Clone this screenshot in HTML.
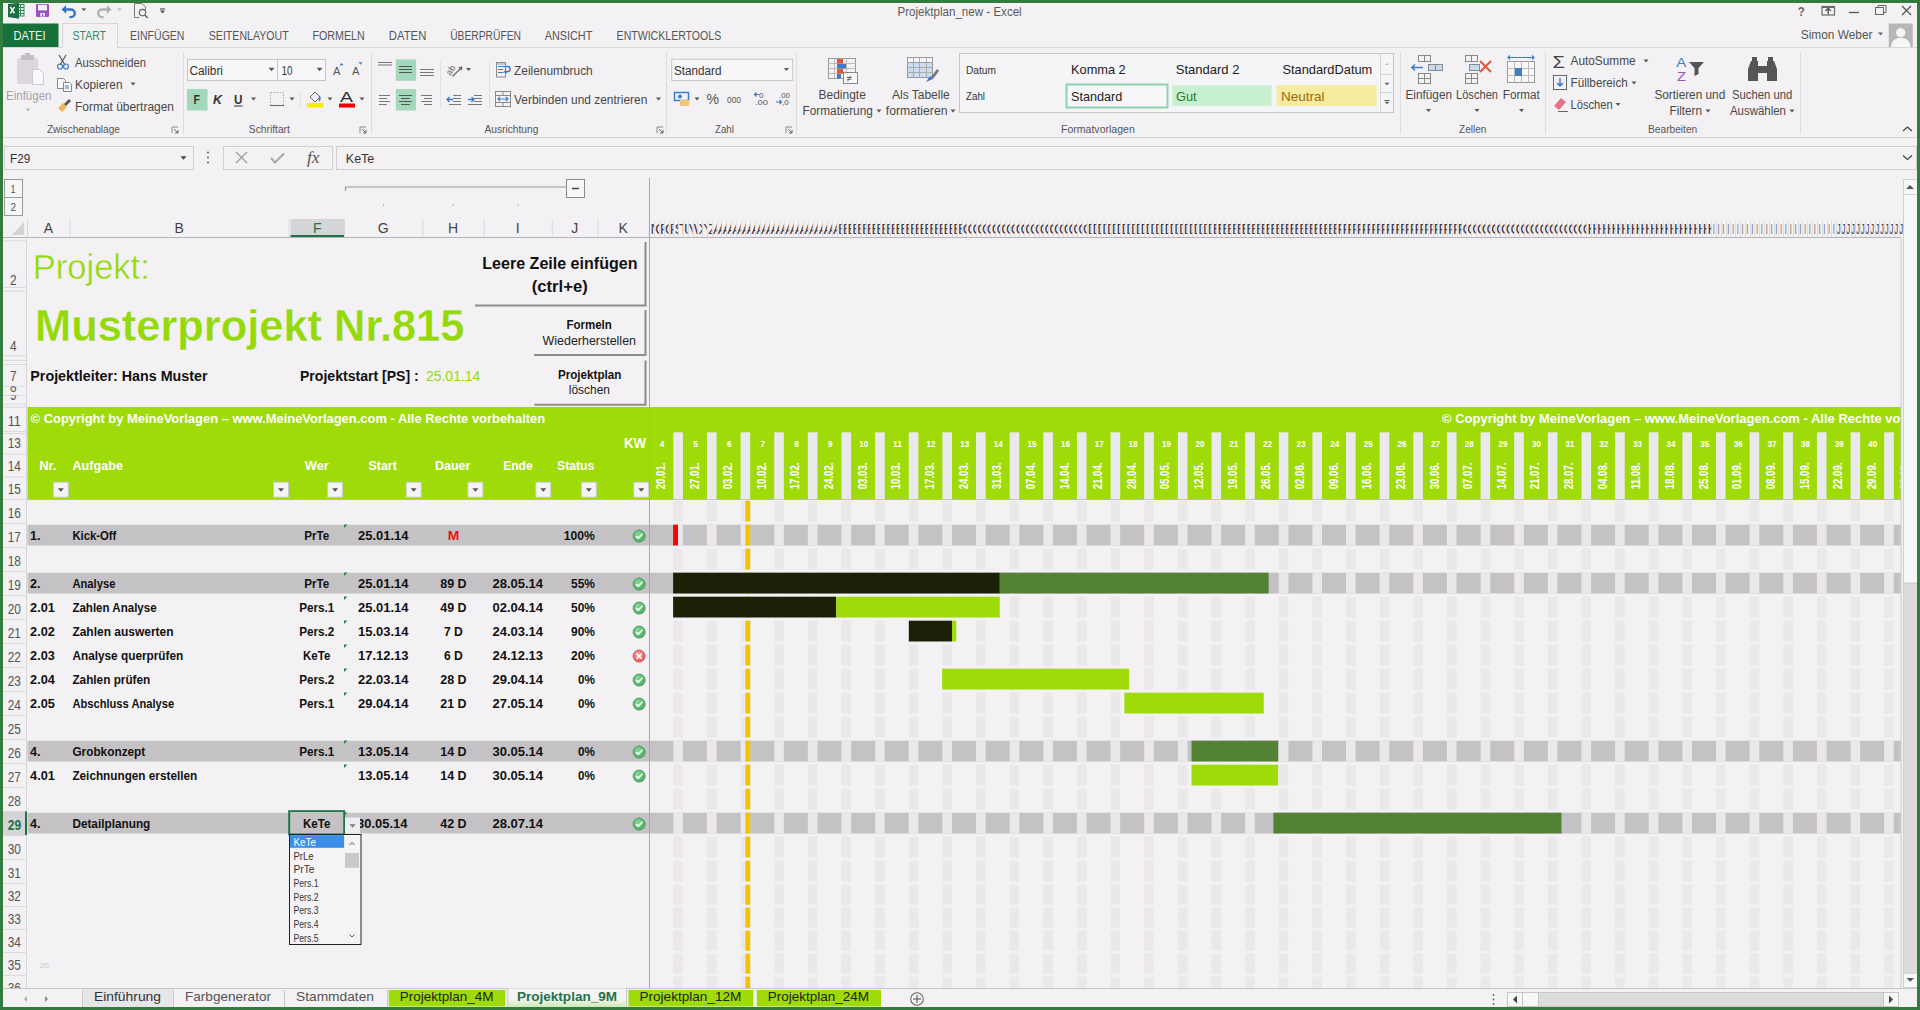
<!DOCTYPE html>
<html lang="de"><head><meta charset="utf-8"><title>Projektplan_new - Excel</title>
<style>
html,body{margin:0;padding:0;width:1920px;height:1010px;overflow:hidden;background:#f3f1f4;font-family:"Liberation Sans", sans-serif;}
svg text{white-space:pre;}
</style></head><body>
<div id="ribbon" style="position:absolute;left:0px;top:0px;width:1920px;height:178px;overflow:hidden;"><svg width="1920" height="178" viewBox="0 0 1920 178" style="display:block;font-family:'Liberation Sans', sans-serif"><text x="897.5" y="15.8" font-size="12" fill="#5b5b5b" textLength="124.2" lengthAdjust="spacingAndGlyphs">Projektplan_new - Excel</text><rect x="17.50" y="4.50" width="6.50" height="11.50" fill="#f4f6f4" stroke="#2a8a52" stroke-width="1"/><line x1="18" y1="7.5" x2="24" y2="7.5" stroke="#2a8a52" stroke-width="1"/><line x1="18" y1="10.5" x2="24" y2="10.5" stroke="#2a8a52" stroke-width="1"/><line x1="18" y1="13.5" x2="24" y2="13.5" stroke="#2a8a52" stroke-width="1"/><line x1="20.5" y1="4.5" x2="20.5" y2="16" stroke="#2a8a52" stroke-width="1"/><path d="M8 4 L19 2.8 L19 18.8 L8 17 Z" fill="#1d6e42"/><path d="M10.3 6.8 l4.2 6.6 M14.5 6.8 l-4.2 6.6" fill="none" stroke="#ffffff" stroke-width="1.5"/><rect x="36.00" y="4.00" width="13.00" height="13.00" fill="#9a52c0" rx="1.2"/><rect x="38.00" y="4.80" width="9.00" height="5.60" fill="#f4eef7"/><rect x="40.30" y="13.00" width="4.60" height="3.60" fill="#f4eef7"/><rect x="42.00" y="13.80" width="1.30" height="2.80" fill="#9a52c0"/><path d="M64.5 9.5 h6.5 a3.8 3.8 0 0 1 0 7.6 h-1.5" fill="none" stroke="#2f74c6" stroke-width="2.4"/><path d="M61.5 9.5 l4.6 -4.2 v8.4 z" fill="#2f74c6"/><path d="M81.3 8.3h5l-2.5 3z" fill="#666"/><path d="M108.5 9.5 h-6.5 a3.8 3.8 0 0 0 0 7.6 h1.5" fill="none" stroke="#b0aeb1" stroke-width="2.4"/><path d="M111.5 9.5 l-4.6 -4.2 v8.4 z" fill="#b0aeb1"/><path d="M117.0 8.3h5l-2.5 3z" fill="#c4c2c5"/><path d="M134.5 17.5 V3.5 H142 l3.5 3.5 v3" fill="none" stroke="#777" stroke-width="1"/><path d="M134.5 17.5 h5" fill="none" stroke="#777" stroke-width="1"/><circle cx="142.5" cy="12.6" r="3.2" fill="none" stroke="#666" stroke-width="1.2"/><line x1="144.8" y1="15" x2="147.8" y2="18" stroke="#666" stroke-width="1.6"/><line x1="160" y1="9" x2="165" y2="9" stroke="#555" stroke-width="1.2"/><path d="M160.0 10.5h5l-2.5 3z" fill="#555"/><text x="1797.8" y="15.5" font-size="13" fill="#666" font-weight="bold" textLength="7.0" lengthAdjust="spacingAndGlyphs">?</text><rect x="1822.00" y="6.50" width="12.50" height="8.50" fill="none" stroke="#6a6a6a" stroke-width="1.2"/><rect x="1822.00" y="6.00" width="12.50" height="2.00" fill="#6a6a6a"/><path d="M1828.2 14.5 v-6 M1825.5 11 l2.7 -2.7 l2.7 2.7" fill="none" stroke="#555" stroke-width="1.4"/><line x1="1849" y1="12.5" x2="1859" y2="12.5" stroke="#555" stroke-width="1.3"/><rect x="1875.50" y="7.50" width="8.00" height="7.00" fill="none" stroke="#666" stroke-width="1"/><path d="M1878 7.5 v-2 h8 v7 h-2" fill="none" stroke="#666" stroke-width="1"/><path d="M1902 6 l9 9 M1911 6 l-9 9" fill="none" stroke="#555" stroke-width="1.3"/><text x="1800.7" y="39.0" font-size="12" fill="#555" textLength="71.9" lengthAdjust="spacingAndGlyphs">Simon Weber</text><path d="M1878.0 32.5h5l-2.5 3z" fill="#666"/><rect x="1888.75" y="23.50" width="24.00" height="24.00" fill="#b8b6b9"/><path d="M1900.7 28 a4.6 4.6 0 1 1 -0.1 0 z" fill="#f6f6f6"/><path d="M1891 47.5 c0 -7 4 -9.5 9.7 -9.5 c5.7 0 9.7 2.5 9.7 9.5 z" fill="#f6f6f6"/><rect x="3.00" y="23.50" width="55.50" height="24.00" fill="#16703a"/><text x="13.5" y="40.0" font-size="12" fill="#f2f5f2" textLength="32.0" lengthAdjust="spacingAndGlyphs">DATEI</text><line x1="3" y1="47.5" x2="1917" y2="47.5" stroke="#d6d5d8" stroke-width="1"/><path d="M62.5 47.5 V23.5 H117.5 V47.5" fill="#f3f1f4" stroke="#d6d5d8" stroke-width="1"/><rect x="63.00" y="46.00" width="54.00" height="3.00" fill="#f3f1f4"/><text x="72.5" y="40.0" font-size="12" fill="#3a8a5e" textLength="33.5" lengthAdjust="spacingAndGlyphs">START</text><text x="130.0" y="40.0" font-size="12" fill="#555" textLength="54.5" lengthAdjust="spacingAndGlyphs">EINFÜGEN</text><text x="208.8" y="40.0" font-size="12" fill="#555" textLength="79.8" lengthAdjust="spacingAndGlyphs">SEITENLAYOUT</text><text x="312.5" y="40.0" font-size="12" fill="#555" textLength="52.2" lengthAdjust="spacingAndGlyphs">FORMELN</text><text x="388.8" y="40.0" font-size="12" fill="#555" textLength="37.5" lengthAdjust="spacingAndGlyphs">DATEN</text><text x="450.2" y="40.0" font-size="12" fill="#555" textLength="70.8" lengthAdjust="spacingAndGlyphs">ÜBERPRÜFEN</text><text x="544.7" y="40.0" font-size="12" fill="#555" textLength="47.6" lengthAdjust="spacingAndGlyphs">ANSICHT</text><text x="616.6" y="40.0" font-size="12" fill="#555" textLength="104.6" lengthAdjust="spacingAndGlyphs">ENTWICKLERTOOLS</text><line x1="3" y1="137.5" x2="1917" y2="137.5" stroke="#d4d3d6" stroke-width="1"/><line x1="183.5" y1="52" x2="183.5" y2="134" stroke="#dddcdf" stroke-width="1"/><line x1="371.5" y1="52" x2="371.5" y2="134" stroke="#dddcdf" stroke-width="1"/><line x1="666.5" y1="52" x2="666.5" y2="134" stroke="#dddcdf" stroke-width="1"/><line x1="796.5" y1="52" x2="796.5" y2="134" stroke="#dddcdf" stroke-width="1"/><line x1="1400.5" y1="52" x2="1400.5" y2="134" stroke="#dddcdf" stroke-width="1"/><line x1="1545.5" y1="52" x2="1545.5" y2="134" stroke="#dddcdf" stroke-width="1"/><line x1="1800.5" y1="52" x2="1800.5" y2="134" stroke="#dddcdf" stroke-width="1"/><text x="46.9" y="132.6" font-size="11" fill="#555" textLength="73.1" lengthAdjust="spacingAndGlyphs">Zwischenablage</text><text x="248.8" y="132.6" font-size="11" fill="#555" textLength="41.1" lengthAdjust="spacingAndGlyphs">Schriftart</text><text x="484.5" y="132.6" font-size="11" fill="#555" textLength="53.9" lengthAdjust="spacingAndGlyphs">Ausrichtung</text><text x="715.0" y="132.6" font-size="11" fill="#555" textLength="18.9" lengthAdjust="spacingAndGlyphs">Zahl</text><text x="1061.0" y="132.6" font-size="11" fill="#555" textLength="73.8" lengthAdjust="spacingAndGlyphs">Formatvorlagen</text><text x="1459.0" y="132.6" font-size="11" fill="#555" textLength="27.4" lengthAdjust="spacingAndGlyphs">Zellen</text><text x="1648.0" y="132.6" font-size="11" fill="#555" textLength="49.3" lengthAdjust="spacingAndGlyphs">Bearbeiten</text><path d="M172 133 v-6 h6" fill="none" stroke="#888" stroke-width="1"/><path d="M174 129 l4 4 M178 130 v3 h-3" fill="none" stroke="#666" stroke-width="1"/><path d="M360 133 v-6 h6" fill="none" stroke="#888" stroke-width="1"/><path d="M362 129 l4 4 M366 130 v3 h-3" fill="none" stroke="#666" stroke-width="1"/><path d="M657 133 v-6 h6" fill="none" stroke="#888" stroke-width="1"/><path d="M659 129 l4 4 M663 130 v3 h-3" fill="none" stroke="#666" stroke-width="1"/><path d="M786 133 v-6 h6" fill="none" stroke="#888" stroke-width="1"/><path d="M788 129 l4 4 M792 130 v3 h-3" fill="none" stroke="#666" stroke-width="1"/><rect x="17.00" y="58.00" width="21.00" height="26.00" fill="#dcd7df" rx="1.5"/><rect x="21.00" y="55.00" width="13.00" height="5.00" fill="#c2bcc5" rx="1"/><rect x="25.00" y="53.00" width="5.00" height="3.00" fill="#c2bcc5"/><path d="M32.5 69.5 h7 l4 4 v11 h-11 z" fill="#f9f8fa" stroke="#cdc9d0" stroke-width="1"/><text x="6.0" y="100.0" font-size="12" fill="#a5a3a7" textLength="45.5" lengthAdjust="spacingAndGlyphs">Einfügen</text><path d="M25.5 108.5h5l-2.5 3z" fill="#bbb"/><text x="75.0" y="66.9" font-size="12" fill="#484848" textLength="71.0" lengthAdjust="spacingAndGlyphs">Ausschneiden</text><path d="M59 55 l6 10 M66 55 l-6 10" fill="none" stroke="#555" stroke-width="1.2"/><circle cx="60" cy="66.5" r="2.5" fill="none" stroke="#3d7cc9" stroke-width="1.2"/><circle cx="66" cy="66.5" r="2.5" fill="none" stroke="#3d7cc9" stroke-width="1.2"/><text x="75.0" y="88.8" font-size="12" fill="#484848" textLength="47.5" lengthAdjust="spacingAndGlyphs">Kopieren</text><path d="M130.5 82.5h5l-2.5 3z" fill="#555"/><path d="M57.5 78.5 h6 l2 2 v8 h-8 z" fill="#f8f8f8" stroke="#888" stroke-width="1"/><path d="M63.5 82.5 h6 l2 2 v7 h-8 z" fill="#f8f8f8" stroke="#888" stroke-width="1"/><line x1="65" y1="86" x2="69" y2="86" stroke="#3d7cc9" stroke-width="1"/><line x1="65" y1="88" x2="69" y2="88" stroke="#3d7cc9" stroke-width="1"/><text x="75.0" y="111.2" font-size="12" fill="#484848" textLength="99.0" lengthAdjust="spacingAndGlyphs">Format übertragen</text><path d="M58 108 l5 -5 l4 4 l-5 5 z" fill="#f0b65a"/><path d="M64 104 l5 -5 l2 2 l-5 5 z" fill="#555"/><rect x="187.50" y="59.50" width="90.00" height="21.00" fill="#f7f6f9" stroke="#c6c6c6" stroke-width="1"/><rect x="277.50" y="59.50" width="48.00" height="21.00" fill="#f7f6f9" stroke="#c6c6c6" stroke-width="1"/><text x="189.4" y="74.6" font-size="12" fill="#333" textLength="33.6" lengthAdjust="spacingAndGlyphs">Calibri</text><path d="M268.5 67.8h6l-3.0 3.5z" fill="#555"/><text x="281.6" y="74.6" font-size="12" fill="#333" textLength="11.0" lengthAdjust="spacingAndGlyphs">10</text><path d="M316.6 67.8h6l-3.0 3.5z" fill="#555"/><text x="333.0" y="75.0" font-size="11" fill="#555" textLength="7.5" lengthAdjust="spacingAndGlyphs">A</text><path d="M339.3 65.3 l2.2 -2.3 l2.2 2.3 z" fill="#3d7cc9"/><text x="352.0" y="75.0" font-size="11" fill="#555" textLength="7.5" lengthAdjust="spacingAndGlyphs">A</text><path d="M358.5 62.2h4l-2.0 2.5z" fill="#3d7cc9"/><rect x="187.00" y="89.00" width="20.50" height="21.50" fill="#a3d8ba"/><text x="193.5" y="103.7" font-size="13" fill="#333" font-weight="bold" textLength="6.5" lengthAdjust="spacingAndGlyphs">F</text><text x="213.0" y="103.7" font-size="13" fill="#333" font-weight="bold" font-style="italic" textLength="9.0" lengthAdjust="spacingAndGlyphs">K</text><text x="234.0" y="103.7" font-size="13" fill="#333" font-weight="bold" textLength="8.5" lengthAdjust="spacingAndGlyphs">U</text><line x1="234" y1="106" x2="242.5" y2="106" stroke="#333" stroke-width="1"/><path d="M251.0 97.5h5l-2.5 3z" fill="#555"/><rect x="270.50" y="92.50" width="13.00" height="13.00" fill="none" stroke="#aaa" stroke-width="1" stroke-dasharray="1.5 1.5"/><line x1="270" y1="105.5" x2="284" y2="105.5" stroke="#666" stroke-width="1"/><path d="M289.5 97.5h5l-2.5 3z" fill="#555"/><line x1="300.5" y1="92" x2="300.5" y2="108" stroke="#e0dfe2" stroke-width="1"/><path d="M310 97 l5 -5 l5 5 l-5 5 z" fill="none" stroke="#666" stroke-width="1"/><path d="M319 96 q2 2 0 5" fill="none" stroke="#3d7cc9" stroke-width="1.5"/><rect x="307.00" y="103.00" width="16.50" height="4.50" fill="#f5ef00"/><path d="M327.5 97.5h5l-2.5 3z" fill="#555"/><text x="340.0" y="101.5" font-size="14" fill="#333" textLength="13.0" lengthAdjust="spacingAndGlyphs">A</text><rect x="339.00" y="103.50" width="16.00" height="4.00" fill="#f00000"/><path d="M359.5 97.5h5l-2.5 3z" fill="#555"/><line x1="378" y1="62.5" x2="392" y2="62.5" stroke="#777" stroke-width="1"/><line x1="378" y1="65.0" x2="392" y2="65.0" stroke="#777" stroke-width="1"/><line x1="378" y1="67.5" x2="378" y2="67.5" stroke="#777" stroke-width="1"/><rect x="395.80" y="59.40" width="20.30" height="21.40" fill="#a3d8ba"/><line x1="399" y1="66.5" x2="412" y2="66.5" stroke="#555" stroke-width="1"/><line x1="399" y1="69.5" x2="412" y2="69.5" stroke="#555" stroke-width="1"/><line x1="399" y1="72.5" x2="412" y2="72.5" stroke="#555" stroke-width="1"/><line x1="420" y1="69.5" x2="434" y2="69.5" stroke="#777" stroke-width="1"/><line x1="420" y1="72.5" x2="434" y2="72.5" stroke="#777" stroke-width="1"/><line x1="420" y1="75.5" x2="434" y2="75.5" stroke="#777" stroke-width="1"/><line x1="379" y1="95.5" x2="390" y2="95.5" stroke="#777" stroke-width="1"/><line x1="379" y1="98.5" x2="387" y2="98.5" stroke="#777" stroke-width="1"/><line x1="379" y1="101.5" x2="390" y2="101.5" stroke="#777" stroke-width="1"/><line x1="379" y1="104.5" x2="387" y2="104.5" stroke="#777" stroke-width="1"/><rect x="395.80" y="89.10" width="20.30" height="21.40" fill="#a3d8ba"/><line x1="399" y1="95.5" x2="412" y2="95.5" stroke="#555" stroke-width="1"/><line x1="401" y1="98.5" x2="410" y2="98.5" stroke="#555" stroke-width="1"/><line x1="399" y1="101.5" x2="412" y2="101.5" stroke="#555" stroke-width="1"/><line x1="401" y1="104.5" x2="410" y2="104.5" stroke="#555" stroke-width="1"/><line x1="421" y1="95.5" x2="432" y2="95.5" stroke="#777" stroke-width="1"/><line x1="424" y1="98.5" x2="432" y2="98.5" stroke="#777" stroke-width="1"/><line x1="421" y1="101.5" x2="432" y2="101.5" stroke="#777" stroke-width="1"/><line x1="424" y1="104.5" x2="432" y2="104.5" stroke="#777" stroke-width="1"/><path d="M452.5 76.5 l9 -9" fill="none" stroke="#666" stroke-width="1.1"/><path d="M462.5 66.5 l-4.2 0.8 l3.4 3.4 z" fill="#666"/><text transform="translate(450.5,76) rotate(-58)" font-size="9" fill="#666">ab</text><path d="M466.0 68.0h5l-2.5 3z" fill="#555"/><line x1="440.5" y1="62" x2="440.5" y2="108" stroke="#e0dfe2" stroke-width="1"/><line x1="489.5" y1="62" x2="489.5" y2="108" stroke="#e0dfe2" stroke-width="1"/><line x1="453" y1="95.5" x2="461" y2="95.5" stroke="#777" stroke-width="1"/><line x1="453" y1="98.5" x2="461" y2="98.5" stroke="#777" stroke-width="1"/><line x1="453" y1="101.5" x2="461" y2="101.5" stroke="#777" stroke-width="1"/><line x1="449" y1="104.5" x2="461" y2="104.5" stroke="#777" stroke-width="1"/><path d="M447 99.5 h6 M449.5 97 l-2.5 2.5 l2.5 2.5" fill="none" stroke="#3d7cc9" stroke-width="1.3"/><line x1="474" y1="95.5" x2="482" y2="95.5" stroke="#777" stroke-width="1"/><line x1="474" y1="98.5" x2="482" y2="98.5" stroke="#777" stroke-width="1"/><line x1="474" y1="101.5" x2="482" y2="101.5" stroke="#777" stroke-width="1"/><line x1="468" y1="104.5" x2="482" y2="104.5" stroke="#777" stroke-width="1"/><path d="M468 99.5 h6 M471.5 97 l2.5 2.5 l-2.5 2.5" fill="none" stroke="#3d7cc9" stroke-width="1.3"/><rect x="496.50" y="62.50" width="9.00" height="14.50" fill="none" stroke="#8a8a8a" stroke-width="1"/><rect x="497.00" y="63.00" width="8.00" height="2.00" fill="#c9c7ca"/><line x1="498" y1="66.5" x2="507" y2="66.5" stroke="#3d7cc9" stroke-width="1"/><line x1="498" y1="69.5" x2="503" y2="69.5" stroke="#3d7cc9" stroke-width="1"/><line x1="498" y1="72.5" x2="503.5" y2="72.5" stroke="#3d7cc9" stroke-width="1"/><path d="M506 66.5 h1.5 a2.6 2.6 0 0 1 0 5.2 h-1.5" fill="none" stroke="#3d7cc9" stroke-width="1.5"/><path d="M503.6 71.7 l2.8 -2.5 v5 z" fill="#3d7cc9"/><text x="514.0" y="74.6" font-size="12" fill="#484848" textLength="78.7" lengthAdjust="spacingAndGlyphs">Zeilenumbruch</text><rect x="495.50" y="91.50" width="15.00" height="15.00" fill="none" stroke="#888" stroke-width="1"/><line x1="495.5" y1="95.5" x2="510.5" y2="95.5" stroke="#888" stroke-width="1"/><line x1="495.5" y1="102.5" x2="510.5" y2="102.5" stroke="#888" stroke-width="1"/><line x1="503" y1="91.5" x2="503" y2="95.5" stroke="#888" stroke-width="1"/><line x1="503" y1="102.5" x2="503" y2="106.5" stroke="#888" stroke-width="1"/><path d="M498 99 h10 M500 97 l-2 2 l2 2 M506 97 l2 2 l-2 2" fill="none" stroke="#3d7cc9" stroke-width="1.1"/><text x="514.0" y="103.8" font-size="12" fill="#484848" textLength="133.3" lengthAdjust="spacingAndGlyphs">Verbinden und zentrieren</text><path d="M656.0 97.5h5l-2.5 3z" fill="#555"/><rect x="671.70" y="59.25" width="121.00" height="21.25" fill="#f7f6f9" stroke="#c6c6c6" stroke-width="1"/><text x="674.0" y="74.6" font-size="12" fill="#333" textLength="47.4" lengthAdjust="spacingAndGlyphs">Standard</text><path d="M784.0 68.0h5l-2.5 3z" fill="#555"/><rect x="674.50" y="92.50" width="14.00" height="8.00" fill="none" stroke="#3d7cc9" stroke-width="1.5"/><circle cx="680" cy="96.5" r="2" fill="#3d7cc9"/><rect x="680.00" y="100.00" width="9.00" height="6.00" fill="#f3c37a"/><path d="M694.5 97.5h5l-2.5 3z" fill="#555"/><text x="706.5" y="104.0" font-size="14" fill="#555" textLength="12.5" lengthAdjust="spacingAndGlyphs">%</text><text x="727.0" y="103.0" font-size="9" fill="#555" textLength="14.0" lengthAdjust="spacingAndGlyphs">000</text><text x="759.0" y="97.5" font-size="8" fill="#555">0</text><text x="755.0" y="105.0" font-size="8" fill="#555" textLength="13.0" lengthAdjust="spacingAndGlyphs">.00</text><path d="M755 94.5 h4 M756.5 92.5 l-2 2 l2 2" fill="none" stroke="#3d7cc9" stroke-width="1.2"/><text x="779.0" y="97.5" font-size="8" fill="#555" textLength="11.0" lengthAdjust="spacingAndGlyphs">.00</text><text x="782.0" y="105.0" font-size="8" fill="#555">,0</text><path d="M776 102 h5 M779.5 100 l2 2 l-2 2" fill="none" stroke="#3d7cc9" stroke-width="1.2"/><rect x="828.50" y="58.50" width="27.00" height="20.00" fill="none" stroke="#999" stroke-width="1"/><line x1="834.5" y1="58.5" x2="834.5" y2="78.5" stroke="#bbb" stroke-width="1"/><line x1="840.5" y1="58.5" x2="840.5" y2="78.5" stroke="#bbb" stroke-width="1"/><line x1="846.5" y1="58.5" x2="846.5" y2="78.5" stroke="#bbb" stroke-width="1"/><line x1="828.5" y1="63.5" x2="855.5" y2="63.5" stroke="#bbb" stroke-width="1"/><line x1="828.5" y1="68.5" x2="855.5" y2="68.5" stroke="#bbb" stroke-width="1"/><line x1="828.5" y1="73.5" x2="855.5" y2="73.5" stroke="#bbb" stroke-width="1"/><rect x="837.00" y="59.00" width="6.00" height="4.50" fill="#e0553a"/><rect x="837.00" y="64.00" width="9.00" height="4.50" fill="#3d7cc9"/><rect x="837.00" y="69.00" width="6.00" height="4.50" fill="#e0553a"/><rect x="837.00" y="74.00" width="4.00" height="4.50" fill="#3d7cc9"/><rect x="843.50" y="72.50" width="14.00" height="11.00" fill="#f7f6f9" stroke="#888" stroke-width="1"/><text x="846.5" y="82.0" font-size="10" fill="#444">≠</text><text x="818.6" y="98.8" font-size="12" fill="#484848" textLength="47.2" lengthAdjust="spacingAndGlyphs">Bedingte</text><text x="802.5" y="114.9" font-size="12" fill="#484848" textLength="70.3" lengthAdjust="spacingAndGlyphs">Formatierung</text><path d="M876.5 109.5h5l-2.5 3z" fill="#555"/><rect x="907.50" y="57.50" width="25.00" height="20.00" fill="#cddcf0" stroke="#999" stroke-width="1"/><rect x="907.50" y="57.50" width="25.00" height="5.00" fill="#f7f6f9" stroke="#999" stroke-width="1"/><line x1="913.5" y1="57.5" x2="913.5" y2="77.5" stroke="#aaa" stroke-width="1"/><line x1="919.5" y1="57.5" x2="919.5" y2="77.5" stroke="#aaa" stroke-width="1"/><line x1="926.5" y1="57.5" x2="926.5" y2="77.5" stroke="#aaa" stroke-width="1"/><line x1="907.5" y1="67.5" x2="932.5" y2="67.5" stroke="#aaa" stroke-width="1"/><line x1="907.5" y1="72.5" x2="932.5" y2="72.5" stroke="#aaa" stroke-width="1"/><path d="M926 82 l4 -6 l3 3 z" fill="#3d7cc9"/><path d="M931 77 l6 -8 l2 2 l-6 8 z" fill="#777"/><text x="892.0" y="98.8" font-size="12" fill="#484848" textLength="57.8" lengthAdjust="spacingAndGlyphs">Als Tabelle</text><text x="885.8" y="114.9" font-size="12" fill="#484848" textLength="61.7" lengthAdjust="spacingAndGlyphs">formatieren</text><path d="M950.5 109.5h5l-2.5 3z" fill="#555"/><rect x="959.50" y="53.50" width="434.00" height="59.00" fill="#f5f4f7" stroke="#c6c6c6" stroke-width="1"/><line x1="1380.5" y1="53.5" x2="1380.5" y2="112.5" stroke="#d6d6d6" stroke-width="1"/><line x1="1380.5" y1="74.5" x2="1393.5" y2="74.5" stroke="#d6d6d6" stroke-width="1"/><line x1="1380.5" y1="92.5" x2="1393.5" y2="92.5" stroke="#d6d6d6" stroke-width="1"/><path d="M1385 65 l2 -2 l2 2z" fill="#bbb"/><path d="M1384.5 82.8h5l-2.5 2.5z" fill="#666"/><line x1="1384.5" y1="100.5" x2="1389.5" y2="100.5" stroke="#666" stroke-width="1"/><path d="M1384.5 101.8h5l-2.5 2.5z" fill="#666"/><text x="966.0" y="74.2" font-size="10" fill="#333" textLength="30.0" lengthAdjust="spacingAndGlyphs">Datum</text><text x="966.0" y="100.3" font-size="10" fill="#333" textLength="19.0" lengthAdjust="spacingAndGlyphs">Zahl</text><text x="1071.0" y="74.2" font-size="13" fill="#222" textLength="54.7" lengthAdjust="spacingAndGlyphs">Komma 2</text><text x="1175.7" y="74.2" font-size="13" fill="#222" textLength="63.8" lengthAdjust="spacingAndGlyphs">Standard 2</text><text x="1282.4" y="74.2" font-size="13" fill="#222" textLength="89.9" lengthAdjust="spacingAndGlyphs">StandardDatum</text><rect x="1066.50" y="84.50" width="101.00" height="23.00" fill="#f7f6f9" stroke="#8fd1ad" stroke-width="2"/><text x="1071.0" y="101.0" font-size="13" fill="#222" textLength="51.3" lengthAdjust="spacingAndGlyphs">Standard</text><rect x="1172.30" y="85.20" width="99.20" height="20.80" fill="#c8efcf"/><text x="1176.0" y="101.0" font-size="13" fill="#1e7a30" textLength="20.5" lengthAdjust="spacingAndGlyphs">Gut</text><rect x="1276.70" y="85.20" width="100.00" height="20.80" fill="#f6eb9e"/><text x="1281.0" y="101.0" font-size="13" fill="#a06a10" textLength="43.6" lengthAdjust="spacingAndGlyphs">Neutral</text><rect x="1418.50" y="55.50" width="12.00" height="6.00" fill="none" stroke="#888" stroke-width="1"/><line x1="1424.5" y1="55.5" x2="1424.5" y2="61.5" stroke="#888" stroke-width="1"/><rect x="1428.50" y="64.50" width="14.00" height="6.00" fill="#c8d8ee" stroke="#888" stroke-width="1"/><line x1="1435.5" y1="64.5" x2="1435.5" y2="70.5" stroke="#888" stroke-width="1"/><path d="M1411 67.5 h12 M1415 64.5 l-3 3 l3 3" fill="none" stroke="#3d7cc9" stroke-width="1.5"/><rect x="1418.50" y="73.50" width="12.00" height="10.00" fill="none" stroke="#888" stroke-width="1"/><line x1="1424.5" y1="73.5" x2="1424.5" y2="83.5" stroke="#888" stroke-width="1"/><line x1="1418.5" y1="78.5" x2="1430.5" y2="78.5" stroke="#888" stroke-width="1"/><text x="1405.5" y="99.0" font-size="12" fill="#484848" textLength="46.5" lengthAdjust="spacingAndGlyphs">Einfügen</text><path d="M1426.0 109.0h5l-2.5 3z" fill="#555"/><rect x="1465.50" y="55.50" width="12.00" height="6.00" fill="none" stroke="#888" stroke-width="1"/><line x1="1471.5" y1="55.5" x2="1471.5" y2="61.5" stroke="#888" stroke-width="1"/><rect x="1469.50" y="64.50" width="10.00" height="6.00" fill="#c8d8ee" stroke="#888" stroke-width="1"/><rect x="1465.50" y="73.50" width="12.00" height="10.00" fill="none" stroke="#888" stroke-width="1"/><line x1="1471.5" y1="73.5" x2="1471.5" y2="83.5" stroke="#888" stroke-width="1"/><line x1="1465.5" y1="78.5" x2="1477.5" y2="78.5" stroke="#888" stroke-width="1"/><path d="M1480 61 l11 11 M1491 61 l-11 11" fill="none" stroke="#e0553a" stroke-width="1.8"/><text x="1456.0" y="99.0" font-size="12" fill="#484848" textLength="42.0" lengthAdjust="spacingAndGlyphs">Löschen</text><path d="M1474.5 109.0h5l-2.5 3z" fill="#555"/><path d="M1508 57.5 h26 M1510 55.5 l-2 2 l2 2 M1532 55.5 l2 2 l-2 2" fill="none" stroke="#3d7cc9" stroke-width="1.2"/><rect x="1507.50" y="61.50" width="27.00" height="21.00" fill="#f7f6f9" stroke="#999" stroke-width="1"/><line x1="1514.5" y1="61.5" x2="1514.5" y2="82.5" stroke="#bbb" stroke-width="1"/><line x1="1521.5" y1="61.5" x2="1521.5" y2="82.5" stroke="#bbb" stroke-width="1"/><line x1="1528.5" y1="61.5" x2="1528.5" y2="82.5" stroke="#bbb" stroke-width="1"/><line x1="1507.5" y1="68.5" x2="1534.5" y2="68.5" stroke="#bbb" stroke-width="1"/><line x1="1507.5" y1="75.5" x2="1534.5" y2="75.5" stroke="#bbb" stroke-width="1"/><rect x="1515.00" y="68.00" width="7.00" height="8.00" fill="#3d7cc9"/><text x="1502.8" y="99.0" font-size="12" fill="#484848" textLength="37.0" lengthAdjust="spacingAndGlyphs">Format</text><path d="M1519.0 109.0h5l-2.5 3z" fill="#555"/><text x="1552.5" y="67.8" font-size="17" fill="#444" textLength="12.5" lengthAdjust="spacingAndGlyphs">Σ</text><text x="1570.5" y="65.0" font-size="12" fill="#484848" textLength="65.1" lengthAdjust="spacingAndGlyphs">AutoSumme</text><path d="M1643.5 59.5h5l-2.5 3z" fill="#555"/><rect x="1553.50" y="75.50" width="13.00" height="14.00" fill="none" stroke="#666" stroke-width="1"/><path d="M1560 78 v8 M1557 83 l3 3 l3 -3" fill="none" stroke="#3d7cc9" stroke-width="1.5"/><text x="1570.5" y="87.2" font-size="12" fill="#484848" textLength="57.3" lengthAdjust="spacingAndGlyphs">Füllbereich</text><path d="M1631.5 81.5h5l-2.5 3z" fill="#555"/><path d="M1554 106 l7 -8 l5 4 l-7 8 z" fill="#e8708a"/><line x1="1558" y1="111.5" x2="1568" y2="111.5" stroke="#666" stroke-width="1"/><text x="1570.5" y="108.9" font-size="12" fill="#484848" textLength="42.2" lengthAdjust="spacingAndGlyphs">Löschen</text><path d="M1615.5 103.0h5l-2.5 3z" fill="#555"/><text x="1676.3" y="67.0" font-size="13" fill="#3d7cc9" textLength="10.0" lengthAdjust="spacingAndGlyphs">A</text><text x="1677.0" y="80.5" font-size="13" fill="#9b55c3" textLength="9.0" lengthAdjust="spacingAndGlyphs">Z</text><path d="M1689 62 h15 l-5.5 6 v6 l-4 2 v-8 z" fill="#555"/><text x="1654.4" y="98.8" font-size="12" fill="#484848" textLength="70.8" lengthAdjust="spacingAndGlyphs">Sortieren und</text><text x="1669.5" y="114.9" font-size="12" fill="#484848" textLength="32.5" lengthAdjust="spacingAndGlyphs">Filtern</text><path d="M1705.5 109.5h5l-2.5 3z" fill="#555"/><path d="M1751 61 h7 v20 h-10 v-12 z M1767 61 h7 l3 8 v12 h-10 z M1758 66 h9 v7 h-9 z" fill="#555"/><rect x="1752.00" y="57.00" width="5.00" height="5.00" fill="#555"/><rect x="1768.00" y="57.00" width="5.00" height="5.00" fill="#555"/><text x="1732.0" y="98.8" font-size="12" fill="#484848" textLength="60.4" lengthAdjust="spacingAndGlyphs">Suchen und</text><text x="1730.0" y="114.9" font-size="12" fill="#484848" textLength="55.9" lengthAdjust="spacingAndGlyphs">Auswählen</text><path d="M1789.5 109.5h5l-2.5 3z" fill="#555"/><path d="M1903 131 l4.5 -4 l4.5 4" fill="none" stroke="#444" stroke-width="1.3"/><rect x="4.50" y="146.50" width="189.00" height="23.00" fill="none" stroke="#d0cfd2" stroke-width="1"/><text x="10.0" y="163.0" font-size="13" fill="#333" textLength="20.2" lengthAdjust="spacingAndGlyphs">F29</text><path d="M180.5 156.2h6l-3.0 3.5z" fill="#444"/><circle cx="208" cy="152.5" r="0.9" fill="#555"/><circle cx="208" cy="157.5" r="0.9" fill="#555"/><circle cx="208" cy="162.5" r="0.9" fill="#555"/><rect x="223.50" y="146.50" width="109.00" height="23.00" fill="none" stroke="#d0cfd2" stroke-width="1"/><path d="M236 152 l11 11 M247 152 l-11 11" fill="none" stroke="#9a9a9a" stroke-width="1.2"/><path d="M271 158 l4 4.5 l9 -9" fill="none" stroke="#a8a8a8" stroke-width="2"/><text x="307.0" y="163.0" font-size="16" fill="#555" font-style="italic" textLength="12.5" lengthAdjust="spacingAndGlyphs" font-family="Liberation Serif">fx</text><rect x="336.50" y="146.50" width="1580.00" height="23.00" fill="none" stroke="#d0cfd2" stroke-width="1"/><text x="345.8" y="163.0" font-size="13" fill="#333" textLength="28.5" lengthAdjust="spacingAndGlyphs">KeTe</text><path d="M1903 155.5 l4.5 4 l4.5 -4" fill="none" stroke="#444" stroke-width="1.3"/></svg></div><div id="grid" style="position:absolute;left:0px;top:170px;width:1920px;height:840px;overflow:hidden;"><svg width="1920" height="840" viewBox="0 170 1920 840" style="display:block;font-family:'Liberation Sans', sans-serif"><rect x="4.50" y="179.50" width="18.00" height="18.00" fill="#f7f6f9" stroke="#9a9a9a" stroke-width="1"/><text x="10.5" y="192.5" font-size="10" fill="#555" textLength="5.0" lengthAdjust="spacingAndGlyphs">1</text><rect x="4.50" y="197.50" width="18.00" height="18.00" fill="#f7f6f9" stroke="#9a9a9a" stroke-width="1"/><text x="10.5" y="210.5" font-size="10" fill="#555" textLength="5.5" lengthAdjust="spacingAndGlyphs">2</text><path d="M345.5 191 v-4 H566" fill="none" stroke="#999" stroke-width="1.2"/><rect x="566.50" y="179.50" width="18.00" height="18.00" fill="#f7f6f9" stroke="#8a8a8a" stroke-width="1"/><line x1="572" y1="188.5" x2="579" y2="188.5" stroke="#444" stroke-width="1.5"/><rect x="383.00" y="204.50" width="1.00" height="1.00" fill="#777"/><rect x="452.50" y="204.50" width="1.00" height="1.00" fill="#777"/><rect x="517.50" y="204.50" width="1.00" height="1.00" fill="#777"/><line x1="3" y1="237.5" x2="1901" y2="237.5" stroke="#b5b4b7" stroke-width="1"/><path d="M12 235 L24 222 L24 235 Z" fill="#d3d2d5"/><line x1="27.5" y1="219" x2="27.5" y2="237" stroke="#d6d5d8" stroke-width="1"/><text x="48.3" y="233.0" font-size="14" fill="#444" text-anchor="middle">A</text><line x1="70.1" y1="219" x2="70.1" y2="237" stroke="#dad9dc" stroke-width="1"/><text x="179.1" y="233.0" font-size="14" fill="#444" text-anchor="middle">B</text><line x1="289.0" y1="219" x2="289.0" y2="237" stroke="#dad9dc" stroke-width="1"/><rect x="290.50" y="219.00" width="53.50" height="18.00" fill="#d5d4d7"/><rect x="290.50" y="235.00" width="53.50" height="2.00" fill="#217346"/><text x="317.2" y="233.0" font-size="14" fill="#217346" text-anchor="middle">F</text><line x1="344.5" y1="219" x2="344.5" y2="237" stroke="#dad9dc" stroke-width="1"/><text x="383.2" y="233.0" font-size="14" fill="#444" text-anchor="middle">G</text><line x1="422.9" y1="219" x2="422.9" y2="237" stroke="#dad9dc" stroke-width="1"/><text x="453.1" y="233.0" font-size="14" fill="#444" text-anchor="middle">H</text><line x1="484.3" y1="219" x2="484.3" y2="237" stroke="#dad9dc" stroke-width="1"/><text x="517.8" y="233.0" font-size="14" fill="#444" text-anchor="middle">I</text><line x1="552.3" y1="219" x2="552.3" y2="237" stroke="#dad9dc" stroke-width="1"/><text x="574.7" y="233.0" font-size="14" fill="#444" text-anchor="middle">J</text><line x1="598.1" y1="219" x2="598.1" y2="237" stroke="#dad9dc" stroke-width="1"/><text x="623.2" y="233.0" font-size="14" fill="#444" text-anchor="middle">K</text><line x1="649.3" y1="219" x2="649.3" y2="237" stroke="#dad9dc" stroke-width="1"/><line x1="649.5" y1="221" x2="649.5" y2="237" stroke="#dddcdf" stroke-width="1"/><line x1="654.5" y1="221" x2="654.5" y2="237" stroke="#dddcdf" stroke-width="1"/><line x1="659.5" y1="221" x2="659.5" y2="237" stroke="#dddcdf" stroke-width="1"/><line x1="664.5" y1="221" x2="664.5" y2="237" stroke="#dddcdf" stroke-width="1"/><line x1="669.5" y1="221" x2="669.5" y2="237" stroke="#dddcdf" stroke-width="1"/><line x1="673.5" y1="221" x2="673.5" y2="237" stroke="#dddcdf" stroke-width="1"/><line x1="678.5" y1="221" x2="678.5" y2="237" stroke="#dddcdf" stroke-width="1"/><line x1="683.5" y1="221" x2="683.5" y2="237" stroke="#dddcdf" stroke-width="1"/><line x1="688.5" y1="221" x2="688.5" y2="237" stroke="#dddcdf" stroke-width="1"/><line x1="693.5" y1="221" x2="693.5" y2="237" stroke="#dddcdf" stroke-width="1"/><line x1="697.5" y1="221" x2="697.5" y2="237" stroke="#dddcdf" stroke-width="1"/><line x1="702.5" y1="221" x2="702.5" y2="237" stroke="#dddcdf" stroke-width="1"/><line x1="707.5" y1="221" x2="707.5" y2="237" stroke="#dddcdf" stroke-width="1"/><line x1="712.5" y1="221" x2="712.5" y2="237" stroke="#dddcdf" stroke-width="1"/><line x1="717.5" y1="221" x2="717.5" y2="237" stroke="#dddcdf" stroke-width="1"/><line x1="721.5" y1="221" x2="721.5" y2="237" stroke="#dddcdf" stroke-width="1"/><line x1="726.5" y1="221" x2="726.5" y2="237" stroke="#dddcdf" stroke-width="1"/><line x1="731.5" y1="221" x2="731.5" y2="237" stroke="#dddcdf" stroke-width="1"/><line x1="736.5" y1="221" x2="736.5" y2="237" stroke="#dddcdf" stroke-width="1"/><line x1="741.5" y1="221" x2="741.5" y2="237" stroke="#dddcdf" stroke-width="1"/><line x1="745.5" y1="221" x2="745.5" y2="237" stroke="#dddcdf" stroke-width="1"/><line x1="750.5" y1="221" x2="750.5" y2="237" stroke="#dddcdf" stroke-width="1"/><line x1="755.5" y1="221" x2="755.5" y2="237" stroke="#dddcdf" stroke-width="1"/><line x1="760.5" y1="221" x2="760.5" y2="237" stroke="#dddcdf" stroke-width="1"/><line x1="765.5" y1="221" x2="765.5" y2="237" stroke="#dddcdf" stroke-width="1"/><line x1="769.5" y1="221" x2="769.5" y2="237" stroke="#dddcdf" stroke-width="1"/><line x1="774.5" y1="221" x2="774.5" y2="237" stroke="#dddcdf" stroke-width="1"/><line x1="779.5" y1="221" x2="779.5" y2="237" stroke="#dddcdf" stroke-width="1"/><line x1="784.5" y1="221" x2="784.5" y2="237" stroke="#dddcdf" stroke-width="1"/><line x1="789.5" y1="221" x2="789.5" y2="237" stroke="#dddcdf" stroke-width="1"/><line x1="793.5" y1="221" x2="793.5" y2="237" stroke="#dddcdf" stroke-width="1"/><line x1="798.5" y1="221" x2="798.5" y2="237" stroke="#dddcdf" stroke-width="1"/><line x1="803.5" y1="221" x2="803.5" y2="237" stroke="#dddcdf" stroke-width="1"/><line x1="808.5" y1="221" x2="808.5" y2="237" stroke="#dddcdf" stroke-width="1"/><line x1="813.5" y1="221" x2="813.5" y2="237" stroke="#dddcdf" stroke-width="1"/><line x1="817.5" y1="221" x2="817.5" y2="237" stroke="#dddcdf" stroke-width="1"/><line x1="822.5" y1="221" x2="822.5" y2="237" stroke="#dddcdf" stroke-width="1"/><line x1="827.5" y1="221" x2="827.5" y2="237" stroke="#dddcdf" stroke-width="1"/><line x1="832.5" y1="221" x2="832.5" y2="237" stroke="#dddcdf" stroke-width="1"/><line x1="837.5" y1="221" x2="837.5" y2="237" stroke="#dddcdf" stroke-width="1"/><line x1="842.5" y1="221" x2="842.5" y2="237" stroke="#dddcdf" stroke-width="1"/><line x1="846.5" y1="221" x2="846.5" y2="237" stroke="#dddcdf" stroke-width="1"/><line x1="851.5" y1="221" x2="851.5" y2="237" stroke="#dddcdf" stroke-width="1"/><line x1="856.5" y1="221" x2="856.5" y2="237" stroke="#dddcdf" stroke-width="1"/><line x1="861.5" y1="221" x2="861.5" y2="237" stroke="#dddcdf" stroke-width="1"/><line x1="866.5" y1="221" x2="866.5" y2="237" stroke="#dddcdf" stroke-width="1"/><line x1="870.5" y1="221" x2="870.5" y2="237" stroke="#dddcdf" stroke-width="1"/><line x1="875.5" y1="221" x2="875.5" y2="237" stroke="#dddcdf" stroke-width="1"/><line x1="880.5" y1="221" x2="880.5" y2="237" stroke="#dddcdf" stroke-width="1"/><line x1="885.5" y1="221" x2="885.5" y2="237" stroke="#dddcdf" stroke-width="1"/><line x1="890.5" y1="221" x2="890.5" y2="237" stroke="#dddcdf" stroke-width="1"/><line x1="894.5" y1="221" x2="894.5" y2="237" stroke="#dddcdf" stroke-width="1"/><line x1="899.5" y1="221" x2="899.5" y2="237" stroke="#dddcdf" stroke-width="1"/><line x1="904.5" y1="221" x2="904.5" y2="237" stroke="#dddcdf" stroke-width="1"/><line x1="909.5" y1="221" x2="909.5" y2="237" stroke="#dddcdf" stroke-width="1"/><line x1="914.5" y1="221" x2="914.5" y2="237" stroke="#dddcdf" stroke-width="1"/><line x1="918.5" y1="221" x2="918.5" y2="237" stroke="#dddcdf" stroke-width="1"/><line x1="923.5" y1="221" x2="923.5" y2="237" stroke="#dddcdf" stroke-width="1"/><line x1="928.5" y1="221" x2="928.5" y2="237" stroke="#dddcdf" stroke-width="1"/><line x1="933.5" y1="221" x2="933.5" y2="237" stroke="#dddcdf" stroke-width="1"/><line x1="938.5" y1="221" x2="938.5" y2="237" stroke="#dddcdf" stroke-width="1"/><line x1="942.5" y1="221" x2="942.5" y2="237" stroke="#dddcdf" stroke-width="1"/><line x1="947.5" y1="221" x2="947.5" y2="237" stroke="#dddcdf" stroke-width="1"/><line x1="952.5" y1="221" x2="952.5" y2="237" stroke="#dddcdf" stroke-width="1"/><line x1="957.5" y1="221" x2="957.5" y2="237" stroke="#dddcdf" stroke-width="1"/><line x1="962.5" y1="221" x2="962.5" y2="237" stroke="#dddcdf" stroke-width="1"/><line x1="966.5" y1="221" x2="966.5" y2="237" stroke="#dddcdf" stroke-width="1"/><line x1="971.5" y1="221" x2="971.5" y2="237" stroke="#dddcdf" stroke-width="1"/><line x1="976.5" y1="221" x2="976.5" y2="237" stroke="#dddcdf" stroke-width="1"/><line x1="981.5" y1="221" x2="981.5" y2="237" stroke="#dddcdf" stroke-width="1"/><line x1="986.5" y1="221" x2="986.5" y2="237" stroke="#dddcdf" stroke-width="1"/><line x1="990.5" y1="221" x2="990.5" y2="237" stroke="#dddcdf" stroke-width="1"/><line x1="995.5" y1="221" x2="995.5" y2="237" stroke="#dddcdf" stroke-width="1"/><line x1="1000.5" y1="221" x2="1000.5" y2="237" stroke="#dddcdf" stroke-width="1"/><line x1="1005.5" y1="221" x2="1005.5" y2="237" stroke="#dddcdf" stroke-width="1"/><line x1="1010.5" y1="221" x2="1010.5" y2="237" stroke="#dddcdf" stroke-width="1"/><line x1="1014.5" y1="221" x2="1014.5" y2="237" stroke="#dddcdf" stroke-width="1"/><line x1="1019.5" y1="221" x2="1019.5" y2="237" stroke="#dddcdf" stroke-width="1"/><line x1="1024.5" y1="221" x2="1024.5" y2="237" stroke="#dddcdf" stroke-width="1"/><line x1="1029.5" y1="221" x2="1029.5" y2="237" stroke="#dddcdf" stroke-width="1"/><line x1="1034.5" y1="221" x2="1034.5" y2="237" stroke="#dddcdf" stroke-width="1"/><line x1="1039.5" y1="221" x2="1039.5" y2="237" stroke="#dddcdf" stroke-width="1"/><line x1="1043.5" y1="221" x2="1043.5" y2="237" stroke="#dddcdf" stroke-width="1"/><line x1="1048.5" y1="221" x2="1048.5" y2="237" stroke="#dddcdf" stroke-width="1"/><line x1="1053.5" y1="221" x2="1053.5" y2="237" stroke="#dddcdf" stroke-width="1"/><line x1="1058.5" y1="221" x2="1058.5" y2="237" stroke="#dddcdf" stroke-width="1"/><line x1="1063.5" y1="221" x2="1063.5" y2="237" stroke="#dddcdf" stroke-width="1"/><line x1="1067.5" y1="221" x2="1067.5" y2="237" stroke="#dddcdf" stroke-width="1"/><line x1="1072.5" y1="221" x2="1072.5" y2="237" stroke="#dddcdf" stroke-width="1"/><line x1="1077.5" y1="221" x2="1077.5" y2="237" stroke="#dddcdf" stroke-width="1"/><line x1="1082.5" y1="221" x2="1082.5" y2="237" stroke="#dddcdf" stroke-width="1"/><line x1="1087.5" y1="221" x2="1087.5" y2="237" stroke="#dddcdf" stroke-width="1"/><line x1="1091.5" y1="221" x2="1091.5" y2="237" stroke="#dddcdf" stroke-width="1"/><line x1="1096.5" y1="221" x2="1096.5" y2="237" stroke="#dddcdf" stroke-width="1"/><line x1="1101.5" y1="221" x2="1101.5" y2="237" stroke="#dddcdf" stroke-width="1"/><line x1="1106.5" y1="221" x2="1106.5" y2="237" stroke="#dddcdf" stroke-width="1"/><line x1="1111.5" y1="221" x2="1111.5" y2="237" stroke="#dddcdf" stroke-width="1"/><line x1="1115.5" y1="221" x2="1115.5" y2="237" stroke="#dddcdf" stroke-width="1"/><line x1="1120.5" y1="221" x2="1120.5" y2="237" stroke="#dddcdf" stroke-width="1"/><line x1="1125.5" y1="221" x2="1125.5" y2="237" stroke="#dddcdf" stroke-width="1"/><line x1="1130.5" y1="221" x2="1130.5" y2="237" stroke="#dddcdf" stroke-width="1"/><line x1="1135.5" y1="221" x2="1135.5" y2="237" stroke="#dddcdf" stroke-width="1"/><line x1="1139.5" y1="221" x2="1139.5" y2="237" stroke="#dddcdf" stroke-width="1"/><line x1="1144.5" y1="221" x2="1144.5" y2="237" stroke="#dddcdf" stroke-width="1"/><line x1="1149.5" y1="221" x2="1149.5" y2="237" stroke="#dddcdf" stroke-width="1"/><line x1="1154.5" y1="221" x2="1154.5" y2="237" stroke="#dddcdf" stroke-width="1"/><line x1="1159.5" y1="221" x2="1159.5" y2="237" stroke="#dddcdf" stroke-width="1"/><line x1="1163.5" y1="221" x2="1163.5" y2="237" stroke="#dddcdf" stroke-width="1"/><line x1="1168.5" y1="221" x2="1168.5" y2="237" stroke="#dddcdf" stroke-width="1"/><line x1="1173.5" y1="221" x2="1173.5" y2="237" stroke="#dddcdf" stroke-width="1"/><line x1="1178.5" y1="221" x2="1178.5" y2="237" stroke="#dddcdf" stroke-width="1"/><line x1="1183.5" y1="221" x2="1183.5" y2="237" stroke="#dddcdf" stroke-width="1"/><line x1="1187.5" y1="221" x2="1187.5" y2="237" stroke="#dddcdf" stroke-width="1"/><line x1="1192.5" y1="221" x2="1192.5" y2="237" stroke="#dddcdf" stroke-width="1"/><line x1="1197.5" y1="221" x2="1197.5" y2="237" stroke="#dddcdf" stroke-width="1"/><line x1="1202.5" y1="221" x2="1202.5" y2="237" stroke="#dddcdf" stroke-width="1"/><line x1="1207.5" y1="221" x2="1207.5" y2="237" stroke="#dddcdf" stroke-width="1"/><line x1="1211.5" y1="221" x2="1211.5" y2="237" stroke="#dddcdf" stroke-width="1"/><line x1="1216.5" y1="221" x2="1216.5" y2="237" stroke="#dddcdf" stroke-width="1"/><line x1="1221.5" y1="221" x2="1221.5" y2="237" stroke="#dddcdf" stroke-width="1"/><line x1="1226.5" y1="221" x2="1226.5" y2="237" stroke="#dddcdf" stroke-width="1"/><line x1="1231.5" y1="221" x2="1231.5" y2="237" stroke="#dddcdf" stroke-width="1"/><line x1="1236.5" y1="221" x2="1236.5" y2="237" stroke="#dddcdf" stroke-width="1"/><line x1="1240.5" y1="221" x2="1240.5" y2="237" stroke="#dddcdf" stroke-width="1"/><line x1="1245.5" y1="221" x2="1245.5" y2="237" stroke="#dddcdf" stroke-width="1"/><line x1="1250.5" y1="221" x2="1250.5" y2="237" stroke="#dddcdf" stroke-width="1"/><line x1="1255.5" y1="221" x2="1255.5" y2="237" stroke="#dddcdf" stroke-width="1"/><line x1="1260.5" y1="221" x2="1260.5" y2="237" stroke="#dddcdf" stroke-width="1"/><line x1="1264.5" y1="221" x2="1264.5" y2="237" stroke="#dddcdf" stroke-width="1"/><line x1="1269.5" y1="221" x2="1269.5" y2="237" stroke="#dddcdf" stroke-width="1"/><line x1="1274.5" y1="221" x2="1274.5" y2="237" stroke="#dddcdf" stroke-width="1"/><line x1="1279.5" y1="221" x2="1279.5" y2="237" stroke="#dddcdf" stroke-width="1"/><line x1="1284.5" y1="221" x2="1284.5" y2="237" stroke="#dddcdf" stroke-width="1"/><line x1="1288.5" y1="221" x2="1288.5" y2="237" stroke="#dddcdf" stroke-width="1"/><line x1="1293.5" y1="221" x2="1293.5" y2="237" stroke="#dddcdf" stroke-width="1"/><line x1="1298.5" y1="221" x2="1298.5" y2="237" stroke="#dddcdf" stroke-width="1"/><line x1="1303.5" y1="221" x2="1303.5" y2="237" stroke="#dddcdf" stroke-width="1"/><line x1="1308.5" y1="221" x2="1308.5" y2="237" stroke="#dddcdf" stroke-width="1"/><line x1="1312.5" y1="221" x2="1312.5" y2="237" stroke="#dddcdf" stroke-width="1"/><line x1="1317.5" y1="221" x2="1317.5" y2="237" stroke="#dddcdf" stroke-width="1"/><line x1="1322.5" y1="221" x2="1322.5" y2="237" stroke="#dddcdf" stroke-width="1"/><line x1="1327.5" y1="221" x2="1327.5" y2="237" stroke="#dddcdf" stroke-width="1"/><line x1="1332.5" y1="221" x2="1332.5" y2="237" stroke="#dddcdf" stroke-width="1"/><line x1="1336.5" y1="221" x2="1336.5" y2="237" stroke="#dddcdf" stroke-width="1"/><line x1="1341.5" y1="221" x2="1341.5" y2="237" stroke="#dddcdf" stroke-width="1"/><line x1="1346.5" y1="221" x2="1346.5" y2="237" stroke="#dddcdf" stroke-width="1"/><line x1="1351.5" y1="221" x2="1351.5" y2="237" stroke="#dddcdf" stroke-width="1"/><line x1="1356.5" y1="221" x2="1356.5" y2="237" stroke="#dddcdf" stroke-width="1"/><line x1="1360.5" y1="221" x2="1360.5" y2="237" stroke="#dddcdf" stroke-width="1"/><line x1="1365.5" y1="221" x2="1365.5" y2="237" stroke="#dddcdf" stroke-width="1"/><line x1="1370.5" y1="221" x2="1370.5" y2="237" stroke="#dddcdf" stroke-width="1"/><line x1="1375.5" y1="221" x2="1375.5" y2="237" stroke="#dddcdf" stroke-width="1"/><line x1="1380.5" y1="221" x2="1380.5" y2="237" stroke="#dddcdf" stroke-width="1"/><line x1="1384.5" y1="221" x2="1384.5" y2="237" stroke="#dddcdf" stroke-width="1"/><line x1="1389.5" y1="221" x2="1389.5" y2="237" stroke="#dddcdf" stroke-width="1"/><line x1="1394.5" y1="221" x2="1394.5" y2="237" stroke="#dddcdf" stroke-width="1"/><line x1="1399.5" y1="221" x2="1399.5" y2="237" stroke="#dddcdf" stroke-width="1"/><line x1="1404.5" y1="221" x2="1404.5" y2="237" stroke="#dddcdf" stroke-width="1"/><line x1="1408.5" y1="221" x2="1408.5" y2="237" stroke="#dddcdf" stroke-width="1"/><line x1="1413.5" y1="221" x2="1413.5" y2="237" stroke="#dddcdf" stroke-width="1"/><line x1="1418.5" y1="221" x2="1418.5" y2="237" stroke="#dddcdf" stroke-width="1"/><line x1="1423.5" y1="221" x2="1423.5" y2="237" stroke="#dddcdf" stroke-width="1"/><line x1="1428.5" y1="221" x2="1428.5" y2="237" stroke="#dddcdf" stroke-width="1"/><line x1="1433.5" y1="221" x2="1433.5" y2="237" stroke="#dddcdf" stroke-width="1"/><line x1="1437.5" y1="221" x2="1437.5" y2="237" stroke="#dddcdf" stroke-width="1"/><line x1="1442.5" y1="221" x2="1442.5" y2="237" stroke="#dddcdf" stroke-width="1"/><line x1="1447.5" y1="221" x2="1447.5" y2="237" stroke="#dddcdf" stroke-width="1"/><line x1="1452.5" y1="221" x2="1452.5" y2="237" stroke="#dddcdf" stroke-width="1"/><line x1="1457.5" y1="221" x2="1457.5" y2="237" stroke="#dddcdf" stroke-width="1"/><line x1="1461.5" y1="221" x2="1461.5" y2="237" stroke="#dddcdf" stroke-width="1"/><line x1="1466.5" y1="221" x2="1466.5" y2="237" stroke="#dddcdf" stroke-width="1"/><line x1="1471.5" y1="221" x2="1471.5" y2="237" stroke="#dddcdf" stroke-width="1"/><line x1="1476.5" y1="221" x2="1476.5" y2="237" stroke="#dddcdf" stroke-width="1"/><line x1="1481.5" y1="221" x2="1481.5" y2="237" stroke="#dddcdf" stroke-width="1"/><line x1="1485.5" y1="221" x2="1485.5" y2="237" stroke="#dddcdf" stroke-width="1"/><line x1="1490.5" y1="221" x2="1490.5" y2="237" stroke="#dddcdf" stroke-width="1"/><line x1="1495.5" y1="221" x2="1495.5" y2="237" stroke="#dddcdf" stroke-width="1"/><line x1="1500.5" y1="221" x2="1500.5" y2="237" stroke="#dddcdf" stroke-width="1"/><line x1="1505.5" y1="221" x2="1505.5" y2="237" stroke="#dddcdf" stroke-width="1"/><line x1="1509.5" y1="221" x2="1509.5" y2="237" stroke="#dddcdf" stroke-width="1"/><line x1="1514.5" y1="221" x2="1514.5" y2="237" stroke="#dddcdf" stroke-width="1"/><line x1="1519.5" y1="221" x2="1519.5" y2="237" stroke="#dddcdf" stroke-width="1"/><line x1="1524.5" y1="221" x2="1524.5" y2="237" stroke="#dddcdf" stroke-width="1"/><line x1="1529.5" y1="221" x2="1529.5" y2="237" stroke="#dddcdf" stroke-width="1"/><line x1="1533.5" y1="221" x2="1533.5" y2="237" stroke="#dddcdf" stroke-width="1"/><line x1="1538.5" y1="221" x2="1538.5" y2="237" stroke="#dddcdf" stroke-width="1"/><line x1="1543.5" y1="221" x2="1543.5" y2="237" stroke="#dddcdf" stroke-width="1"/><line x1="1548.5" y1="221" x2="1548.5" y2="237" stroke="#dddcdf" stroke-width="1"/><line x1="1553.5" y1="221" x2="1553.5" y2="237" stroke="#dddcdf" stroke-width="1"/><line x1="1557.5" y1="221" x2="1557.5" y2="237" stroke="#dddcdf" stroke-width="1"/><line x1="1562.5" y1="221" x2="1562.5" y2="237" stroke="#dddcdf" stroke-width="1"/><line x1="1567.5" y1="221" x2="1567.5" y2="237" stroke="#dddcdf" stroke-width="1"/><line x1="1572.5" y1="221" x2="1572.5" y2="237" stroke="#dddcdf" stroke-width="1"/><line x1="1577.5" y1="221" x2="1577.5" y2="237" stroke="#dddcdf" stroke-width="1"/><line x1="1581.5" y1="221" x2="1581.5" y2="237" stroke="#dddcdf" stroke-width="1"/><line x1="1586.5" y1="221" x2="1586.5" y2="237" stroke="#dddcdf" stroke-width="1"/><line x1="1591.5" y1="221" x2="1591.5" y2="237" stroke="#dddcdf" stroke-width="1"/><line x1="1596.5" y1="221" x2="1596.5" y2="237" stroke="#dddcdf" stroke-width="1"/><line x1="1601.5" y1="221" x2="1601.5" y2="237" stroke="#dddcdf" stroke-width="1"/><line x1="1605.5" y1="221" x2="1605.5" y2="237" stroke="#dddcdf" stroke-width="1"/><line x1="1610.5" y1="221" x2="1610.5" y2="237" stroke="#dddcdf" stroke-width="1"/><line x1="1615.5" y1="221" x2="1615.5" y2="237" stroke="#dddcdf" stroke-width="1"/><line x1="1620.5" y1="221" x2="1620.5" y2="237" stroke="#dddcdf" stroke-width="1"/><line x1="1625.5" y1="221" x2="1625.5" y2="237" stroke="#dddcdf" stroke-width="1"/><line x1="1630.5" y1="221" x2="1630.5" y2="237" stroke="#dddcdf" stroke-width="1"/><line x1="1634.5" y1="221" x2="1634.5" y2="237" stroke="#dddcdf" stroke-width="1"/><line x1="1639.5" y1="221" x2="1639.5" y2="237" stroke="#dddcdf" stroke-width="1"/><line x1="1644.5" y1="221" x2="1644.5" y2="237" stroke="#dddcdf" stroke-width="1"/><line x1="1649.5" y1="221" x2="1649.5" y2="237" stroke="#dddcdf" stroke-width="1"/><line x1="1654.5" y1="221" x2="1654.5" y2="237" stroke="#dddcdf" stroke-width="1"/><line x1="1658.5" y1="221" x2="1658.5" y2="237" stroke="#dddcdf" stroke-width="1"/><line x1="1663.5" y1="221" x2="1663.5" y2="237" stroke="#dddcdf" stroke-width="1"/><line x1="1668.5" y1="221" x2="1668.5" y2="237" stroke="#dddcdf" stroke-width="1"/><line x1="1673.5" y1="221" x2="1673.5" y2="237" stroke="#dddcdf" stroke-width="1"/><line x1="1678.5" y1="221" x2="1678.5" y2="237" stroke="#dddcdf" stroke-width="1"/><line x1="1682.5" y1="221" x2="1682.5" y2="237" stroke="#dddcdf" stroke-width="1"/><line x1="1687.5" y1="221" x2="1687.5" y2="237" stroke="#dddcdf" stroke-width="1"/><line x1="1692.5" y1="221" x2="1692.5" y2="237" stroke="#dddcdf" stroke-width="1"/><line x1="1697.5" y1="221" x2="1697.5" y2="237" stroke="#dddcdf" stroke-width="1"/><line x1="1702.5" y1="221" x2="1702.5" y2="237" stroke="#dddcdf" stroke-width="1"/><line x1="1706.5" y1="221" x2="1706.5" y2="237" stroke="#dddcdf" stroke-width="1"/><line x1="1711.5" y1="221" x2="1711.5" y2="237" stroke="#dddcdf" stroke-width="1"/><line x1="1716.5" y1="221" x2="1716.5" y2="237" stroke="#dddcdf" stroke-width="1"/><line x1="1721.5" y1="221" x2="1721.5" y2="237" stroke="#dddcdf" stroke-width="1"/><line x1="1726.5" y1="221" x2="1726.5" y2="237" stroke="#dddcdf" stroke-width="1"/><line x1="1730.5" y1="221" x2="1730.5" y2="237" stroke="#dddcdf" stroke-width="1"/><line x1="1735.5" y1="221" x2="1735.5" y2="237" stroke="#dddcdf" stroke-width="1"/><line x1="1740.5" y1="221" x2="1740.5" y2="237" stroke="#dddcdf" stroke-width="1"/><line x1="1745.5" y1="221" x2="1745.5" y2="237" stroke="#dddcdf" stroke-width="1"/><line x1="1750.5" y1="221" x2="1750.5" y2="237" stroke="#dddcdf" stroke-width="1"/><line x1="1754.5" y1="221" x2="1754.5" y2="237" stroke="#dddcdf" stroke-width="1"/><line x1="1759.5" y1="221" x2="1759.5" y2="237" stroke="#dddcdf" stroke-width="1"/><line x1="1764.5" y1="221" x2="1764.5" y2="237" stroke="#dddcdf" stroke-width="1"/><line x1="1769.5" y1="221" x2="1769.5" y2="237" stroke="#dddcdf" stroke-width="1"/><line x1="1774.5" y1="221" x2="1774.5" y2="237" stroke="#dddcdf" stroke-width="1"/><line x1="1778.5" y1="221" x2="1778.5" y2="237" stroke="#dddcdf" stroke-width="1"/><line x1="1783.5" y1="221" x2="1783.5" y2="237" stroke="#dddcdf" stroke-width="1"/><line x1="1788.5" y1="221" x2="1788.5" y2="237" stroke="#dddcdf" stroke-width="1"/><line x1="1793.5" y1="221" x2="1793.5" y2="237" stroke="#dddcdf" stroke-width="1"/><line x1="1798.5" y1="221" x2="1798.5" y2="237" stroke="#dddcdf" stroke-width="1"/><line x1="1802.5" y1="221" x2="1802.5" y2="237" stroke="#dddcdf" stroke-width="1"/><line x1="1807.5" y1="221" x2="1807.5" y2="237" stroke="#dddcdf" stroke-width="1"/><line x1="1812.5" y1="221" x2="1812.5" y2="237" stroke="#dddcdf" stroke-width="1"/><line x1="1817.5" y1="221" x2="1817.5" y2="237" stroke="#dddcdf" stroke-width="1"/><line x1="1822.5" y1="221" x2="1822.5" y2="237" stroke="#dddcdf" stroke-width="1"/><line x1="1827.5" y1="221" x2="1827.5" y2="237" stroke="#dddcdf" stroke-width="1"/><line x1="1831.5" y1="221" x2="1831.5" y2="237" stroke="#dddcdf" stroke-width="1"/><line x1="1836.5" y1="221" x2="1836.5" y2="237" stroke="#dddcdf" stroke-width="1"/><line x1="1841.5" y1="221" x2="1841.5" y2="237" stroke="#dddcdf" stroke-width="1"/><line x1="1846.5" y1="221" x2="1846.5" y2="237" stroke="#dddcdf" stroke-width="1"/><line x1="1851.5" y1="221" x2="1851.5" y2="237" stroke="#dddcdf" stroke-width="1"/><line x1="1855.5" y1="221" x2="1855.5" y2="237" stroke="#dddcdf" stroke-width="1"/><line x1="1860.5" y1="221" x2="1860.5" y2="237" stroke="#dddcdf" stroke-width="1"/><line x1="1865.5" y1="221" x2="1865.5" y2="237" stroke="#dddcdf" stroke-width="1"/><line x1="1870.5" y1="221" x2="1870.5" y2="237" stroke="#dddcdf" stroke-width="1"/><line x1="1875.5" y1="221" x2="1875.5" y2="237" stroke="#dddcdf" stroke-width="1"/><line x1="1879.5" y1="221" x2="1879.5" y2="237" stroke="#dddcdf" stroke-width="1"/><line x1="1884.5" y1="221" x2="1884.5" y2="237" stroke="#dddcdf" stroke-width="1"/><line x1="1889.5" y1="221" x2="1889.5" y2="237" stroke="#dddcdf" stroke-width="1"/><line x1="1894.5" y1="221" x2="1894.5" y2="237" stroke="#dddcdf" stroke-width="1"/><line x1="1899.5" y1="221" x2="1899.5" y2="237" stroke="#dddcdf" stroke-width="1"/><g><svg x="649.90" y="219" width="4.21" height="18" overflow="hidden"><text x="0.6" y="14.8" font-size="14" fill="#3a3a4a">N</text></svg><svg x="654.70" y="219" width="4.21" height="18" overflow="hidden"><text x="0.6" y="14.8" font-size="14" fill="#3a3a4a">O</text></svg><svg x="659.51" y="219" width="4.21" height="18" overflow="hidden"><text x="0.6" y="14.8" font-size="14" fill="#3a3a4a">P</text></svg><svg x="664.31" y="219" width="4.21" height="18" overflow="hidden"><text x="0.6" y="14.8" font-size="14" fill="#3a3a4a">Q</text></svg><svg x="669.12" y="219" width="4.21" height="18" overflow="hidden"><text x="0.6" y="14.8" font-size="14" fill="#3a3a4a">R</text></svg><svg x="673.92" y="219" width="4.21" height="18" overflow="hidden"><text x="0.6" y="14.8" font-size="14" fill="#3a3a4a">S</text></svg><svg x="678.73" y="219" width="4.21" height="18" overflow="hidden"><text x="0.6" y="14.8" font-size="14" fill="#3a3a4a">T</text></svg><svg x="683.53" y="219" width="4.21" height="18" overflow="hidden"><text x="0.6" y="14.8" font-size="14" fill="#3a3a4a">U</text></svg><svg x="688.34" y="219" width="4.21" height="18" overflow="hidden"><text x="0.6" y="14.8" font-size="14" fill="#3a3a4a">V</text></svg><svg x="693.14" y="219" width="4.21" height="18" overflow="hidden"><text x="0.6" y="14.8" font-size="14" fill="#3a3a4a">W</text></svg><svg x="697.95" y="219" width="4.21" height="18" overflow="hidden"><text x="0.6" y="14.8" font-size="14" fill="#3a3a4a">X</text></svg><svg x="702.75" y="219" width="4.21" height="18" overflow="hidden"><text x="0.6" y="14.8" font-size="14" fill="#3a3a4a">Y</text></svg><svg x="707.56" y="219" width="4.21" height="18" overflow="hidden"><text x="0.6" y="14.8" font-size="14" fill="#3a3a4a">Z</text></svg><svg x="712.37" y="219" width="4.21" height="18" overflow="hidden"><text x="0.6" y="14.8" font-size="14" fill="#3a3a4a">A</text></svg><svg x="717.17" y="219" width="4.21" height="18" overflow="hidden"><text x="0.6" y="14.8" font-size="14" fill="#3a3a4a">A</text></svg><svg x="721.98" y="219" width="4.21" height="18" overflow="hidden"><text x="0.6" y="14.8" font-size="14" fill="#3a3a4a">A</text></svg><svg x="726.78" y="219" width="4.21" height="18" overflow="hidden"><text x="0.6" y="14.8" font-size="14" fill="#3a3a4a">A</text></svg><svg x="731.58" y="219" width="4.21" height="18" overflow="hidden"><text x="0.6" y="14.8" font-size="14" fill="#3a3a4a">A</text></svg><svg x="736.39" y="219" width="4.21" height="18" overflow="hidden"><text x="0.6" y="14.8" font-size="14" fill="#3a3a4a">A</text></svg><svg x="741.19" y="219" width="4.21" height="18" overflow="hidden"><text x="0.6" y="14.8" font-size="14" fill="#3a3a4a">A</text></svg><svg x="746.00" y="219" width="4.21" height="18" overflow="hidden"><text x="0.6" y="14.8" font-size="14" fill="#3a3a4a">A</text></svg><svg x="750.80" y="219" width="4.21" height="18" overflow="hidden"><text x="0.6" y="14.8" font-size="14" fill="#3a3a4a">A</text></svg><svg x="755.61" y="219" width="4.21" height="18" overflow="hidden"><text x="0.6" y="14.8" font-size="14" fill="#3a3a4a">A</text></svg><svg x="760.41" y="219" width="4.21" height="18" overflow="hidden"><text x="0.6" y="14.8" font-size="14" fill="#3a3a4a">A</text></svg><svg x="765.22" y="219" width="4.21" height="18" overflow="hidden"><text x="0.6" y="14.8" font-size="14" fill="#3a3a4a">A</text></svg><svg x="770.02" y="219" width="4.21" height="18" overflow="hidden"><text x="0.6" y="14.8" font-size="14" fill="#3a3a4a">A</text></svg><svg x="774.83" y="219" width="4.21" height="18" overflow="hidden"><text x="0.6" y="14.8" font-size="14" fill="#3a3a4a">A</text></svg><svg x="779.63" y="219" width="4.21" height="18" overflow="hidden"><text x="0.6" y="14.8" font-size="14" fill="#3a3a4a">A</text></svg><svg x="784.44" y="219" width="4.21" height="18" overflow="hidden"><text x="0.6" y="14.8" font-size="14" fill="#3a3a4a">A</text></svg><svg x="789.25" y="219" width="4.21" height="18" overflow="hidden"><text x="0.6" y="14.8" font-size="14" fill="#3a3a4a">A</text></svg><svg x="794.05" y="219" width="4.21" height="18" overflow="hidden"><text x="0.6" y="14.8" font-size="14" fill="#3a3a4a">A</text></svg><svg x="798.85" y="219" width="4.21" height="18" overflow="hidden"><text x="0.6" y="14.8" font-size="14" fill="#3a3a4a">A</text></svg><svg x="803.66" y="219" width="4.21" height="18" overflow="hidden"><text x="0.6" y="14.8" font-size="14" fill="#3a3a4a">A</text></svg><svg x="808.47" y="219" width="4.21" height="18" overflow="hidden"><text x="0.6" y="14.8" font-size="14" fill="#3a3a4a">A</text></svg><svg x="813.27" y="219" width="4.21" height="18" overflow="hidden"><text x="0.6" y="14.8" font-size="14" fill="#3a3a4a">A</text></svg><svg x="818.07" y="219" width="4.21" height="18" overflow="hidden"><text x="0.6" y="14.8" font-size="14" fill="#3a3a4a">A</text></svg><svg x="822.88" y="219" width="4.21" height="18" overflow="hidden"><text x="0.6" y="14.8" font-size="14" fill="#3a3a4a">A</text></svg><svg x="827.68" y="219" width="4.21" height="18" overflow="hidden"><text x="0.6" y="14.8" font-size="14" fill="#3a3a4a">A</text></svg><svg x="832.49" y="219" width="4.21" height="18" overflow="hidden"><text x="0.6" y="14.8" font-size="14" fill="#3a3a4a">A</text></svg><svg x="837.29" y="219" width="4.21" height="18" overflow="hidden"><text x="0.6" y="14.8" font-size="14" fill="#3a3a4a">B</text></svg><svg x="842.10" y="219" width="4.21" height="18" overflow="hidden"><text x="0.6" y="14.8" font-size="14" fill="#3a3a4a">B</text></svg><svg x="846.90" y="219" width="4.21" height="18" overflow="hidden"><text x="0.6" y="14.8" font-size="14" fill="#3a3a4a">B</text></svg><svg x="851.71" y="219" width="4.21" height="18" overflow="hidden"><text x="0.6" y="14.8" font-size="14" fill="#3a3a4a">B</text></svg><svg x="856.51" y="219" width="4.21" height="18" overflow="hidden"><text x="0.6" y="14.8" font-size="14" fill="#3a3a4a">B</text></svg><svg x="861.32" y="219" width="4.21" height="18" overflow="hidden"><text x="0.6" y="14.8" font-size="14" fill="#3a3a4a">B</text></svg><svg x="866.12" y="219" width="4.21" height="18" overflow="hidden"><text x="0.6" y="14.8" font-size="14" fill="#3a3a4a">B</text></svg><svg x="870.93" y="219" width="4.21" height="18" overflow="hidden"><text x="0.6" y="14.8" font-size="14" fill="#3a3a4a">B</text></svg><svg x="875.74" y="219" width="4.21" height="18" overflow="hidden"><text x="0.6" y="14.8" font-size="14" fill="#3a3a4a">B</text></svg><svg x="880.54" y="219" width="4.21" height="18" overflow="hidden"><text x="0.6" y="14.8" font-size="14" fill="#3a3a4a">B</text></svg><svg x="885.34" y="219" width="4.21" height="18" overflow="hidden"><text x="0.6" y="14.8" font-size="14" fill="#3a3a4a">B</text></svg><svg x="890.15" y="219" width="4.21" height="18" overflow="hidden"><text x="0.6" y="14.8" font-size="14" fill="#3a3a4a">B</text></svg><svg x="894.95" y="219" width="4.21" height="18" overflow="hidden"><text x="0.6" y="14.8" font-size="14" fill="#3a3a4a">B</text></svg><svg x="899.76" y="219" width="4.21" height="18" overflow="hidden"><text x="0.6" y="14.8" font-size="14" fill="#3a3a4a">B</text></svg><svg x="904.56" y="219" width="4.21" height="18" overflow="hidden"><text x="0.6" y="14.8" font-size="14" fill="#3a3a4a">B</text></svg><svg x="909.37" y="219" width="4.21" height="18" overflow="hidden"><text x="0.6" y="14.8" font-size="14" fill="#3a3a4a">B</text></svg><svg x="914.17" y="219" width="4.21" height="18" overflow="hidden"><text x="0.6" y="14.8" font-size="14" fill="#3a3a4a">B</text></svg><svg x="918.98" y="219" width="4.21" height="18" overflow="hidden"><text x="0.6" y="14.8" font-size="14" fill="#3a3a4a">B</text></svg><svg x="923.78" y="219" width="4.21" height="18" overflow="hidden"><text x="0.6" y="14.8" font-size="14" fill="#3a3a4a">B</text></svg><svg x="928.59" y="219" width="4.21" height="18" overflow="hidden"><text x="0.6" y="14.8" font-size="14" fill="#3a3a4a">B</text></svg><svg x="933.39" y="219" width="4.21" height="18" overflow="hidden"><text x="0.6" y="14.8" font-size="14" fill="#3a3a4a">B</text></svg><svg x="938.20" y="219" width="4.21" height="18" overflow="hidden"><text x="0.6" y="14.8" font-size="14" fill="#3a3a4a">B</text></svg><svg x="943.00" y="219" width="4.21" height="18" overflow="hidden"><text x="0.6" y="14.8" font-size="14" fill="#3a3a4a">B</text></svg><svg x="947.81" y="219" width="4.21" height="18" overflow="hidden"><text x="0.6" y="14.8" font-size="14" fill="#3a3a4a">B</text></svg><svg x="952.61" y="219" width="4.21" height="18" overflow="hidden"><text x="0.6" y="14.8" font-size="14" fill="#3a3a4a">B</text></svg><svg x="957.42" y="219" width="4.21" height="18" overflow="hidden"><text x="0.6" y="14.8" font-size="14" fill="#3a3a4a">B</text></svg><svg x="962.23" y="219" width="4.21" height="18" overflow="hidden"><text x="0.6" y="14.8" font-size="14" fill="#3a3a4a">C</text></svg><svg x="967.03" y="219" width="4.21" height="18" overflow="hidden"><text x="0.6" y="14.8" font-size="14" fill="#3a3a4a">C</text></svg><svg x="971.83" y="219" width="4.21" height="18" overflow="hidden"><text x="0.6" y="14.8" font-size="14" fill="#3a3a4a">C</text></svg><svg x="976.64" y="219" width="4.21" height="18" overflow="hidden"><text x="0.6" y="14.8" font-size="14" fill="#3a3a4a">C</text></svg><svg x="981.44" y="219" width="4.21" height="18" overflow="hidden"><text x="0.6" y="14.8" font-size="14" fill="#3a3a4a">C</text></svg><svg x="986.25" y="219" width="4.21" height="18" overflow="hidden"><text x="0.6" y="14.8" font-size="14" fill="#3a3a4a">C</text></svg><svg x="991.05" y="219" width="4.21" height="18" overflow="hidden"><text x="0.6" y="14.8" font-size="14" fill="#3a3a4a">C</text></svg><svg x="995.86" y="219" width="4.21" height="18" overflow="hidden"><text x="0.6" y="14.8" font-size="14" fill="#3a3a4a">C</text></svg><svg x="1000.66" y="219" width="4.21" height="18" overflow="hidden"><text x="0.6" y="14.8" font-size="14" fill="#3a3a4a">C</text></svg><svg x="1005.47" y="219" width="4.21" height="18" overflow="hidden"><text x="0.6" y="14.8" font-size="14" fill="#3a3a4a">C</text></svg><svg x="1010.27" y="219" width="4.21" height="18" overflow="hidden"><text x="0.6" y="14.8" font-size="14" fill="#3a3a4a">C</text></svg><svg x="1015.08" y="219" width="4.21" height="18" overflow="hidden"><text x="0.6" y="14.8" font-size="14" fill="#3a3a4a">C</text></svg><svg x="1019.88" y="219" width="4.21" height="18" overflow="hidden"><text x="0.6" y="14.8" font-size="14" fill="#3a3a4a">C</text></svg><svg x="1024.69" y="219" width="4.21" height="18" overflow="hidden"><text x="0.6" y="14.8" font-size="14" fill="#3a3a4a">C</text></svg><svg x="1029.49" y="219" width="4.21" height="18" overflow="hidden"><text x="0.6" y="14.8" font-size="14" fill="#3a3a4a">C</text></svg><svg x="1034.30" y="219" width="4.21" height="18" overflow="hidden"><text x="0.6" y="14.8" font-size="14" fill="#3a3a4a">C</text></svg><svg x="1039.10" y="219" width="4.21" height="18" overflow="hidden"><text x="0.6" y="14.8" font-size="14" fill="#3a3a4a">C</text></svg><svg x="1043.91" y="219" width="4.21" height="18" overflow="hidden"><text x="0.6" y="14.8" font-size="14" fill="#3a3a4a">C</text></svg><svg x="1048.71" y="219" width="4.21" height="18" overflow="hidden"><text x="0.6" y="14.8" font-size="14" fill="#3a3a4a">C</text></svg><svg x="1053.52" y="219" width="4.21" height="18" overflow="hidden"><text x="0.6" y="14.8" font-size="14" fill="#3a3a4a">C</text></svg><svg x="1058.32" y="219" width="4.21" height="18" overflow="hidden"><text x="0.6" y="14.8" font-size="14" fill="#3a3a4a">C</text></svg><svg x="1063.13" y="219" width="4.21" height="18" overflow="hidden"><text x="0.6" y="14.8" font-size="14" fill="#3a3a4a">C</text></svg><svg x="1067.93" y="219" width="4.21" height="18" overflow="hidden"><text x="0.6" y="14.8" font-size="14" fill="#3a3a4a">C</text></svg><svg x="1072.74" y="219" width="4.21" height="18" overflow="hidden"><text x="0.6" y="14.8" font-size="14" fill="#3a3a4a">C</text></svg><svg x="1077.54" y="219" width="4.21" height="18" overflow="hidden"><text x="0.6" y="14.8" font-size="14" fill="#3a3a4a">C</text></svg><svg x="1082.35" y="219" width="4.21" height="18" overflow="hidden"><text x="0.6" y="14.8" font-size="14" fill="#3a3a4a">C</text></svg><svg x="1087.15" y="219" width="4.21" height="18" overflow="hidden"><text x="0.6" y="14.8" font-size="14" fill="#3a3a4a">D</text></svg><svg x="1091.96" y="219" width="4.21" height="18" overflow="hidden"><text x="0.6" y="14.8" font-size="14" fill="#3a3a4a">D</text></svg><svg x="1096.76" y="219" width="4.21" height="18" overflow="hidden"><text x="0.6" y="14.8" font-size="14" fill="#3a3a4a">D</text></svg><svg x="1101.57" y="219" width="4.21" height="18" overflow="hidden"><text x="0.6" y="14.8" font-size="14" fill="#3a3a4a">D</text></svg><svg x="1106.37" y="219" width="4.21" height="18" overflow="hidden"><text x="0.6" y="14.8" font-size="14" fill="#3a3a4a">D</text></svg><svg x="1111.18" y="219" width="4.21" height="18" overflow="hidden"><text x="0.6" y="14.8" font-size="14" fill="#3a3a4a">D</text></svg><svg x="1115.98" y="219" width="4.21" height="18" overflow="hidden"><text x="0.6" y="14.8" font-size="14" fill="#3a3a4a">D</text></svg><svg x="1120.79" y="219" width="4.21" height="18" overflow="hidden"><text x="0.6" y="14.8" font-size="14" fill="#3a3a4a">D</text></svg><svg x="1125.59" y="219" width="4.21" height="18" overflow="hidden"><text x="0.6" y="14.8" font-size="14" fill="#3a3a4a">D</text></svg><svg x="1130.40" y="219" width="4.21" height="18" overflow="hidden"><text x="0.6" y="14.8" font-size="14" fill="#3a3a4a">D</text></svg><svg x="1135.20" y="219" width="4.21" height="18" overflow="hidden"><text x="0.6" y="14.8" font-size="14" fill="#3a3a4a">D</text></svg><svg x="1140.01" y="219" width="4.21" height="18" overflow="hidden"><text x="0.6" y="14.8" font-size="14" fill="#3a3a4a">D</text></svg><svg x="1144.81" y="219" width="4.21" height="18" overflow="hidden"><text x="0.6" y="14.8" font-size="14" fill="#3a3a4a">D</text></svg><svg x="1149.62" y="219" width="4.21" height="18" overflow="hidden"><text x="0.6" y="14.8" font-size="14" fill="#3a3a4a">D</text></svg><svg x="1154.42" y="219" width="4.21" height="18" overflow="hidden"><text x="0.6" y="14.8" font-size="14" fill="#3a3a4a">D</text></svg><svg x="1159.23" y="219" width="4.21" height="18" overflow="hidden"><text x="0.6" y="14.8" font-size="14" fill="#3a3a4a">D</text></svg><svg x="1164.03" y="219" width="4.21" height="18" overflow="hidden"><text x="0.6" y="14.8" font-size="14" fill="#3a3a4a">D</text></svg><svg x="1168.84" y="219" width="4.21" height="18" overflow="hidden"><text x="0.6" y="14.8" font-size="14" fill="#3a3a4a">D</text></svg><svg x="1173.64" y="219" width="4.21" height="18" overflow="hidden"><text x="0.6" y="14.8" font-size="14" fill="#3a3a4a">D</text></svg><svg x="1178.45" y="219" width="4.21" height="18" overflow="hidden"><text x="0.6" y="14.8" font-size="14" fill="#3a3a4a">D</text></svg><svg x="1183.25" y="219" width="4.21" height="18" overflow="hidden"><text x="0.6" y="14.8" font-size="14" fill="#3a3a4a">D</text></svg><svg x="1188.06" y="219" width="4.21" height="18" overflow="hidden"><text x="0.6" y="14.8" font-size="14" fill="#3a3a4a">D</text></svg><svg x="1192.86" y="219" width="4.21" height="18" overflow="hidden"><text x="0.6" y="14.8" font-size="14" fill="#3a3a4a">D</text></svg><svg x="1197.67" y="219" width="4.21" height="18" overflow="hidden"><text x="0.6" y="14.8" font-size="14" fill="#3a3a4a">D</text></svg><svg x="1202.47" y="219" width="4.21" height="18" overflow="hidden"><text x="0.6" y="14.8" font-size="14" fill="#3a3a4a">D</text></svg><svg x="1207.28" y="219" width="4.21" height="18" overflow="hidden"><text x="0.6" y="14.8" font-size="14" fill="#3a3a4a">D</text></svg><svg x="1212.08" y="219" width="4.21" height="18" overflow="hidden"><text x="0.6" y="14.8" font-size="14" fill="#3a3a4a">E</text></svg><svg x="1216.89" y="219" width="4.21" height="18" overflow="hidden"><text x="0.6" y="14.8" font-size="14" fill="#3a3a4a">E</text></svg><svg x="1221.69" y="219" width="4.21" height="18" overflow="hidden"><text x="0.6" y="14.8" font-size="14" fill="#3a3a4a">E</text></svg><svg x="1226.50" y="219" width="4.21" height="18" overflow="hidden"><text x="0.6" y="14.8" font-size="14" fill="#3a3a4a">E</text></svg><svg x="1231.30" y="219" width="4.21" height="18" overflow="hidden"><text x="0.6" y="14.8" font-size="14" fill="#3a3a4a">E</text></svg><svg x="1236.11" y="219" width="4.21" height="18" overflow="hidden"><text x="0.6" y="14.8" font-size="14" fill="#3a3a4a">E</text></svg><svg x="1240.91" y="219" width="4.21" height="18" overflow="hidden"><text x="0.6" y="14.8" font-size="14" fill="#3a3a4a">E</text></svg><svg x="1245.72" y="219" width="4.21" height="18" overflow="hidden"><text x="0.6" y="14.8" font-size="14" fill="#3a3a4a">E</text></svg><svg x="1250.52" y="219" width="4.21" height="18" overflow="hidden"><text x="0.6" y="14.8" font-size="14" fill="#3a3a4a">E</text></svg><svg x="1255.33" y="219" width="4.21" height="18" overflow="hidden"><text x="0.6" y="14.8" font-size="14" fill="#3a3a4a">E</text></svg><svg x="1260.13" y="219" width="4.21" height="18" overflow="hidden"><text x="0.6" y="14.8" font-size="14" fill="#3a3a4a">E</text></svg><svg x="1264.94" y="219" width="4.21" height="18" overflow="hidden"><text x="0.6" y="14.8" font-size="14" fill="#3a3a4a">E</text></svg><svg x="1269.74" y="219" width="4.21" height="18" overflow="hidden"><text x="0.6" y="14.8" font-size="14" fill="#3a3a4a">E</text></svg><svg x="1274.55" y="219" width="4.21" height="18" overflow="hidden"><text x="0.6" y="14.8" font-size="14" fill="#3a3a4a">E</text></svg><svg x="1279.35" y="219" width="4.21" height="18" overflow="hidden"><text x="0.6" y="14.8" font-size="14" fill="#3a3a4a">E</text></svg><svg x="1284.16" y="219" width="4.21" height="18" overflow="hidden"><text x="0.6" y="14.8" font-size="14" fill="#3a3a4a">E</text></svg><svg x="1288.96" y="219" width="4.21" height="18" overflow="hidden"><text x="0.6" y="14.8" font-size="14" fill="#3a3a4a">E</text></svg><svg x="1293.77" y="219" width="4.21" height="18" overflow="hidden"><text x="0.6" y="14.8" font-size="14" fill="#3a3a4a">E</text></svg><svg x="1298.57" y="219" width="4.21" height="18" overflow="hidden"><text x="0.6" y="14.8" font-size="14" fill="#3a3a4a">E</text></svg><svg x="1303.38" y="219" width="4.21" height="18" overflow="hidden"><text x="0.6" y="14.8" font-size="14" fill="#3a3a4a">E</text></svg><svg x="1308.18" y="219" width="4.21" height="18" overflow="hidden"><text x="0.6" y="14.8" font-size="14" fill="#3a3a4a">E</text></svg><svg x="1312.99" y="219" width="4.21" height="18" overflow="hidden"><text x="0.6" y="14.8" font-size="14" fill="#3a3a4a">E</text></svg><svg x="1317.79" y="219" width="4.21" height="18" overflow="hidden"><text x="0.6" y="14.8" font-size="14" fill="#3a3a4a">E</text></svg><svg x="1322.60" y="219" width="4.21" height="18" overflow="hidden"><text x="0.6" y="14.8" font-size="14" fill="#3a3a4a">E</text></svg><svg x="1327.40" y="219" width="4.21" height="18" overflow="hidden"><text x="0.6" y="14.8" font-size="14" fill="#3a3a4a">E</text></svg><svg x="1332.21" y="219" width="4.21" height="18" overflow="hidden"><text x="0.6" y="14.8" font-size="14" fill="#3a3a4a">E</text></svg><svg x="1337.01" y="219" width="4.21" height="18" overflow="hidden"><text x="0.6" y="14.8" font-size="14" fill="#3a3a4a">F</text></svg><svg x="1341.82" y="219" width="4.21" height="18" overflow="hidden"><text x="0.6" y="14.8" font-size="14" fill="#3a3a4a">F</text></svg><svg x="1346.62" y="219" width="4.21" height="18" overflow="hidden"><text x="0.6" y="14.8" font-size="14" fill="#3a3a4a">F</text></svg><svg x="1351.43" y="219" width="4.21" height="18" overflow="hidden"><text x="0.6" y="14.8" font-size="14" fill="#3a3a4a">F</text></svg><svg x="1356.23" y="219" width="4.21" height="18" overflow="hidden"><text x="0.6" y="14.8" font-size="14" fill="#3a3a4a">F</text></svg><svg x="1361.04" y="219" width="4.21" height="18" overflow="hidden"><text x="0.6" y="14.8" font-size="14" fill="#3a3a4a">F</text></svg><svg x="1365.84" y="219" width="4.21" height="18" overflow="hidden"><text x="0.6" y="14.8" font-size="14" fill="#3a3a4a">F</text></svg><svg x="1370.65" y="219" width="4.21" height="18" overflow="hidden"><text x="0.6" y="14.8" font-size="14" fill="#3a3a4a">F</text></svg><svg x="1375.45" y="219" width="4.21" height="18" overflow="hidden"><text x="0.6" y="14.8" font-size="14" fill="#3a3a4a">F</text></svg><svg x="1380.26" y="219" width="4.21" height="18" overflow="hidden"><text x="0.6" y="14.8" font-size="14" fill="#3a3a4a">F</text></svg><svg x="1385.06" y="219" width="4.21" height="18" overflow="hidden"><text x="0.6" y="14.8" font-size="14" fill="#3a3a4a">F</text></svg><svg x="1389.87" y="219" width="4.21" height="18" overflow="hidden"><text x="0.6" y="14.8" font-size="14" fill="#3a3a4a">F</text></svg><svg x="1394.67" y="219" width="4.21" height="18" overflow="hidden"><text x="0.6" y="14.8" font-size="14" fill="#3a3a4a">F</text></svg><svg x="1399.48" y="219" width="4.21" height="18" overflow="hidden"><text x="0.6" y="14.8" font-size="14" fill="#3a3a4a">F</text></svg><svg x="1404.28" y="219" width="4.21" height="18" overflow="hidden"><text x="0.6" y="14.8" font-size="14" fill="#3a3a4a">F</text></svg><svg x="1409.09" y="219" width="4.21" height="18" overflow="hidden"><text x="0.6" y="14.8" font-size="14" fill="#3a3a4a">F</text></svg><svg x="1413.89" y="219" width="4.21" height="18" overflow="hidden"><text x="0.6" y="14.8" font-size="14" fill="#3a3a4a">F</text></svg><svg x="1418.70" y="219" width="4.21" height="18" overflow="hidden"><text x="0.6" y="14.8" font-size="14" fill="#3a3a4a">F</text></svg><svg x="1423.50" y="219" width="4.21" height="18" overflow="hidden"><text x="0.6" y="14.8" font-size="14" fill="#3a3a4a">F</text></svg><svg x="1428.31" y="219" width="4.21" height="18" overflow="hidden"><text x="0.6" y="14.8" font-size="14" fill="#3a3a4a">F</text></svg><svg x="1433.11" y="219" width="4.21" height="18" overflow="hidden"><text x="0.6" y="14.8" font-size="14" fill="#3a3a4a">F</text></svg><svg x="1437.92" y="219" width="4.21" height="18" overflow="hidden"><text x="0.6" y="14.8" font-size="14" fill="#3a3a4a">F</text></svg><svg x="1442.72" y="219" width="4.21" height="18" overflow="hidden"><text x="0.6" y="14.8" font-size="14" fill="#3a3a4a">F</text></svg><svg x="1447.53" y="219" width="4.21" height="18" overflow="hidden"><text x="0.6" y="14.8" font-size="14" fill="#3a3a4a">F</text></svg><svg x="1452.33" y="219" width="4.21" height="18" overflow="hidden"><text x="0.6" y="14.8" font-size="14" fill="#3a3a4a">F</text></svg><svg x="1457.14" y="219" width="4.21" height="18" overflow="hidden"><text x="0.6" y="14.8" font-size="14" fill="#3a3a4a">F</text></svg><svg x="1461.94" y="219" width="4.21" height="18" overflow="hidden"><text x="0.6" y="14.8" font-size="14" fill="#3a3a4a">G</text></svg><svg x="1466.75" y="219" width="4.21" height="18" overflow="hidden"><text x="0.6" y="14.8" font-size="14" fill="#3a3a4a">G</text></svg><svg x="1471.55" y="219" width="4.21" height="18" overflow="hidden"><text x="0.6" y="14.8" font-size="14" fill="#3a3a4a">G</text></svg><svg x="1476.36" y="219" width="4.21" height="18" overflow="hidden"><text x="0.6" y="14.8" font-size="14" fill="#3a3a4a">G</text></svg><svg x="1481.16" y="219" width="4.21" height="18" overflow="hidden"><text x="0.6" y="14.8" font-size="14" fill="#3a3a4a">G</text></svg><svg x="1485.97" y="219" width="4.21" height="18" overflow="hidden"><text x="0.6" y="14.8" font-size="14" fill="#3a3a4a">G</text></svg><svg x="1490.77" y="219" width="4.21" height="18" overflow="hidden"><text x="0.6" y="14.8" font-size="14" fill="#3a3a4a">G</text></svg><svg x="1495.58" y="219" width="4.21" height="18" overflow="hidden"><text x="0.6" y="14.8" font-size="14" fill="#3a3a4a">G</text></svg><svg x="1500.38" y="219" width="4.21" height="18" overflow="hidden"><text x="0.6" y="14.8" font-size="14" fill="#3a3a4a">G</text></svg><svg x="1505.19" y="219" width="4.21" height="18" overflow="hidden"><text x="0.6" y="14.8" font-size="14" fill="#3a3a4a">G</text></svg><svg x="1509.99" y="219" width="4.21" height="18" overflow="hidden"><text x="0.6" y="14.8" font-size="14" fill="#3a3a4a">G</text></svg><svg x="1514.80" y="219" width="4.21" height="18" overflow="hidden"><text x="0.6" y="14.8" font-size="14" fill="#3a3a4a">G</text></svg><svg x="1519.60" y="219" width="4.21" height="18" overflow="hidden"><text x="0.6" y="14.8" font-size="14" fill="#3a3a4a">G</text></svg><svg x="1524.41" y="219" width="4.21" height="18" overflow="hidden"><text x="0.6" y="14.8" font-size="14" fill="#3a3a4a">G</text></svg><svg x="1529.21" y="219" width="4.21" height="18" overflow="hidden"><text x="0.6" y="14.8" font-size="14" fill="#3a3a4a">G</text></svg><svg x="1534.02" y="219" width="4.21" height="18" overflow="hidden"><text x="0.6" y="14.8" font-size="14" fill="#3a3a4a">G</text></svg><svg x="1538.82" y="219" width="4.21" height="18" overflow="hidden"><text x="0.6" y="14.8" font-size="14" fill="#3a3a4a">G</text></svg><svg x="1543.63" y="219" width="4.21" height="18" overflow="hidden"><text x="0.6" y="14.8" font-size="14" fill="#3a3a4a">G</text></svg><svg x="1548.43" y="219" width="4.21" height="18" overflow="hidden"><text x="0.6" y="14.8" font-size="14" fill="#3a3a4a">G</text></svg><svg x="1553.24" y="219" width="4.21" height="18" overflow="hidden"><text x="0.6" y="14.8" font-size="14" fill="#3a3a4a">G</text></svg><svg x="1558.04" y="219" width="4.21" height="18" overflow="hidden"><text x="0.6" y="14.8" font-size="14" fill="#3a3a4a">G</text></svg><svg x="1562.85" y="219" width="4.21" height="18" overflow="hidden"><text x="0.6" y="14.8" font-size="14" fill="#3a3a4a">G</text></svg><svg x="1567.65" y="219" width="4.21" height="18" overflow="hidden"><text x="0.6" y="14.8" font-size="14" fill="#3a3a4a">G</text></svg><svg x="1572.46" y="219" width="4.21" height="18" overflow="hidden"><text x="0.6" y="14.8" font-size="14" fill="#3a3a4a">G</text></svg><svg x="1577.26" y="219" width="4.21" height="18" overflow="hidden"><text x="0.6" y="14.8" font-size="14" fill="#3a3a4a">G</text></svg><svg x="1582.07" y="219" width="4.21" height="18" overflow="hidden"><text x="0.6" y="14.8" font-size="14" fill="#3a3a4a">G</text></svg><svg x="1586.87" y="219" width="4.21" height="18" overflow="hidden"><text x="0.6" y="14.8" font-size="14" fill="#3a3a4a">H</text></svg><svg x="1591.68" y="219" width="4.21" height="18" overflow="hidden"><text x="0.6" y="14.8" font-size="14" fill="#3a3a4a">H</text></svg><svg x="1596.48" y="219" width="4.21" height="18" overflow="hidden"><text x="0.6" y="14.8" font-size="14" fill="#3a3a4a">H</text></svg><svg x="1601.29" y="219" width="4.21" height="18" overflow="hidden"><text x="0.6" y="14.8" font-size="14" fill="#3a3a4a">H</text></svg><svg x="1606.09" y="219" width="4.21" height="18" overflow="hidden"><text x="0.6" y="14.8" font-size="14" fill="#3a3a4a">H</text></svg><svg x="1610.90" y="219" width="4.21" height="18" overflow="hidden"><text x="0.6" y="14.8" font-size="14" fill="#3a3a4a">H</text></svg><svg x="1615.70" y="219" width="4.21" height="18" overflow="hidden"><text x="0.6" y="14.8" font-size="14" fill="#3a3a4a">H</text></svg><svg x="1620.51" y="219" width="4.21" height="18" overflow="hidden"><text x="0.6" y="14.8" font-size="14" fill="#3a3a4a">H</text></svg><svg x="1625.31" y="219" width="4.21" height="18" overflow="hidden"><text x="0.6" y="14.8" font-size="14" fill="#3a3a4a">H</text></svg><svg x="1630.12" y="219" width="4.21" height="18" overflow="hidden"><text x="0.6" y="14.8" font-size="14" fill="#3a3a4a">H</text></svg><svg x="1634.92" y="219" width="4.21" height="18" overflow="hidden"><text x="0.6" y="14.8" font-size="14" fill="#3a3a4a">H</text></svg><svg x="1639.73" y="219" width="4.21" height="18" overflow="hidden"><text x="0.6" y="14.8" font-size="14" fill="#3a3a4a">H</text></svg><svg x="1644.53" y="219" width="4.21" height="18" overflow="hidden"><text x="0.6" y="14.8" font-size="14" fill="#3a3a4a">H</text></svg><svg x="1649.34" y="219" width="4.21" height="18" overflow="hidden"><text x="0.6" y="14.8" font-size="14" fill="#3a3a4a">H</text></svg><svg x="1654.14" y="219" width="4.21" height="18" overflow="hidden"><text x="0.6" y="14.8" font-size="14" fill="#3a3a4a">H</text></svg><svg x="1658.95" y="219" width="4.21" height="18" overflow="hidden"><text x="0.6" y="14.8" font-size="14" fill="#3a3a4a">H</text></svg><svg x="1663.75" y="219" width="4.21" height="18" overflow="hidden"><text x="0.6" y="14.8" font-size="14" fill="#3a3a4a">H</text></svg><svg x="1668.56" y="219" width="4.21" height="18" overflow="hidden"><text x="0.6" y="14.8" font-size="14" fill="#3a3a4a">H</text></svg><svg x="1673.36" y="219" width="4.21" height="18" overflow="hidden"><text x="0.6" y="14.8" font-size="14" fill="#3a3a4a">H</text></svg><svg x="1678.17" y="219" width="4.21" height="18" overflow="hidden"><text x="0.6" y="14.8" font-size="14" fill="#3a3a4a">H</text></svg><svg x="1682.97" y="219" width="4.21" height="18" overflow="hidden"><text x="0.6" y="14.8" font-size="14" fill="#3a3a4a">H</text></svg><svg x="1687.78" y="219" width="4.21" height="18" overflow="hidden"><text x="0.6" y="14.8" font-size="14" fill="#3a3a4a">H</text></svg><svg x="1692.58" y="219" width="4.21" height="18" overflow="hidden"><text x="0.6" y="14.8" font-size="14" fill="#3a3a4a">H</text></svg><svg x="1697.39" y="219" width="4.21" height="18" overflow="hidden"><text x="0.6" y="14.8" font-size="14" fill="#3a3a4a">H</text></svg><svg x="1702.19" y="219" width="4.21" height="18" overflow="hidden"><text x="0.6" y="14.8" font-size="14" fill="#3a3a4a">H</text></svg><svg x="1707.00" y="219" width="4.21" height="18" overflow="hidden"><text x="0.6" y="14.8" font-size="14" fill="#3a3a4a">H</text></svg><text x="1713.8" y="233.8" font-size="14" fill="#3a3a4a" text-anchor="middle" textLength="1.6" lengthAdjust="spacingAndGlyphs">I</text><text x="1718.6" y="233.8" font-size="14" fill="#3a3a4a" text-anchor="middle" textLength="1.6" lengthAdjust="spacingAndGlyphs">I</text><text x="1723.4" y="233.8" font-size="14" fill="#3a3a4a" text-anchor="middle" textLength="1.6" lengthAdjust="spacingAndGlyphs">I</text><text x="1728.2" y="233.8" font-size="14" fill="#3a3a4a" text-anchor="middle" textLength="1.6" lengthAdjust="spacingAndGlyphs">I</text><text x="1733.0" y="233.8" font-size="14" fill="#3a3a4a" text-anchor="middle" textLength="1.6" lengthAdjust="spacingAndGlyphs">I</text><text x="1737.8" y="233.8" font-size="14" fill="#3a3a4a" text-anchor="middle" textLength="1.6" lengthAdjust="spacingAndGlyphs">I</text><text x="1742.6" y="233.8" font-size="14" fill="#3a3a4a" text-anchor="middle" textLength="1.6" lengthAdjust="spacingAndGlyphs">I</text><text x="1747.4" y="233.8" font-size="14" fill="#3a3a4a" text-anchor="middle" textLength="1.6" lengthAdjust="spacingAndGlyphs">I</text><text x="1752.2" y="233.8" font-size="14" fill="#3a3a4a" text-anchor="middle" textLength="1.6" lengthAdjust="spacingAndGlyphs">I</text><text x="1757.0" y="233.8" font-size="14" fill="#3a3a4a" text-anchor="middle" textLength="1.6" lengthAdjust="spacingAndGlyphs">I</text><text x="1761.9" y="233.8" font-size="14" fill="#3a3a4a" text-anchor="middle" textLength="1.6" lengthAdjust="spacingAndGlyphs">I</text><text x="1766.7" y="233.8" font-size="14" fill="#3a3a4a" text-anchor="middle" textLength="1.6" lengthAdjust="spacingAndGlyphs">I</text><text x="1771.5" y="233.8" font-size="14" fill="#3a3a4a" text-anchor="middle" textLength="1.6" lengthAdjust="spacingAndGlyphs">I</text><text x="1776.3" y="233.8" font-size="14" fill="#3a3a4a" text-anchor="middle" textLength="1.6" lengthAdjust="spacingAndGlyphs">I</text><text x="1781.1" y="233.8" font-size="14" fill="#3a3a4a" text-anchor="middle" textLength="1.6" lengthAdjust="spacingAndGlyphs">I</text><text x="1785.9" y="233.8" font-size="14" fill="#3a3a4a" text-anchor="middle" textLength="1.6" lengthAdjust="spacingAndGlyphs">I</text><text x="1790.7" y="233.8" font-size="14" fill="#3a3a4a" text-anchor="middle" textLength="1.6" lengthAdjust="spacingAndGlyphs">I</text><text x="1795.5" y="233.8" font-size="14" fill="#3a3a4a" text-anchor="middle" textLength="1.6" lengthAdjust="spacingAndGlyphs">I</text><text x="1800.3" y="233.8" font-size="14" fill="#3a3a4a" text-anchor="middle" textLength="1.6" lengthAdjust="spacingAndGlyphs">I</text><text x="1805.1" y="233.8" font-size="14" fill="#3a3a4a" text-anchor="middle" textLength="1.6" lengthAdjust="spacingAndGlyphs">I</text><text x="1809.9" y="233.8" font-size="14" fill="#3a3a4a" text-anchor="middle" textLength="1.6" lengthAdjust="spacingAndGlyphs">I</text><text x="1814.7" y="233.8" font-size="14" fill="#3a3a4a" text-anchor="middle" textLength="1.6" lengthAdjust="spacingAndGlyphs">I</text><text x="1819.5" y="233.8" font-size="14" fill="#3a3a4a" text-anchor="middle" textLength="1.6" lengthAdjust="spacingAndGlyphs">I</text><text x="1824.3" y="233.8" font-size="14" fill="#3a3a4a" text-anchor="middle" textLength="1.6" lengthAdjust="spacingAndGlyphs">I</text><text x="1829.1" y="233.8" font-size="14" fill="#3a3a4a" text-anchor="middle" textLength="1.6" lengthAdjust="spacingAndGlyphs">I</text><text x="1833.9" y="233.8" font-size="14" fill="#3a3a4a" text-anchor="middle" textLength="1.6" lengthAdjust="spacingAndGlyphs">I</text><text x="1838.7" y="233.8" font-size="14" fill="#3a3a4a" text-anchor="middle" textLength="3.6" lengthAdjust="spacingAndGlyphs">J</text><text x="1843.5" y="233.8" font-size="14" fill="#3a3a4a" text-anchor="middle" textLength="3.6" lengthAdjust="spacingAndGlyphs">J</text><text x="1848.3" y="233.8" font-size="14" fill="#3a3a4a" text-anchor="middle" textLength="3.6" lengthAdjust="spacingAndGlyphs">J</text><text x="1853.1" y="233.8" font-size="14" fill="#3a3a4a" text-anchor="middle" textLength="3.6" lengthAdjust="spacingAndGlyphs">J</text><text x="1858.0" y="233.8" font-size="14" fill="#3a3a4a" text-anchor="middle" textLength="3.6" lengthAdjust="spacingAndGlyphs">J</text><text x="1862.8" y="233.8" font-size="14" fill="#3a3a4a" text-anchor="middle" textLength="3.6" lengthAdjust="spacingAndGlyphs">J</text><text x="1867.6" y="233.8" font-size="14" fill="#3a3a4a" text-anchor="middle" textLength="3.6" lengthAdjust="spacingAndGlyphs">J</text><text x="1872.4" y="233.8" font-size="14" fill="#3a3a4a" text-anchor="middle" textLength="3.6" lengthAdjust="spacingAndGlyphs">J</text><text x="1877.2" y="233.8" font-size="14" fill="#3a3a4a" text-anchor="middle" textLength="3.6" lengthAdjust="spacingAndGlyphs">J</text><text x="1882.0" y="233.8" font-size="14" fill="#3a3a4a" text-anchor="middle" textLength="3.6" lengthAdjust="spacingAndGlyphs">J</text><text x="1886.8" y="233.8" font-size="14" fill="#3a3a4a" text-anchor="middle" textLength="3.6" lengthAdjust="spacingAndGlyphs">J</text><text x="1891.6" y="233.8" font-size="14" fill="#3a3a4a" text-anchor="middle" textLength="3.6" lengthAdjust="spacingAndGlyphs">J</text><text x="1896.4" y="233.8" font-size="14" fill="#3a3a4a" text-anchor="middle" textLength="3.6" lengthAdjust="spacingAndGlyphs">J</text><text x="1901.2" y="233.8" font-size="14" fill="#3a3a4a" text-anchor="middle" textLength="3.6" lengthAdjust="spacingAndGlyphs">J</text></g><line x1="26.5" y1="237" x2="26.5" y2="988" stroke="#d6d5d8" stroke-width="1"/><line x1="3" y1="240.7" x2="27" y2="240.7" stroke="#dad9dc" stroke-width="1"/><line x1="3" y1="287.5" x2="27" y2="287.5" stroke="#dad9dc" stroke-width="1"/><text x="13.3" y="284.5" font-size="14" fill="#555" text-anchor="middle" textLength="6.6" lengthAdjust="spacingAndGlyphs">2</text><line x1="3" y1="291.2" x2="27" y2="291.2" stroke="#dad9dc" stroke-width="1"/><line x1="3" y1="355.8" x2="27" y2="355.8" stroke="#dad9dc" stroke-width="1"/><text x="13.3" y="351.4" font-size="14" fill="#555" text-anchor="middle" textLength="6.6" lengthAdjust="spacingAndGlyphs">4</text><line x1="3" y1="360.3" x2="27" y2="360.3" stroke="#dad9dc" stroke-width="1"/><line x1="3" y1="364.5" x2="27" y2="364.5" stroke="#dad9dc" stroke-width="1"/><line x1="3" y1="386.3" x2="27" y2="386.3" stroke="#dad9dc" stroke-width="1"/><text x="13.3" y="381.1" font-size="14" fill="#555" text-anchor="middle" textLength="6.6" lengthAdjust="spacingAndGlyphs">7</text><line x1="3" y1="395.5" x2="27" y2="395.5" stroke="#dad9dc" stroke-width="1"/><svg x="3" y="386.3" width="24" height="9.2" overflow="hidden"><text x="10.3" y="5.2" font-size="14" fill="#555" text-anchor="middle" textLength="6.6" lengthAdjust="spacingAndGlyphs">8</text></svg><line x1="3" y1="404.1" x2="27" y2="404.1" stroke="#dad9dc" stroke-width="1"/><svg x="3" y="395.5" width="24" height="8.6" overflow="hidden"><text x="10.3" y="4.2" font-size="14" fill="#555" text-anchor="middle" textLength="6.6" lengthAdjust="spacingAndGlyphs">9</text></svg><line x1="3" y1="407.1" x2="27" y2="407.1" stroke="#dad9dc" stroke-width="1"/><line x1="3" y1="431.5" x2="27" y2="431.5" stroke="#dad9dc" stroke-width="1"/><text x="14.3" y="425.9" font-size="14" fill="#555" text-anchor="middle" textLength="13.2" lengthAdjust="spacingAndGlyphs">11</text><line x1="3" y1="433.5" x2="27" y2="433.5" stroke="#dad9dc" stroke-width="1"/><line x1="3" y1="454" x2="27" y2="454" stroke="#dad9dc" stroke-width="1"/><text x="14.3" y="448.4" font-size="14" fill="#555" text-anchor="middle" textLength="13.2" lengthAdjust="spacingAndGlyphs">13</text><line x1="3" y1="477" x2="27" y2="477" stroke="#dad9dc" stroke-width="1"/><text x="14.3" y="471.4" font-size="14" fill="#555" text-anchor="middle" textLength="13.2" lengthAdjust="spacingAndGlyphs">14</text><line x1="3" y1="499.5" x2="27" y2="499.5" stroke="#dad9dc" stroke-width="1"/><text x="14.3" y="493.9" font-size="14" fill="#555" text-anchor="middle" textLength="13.2" lengthAdjust="spacingAndGlyphs">15</text><line x1="3" y1="523.5" x2="27" y2="523.5" stroke="#dad9dc" stroke-width="1"/><text x="14.3" y="517.9" font-size="14" fill="#555" text-anchor="middle" textLength="13.2" lengthAdjust="spacingAndGlyphs">16</text><line x1="3" y1="547.5" x2="27" y2="547.5" stroke="#dad9dc" stroke-width="1"/><text x="14.3" y="541.9" font-size="14" fill="#555" text-anchor="middle" textLength="13.2" lengthAdjust="spacingAndGlyphs">17</text><line x1="3" y1="571.5" x2="27" y2="571.5" stroke="#dad9dc" stroke-width="1"/><text x="14.3" y="565.9" font-size="14" fill="#555" text-anchor="middle" textLength="13.2" lengthAdjust="spacingAndGlyphs">18</text><line x1="3" y1="595.5" x2="27" y2="595.5" stroke="#dad9dc" stroke-width="1"/><text x="14.3" y="589.9" font-size="14" fill="#555" text-anchor="middle" textLength="13.2" lengthAdjust="spacingAndGlyphs">19</text><line x1="3" y1="619.5" x2="27" y2="619.5" stroke="#dad9dc" stroke-width="1"/><text x="14.3" y="613.9" font-size="14" fill="#555" text-anchor="middle" textLength="13.2" lengthAdjust="spacingAndGlyphs">20</text><line x1="3" y1="643.5" x2="27" y2="643.5" stroke="#dad9dc" stroke-width="1"/><text x="14.3" y="637.9" font-size="14" fill="#555" text-anchor="middle" textLength="13.2" lengthAdjust="spacingAndGlyphs">21</text><line x1="3" y1="667.5" x2="27" y2="667.5" stroke="#dad9dc" stroke-width="1"/><text x="14.3" y="661.9" font-size="14" fill="#555" text-anchor="middle" textLength="13.2" lengthAdjust="spacingAndGlyphs">22</text><line x1="3" y1="691.5" x2="27" y2="691.5" stroke="#dad9dc" stroke-width="1"/><text x="14.3" y="685.9" font-size="14" fill="#555" text-anchor="middle" textLength="13.2" lengthAdjust="spacingAndGlyphs">23</text><line x1="3" y1="715.5" x2="27" y2="715.5" stroke="#dad9dc" stroke-width="1"/><text x="14.3" y="709.9" font-size="14" fill="#555" text-anchor="middle" textLength="13.2" lengthAdjust="spacingAndGlyphs">24</text><line x1="3" y1="739.5" x2="27" y2="739.5" stroke="#dad9dc" stroke-width="1"/><text x="14.3" y="733.9" font-size="14" fill="#555" text-anchor="middle" textLength="13.2" lengthAdjust="spacingAndGlyphs">25</text><line x1="3" y1="763.5" x2="27" y2="763.5" stroke="#dad9dc" stroke-width="1"/><text x="14.3" y="757.9" font-size="14" fill="#555" text-anchor="middle" textLength="13.2" lengthAdjust="spacingAndGlyphs">26</text><line x1="3" y1="787.5" x2="27" y2="787.5" stroke="#dad9dc" stroke-width="1"/><text x="14.3" y="781.9" font-size="14" fill="#555" text-anchor="middle" textLength="13.2" lengthAdjust="spacingAndGlyphs">27</text><line x1="3" y1="811.5" x2="27" y2="811.5" stroke="#dad9dc" stroke-width="1"/><text x="14.3" y="805.9" font-size="14" fill="#555" text-anchor="middle" textLength="13.2" lengthAdjust="spacingAndGlyphs">28</text><rect x="3.00" y="811.50" width="24.00" height="24.00" fill="#d5d4d7"/><rect x="25.00" y="811.50" width="2.00" height="24.00" fill="#217346"/><line x1="3" y1="835.5" x2="27" y2="835.5" stroke="#dad9dc" stroke-width="1"/><text x="14.5" y="829.9" font-size="14" fill="#217346" font-weight="bold" text-anchor="middle" textLength="13.5" lengthAdjust="spacingAndGlyphs">29</text><line x1="3" y1="859.5" x2="27" y2="859.5" stroke="#dad9dc" stroke-width="1"/><text x="14.3" y="853.9" font-size="14" fill="#555" text-anchor="middle" textLength="13.2" lengthAdjust="spacingAndGlyphs">30</text><line x1="3" y1="883.5" x2="27" y2="883.5" stroke="#dad9dc" stroke-width="1"/><text x="14.3" y="877.9" font-size="14" fill="#555" text-anchor="middle" textLength="13.2" lengthAdjust="spacingAndGlyphs">31</text><line x1="3" y1="906.5" x2="27" y2="906.5" stroke="#dad9dc" stroke-width="1"/><text x="14.3" y="900.9" font-size="14" fill="#555" text-anchor="middle" textLength="13.2" lengthAdjust="spacingAndGlyphs">32</text><line x1="3" y1="929.5" x2="27" y2="929.5" stroke="#dad9dc" stroke-width="1"/><text x="14.3" y="923.9" font-size="14" fill="#555" text-anchor="middle" textLength="13.2" lengthAdjust="spacingAndGlyphs">33</text><line x1="3" y1="952.5" x2="27" y2="952.5" stroke="#dad9dc" stroke-width="1"/><text x="14.3" y="946.9" font-size="14" fill="#555" text-anchor="middle" textLength="13.2" lengthAdjust="spacingAndGlyphs">34</text><line x1="3" y1="975.5" x2="27" y2="975.5" stroke="#dad9dc" stroke-width="1"/><text x="14.3" y="969.9" font-size="14" fill="#555" text-anchor="middle" textLength="13.2" lengthAdjust="spacingAndGlyphs">35</text><line x1="3" y1="998.5" x2="27" y2="998.5" stroke="#dad9dc" stroke-width="1"/><svg x="3" y="975.5" width="24" height="23.0" overflow="hidden"><text x="11.3" y="17.4" font-size="14" fill="#555" text-anchor="middle" textLength="13.2" lengthAdjust="spacingAndGlyphs">36</text></svg><text x="32.8" y="278.5" font-size="35" fill="#94d908" textLength="117.0" lengthAdjust="spacingAndGlyphs" stroke="#f3f1f4" stroke-width="0.45">Projekt:</text><text x="35.0" y="340.5" font-size="44" fill="#94d908" font-weight="bold" textLength="429.4" lengthAdjust="spacingAndGlyphs" stroke="#f3f1f4" stroke-width="0.3">Musterprojekt Nr.815</text><text x="30.3" y="381.1" font-size="14.5" fill="#111" font-weight="bold" textLength="177.3" lengthAdjust="spacingAndGlyphs">Projektleiter: Hans Muster</text><text x="300.0" y="381.0" font-size="14.5" fill="#111" font-weight="bold" textLength="118.7" lengthAdjust="spacingAndGlyphs">Projektstart [PS] :</text><text x="425.9" y="381.0" font-size="14.5" fill="#94d908" textLength="54.5" lengthAdjust="spacingAndGlyphs">25.01.14</text><path d="M475 305.5 H645.5 V242" fill="none" stroke="#8c8c8c" stroke-width="2"/><text x="482.3" y="268.5" font-size="16" fill="#111" font-weight="bold" textLength="155.2" lengthAdjust="spacingAndGlyphs">Leere Zeile einfügen</text><text x="531.8" y="291.6" font-size="16" fill="#111" font-weight="bold" textLength="55.9" lengthAdjust="spacingAndGlyphs">(ctrl+e)</text><path d="M534 355 H645.5 V310" fill="none" stroke="#8c8c8c" stroke-width="2"/><text x="566.5" y="329.0" font-size="12.5" fill="#111" font-weight="bold" textLength="45.3" lengthAdjust="spacingAndGlyphs">Formeln</text><text x="542.5" y="345.0" font-size="12.5" fill="#222" textLength="93.5" lengthAdjust="spacingAndGlyphs">Wiederherstellen</text><path d="M534.4 404.8 H645.5 V360.4" fill="none" stroke="#8c8c8c" stroke-width="2"/><text x="557.9" y="378.7" font-size="12.5" fill="#111" font-weight="bold" textLength="63.5" lengthAdjust="spacingAndGlyphs">Projektplan</text><text x="568.8" y="394.0" font-size="12.5" fill="#222" textLength="41.1" lengthAdjust="spacingAndGlyphs">löschen</text><rect x="27.50" y="407.00" width="1873.50" height="92.00" fill="#9edb08"/><text x="30.6" y="423.2" font-size="12.5" fill="#ffffff" font-weight="bold" textLength="514.6" lengthAdjust="spacingAndGlyphs">© Copyright by MeineVorlagen – www.MeineVorlagen.com - Alle Rechte vorbehalten</text><text x="1442.0" y="423.2" font-size="12.5" fill="#ffffff" font-weight="bold" textLength="458.5" lengthAdjust="spacingAndGlyphs">© Copyright by MeineVorlagen – www.MeineVorlagen.com - Alle Rechte vo</text><text x="39.2" y="469.7" font-size="12.5" fill="#ffffff" font-weight="bold" textLength="17.3" lengthAdjust="spacingAndGlyphs">Nr.</text><text x="72.5" y="469.7" font-size="12.5" fill="#ffffff" font-weight="bold" textLength="50.4" lengthAdjust="spacingAndGlyphs">Aufgabe</text><text x="304.7" y="469.7" font-size="12.5" fill="#ffffff" font-weight="bold" textLength="24.2" lengthAdjust="spacingAndGlyphs">Wer</text><text x="368.5" y="469.7" font-size="12.5" fill="#ffffff" font-weight="bold" textLength="28.3" lengthAdjust="spacingAndGlyphs">Start</text><text x="435.0" y="469.7" font-size="12.5" fill="#ffffff" font-weight="bold" textLength="35.4" lengthAdjust="spacingAndGlyphs">Dauer</text><text x="503.2" y="469.7" font-size="12.5" fill="#ffffff" font-weight="bold" textLength="29.5" lengthAdjust="spacingAndGlyphs">Ende</text><text x="557.0" y="469.7" font-size="12.5" fill="#ffffff" font-weight="bold" textLength="37.3" lengthAdjust="spacingAndGlyphs">Status</text><text x="624.0" y="448.0" font-size="14" fill="#ffffff" font-weight="bold" textLength="22.1" lengthAdjust="spacingAndGlyphs">KW</text><rect x="53.30" y="482.20" width="15.00" height="15.00" fill="#f4f3f6" stroke="#c9c9c9" stroke-width="1"/><path d="M57.8 488.2h6l-3.0 3.5z" fill="#555"/><rect x="273.50" y="482.20" width="15.00" height="15.00" fill="#f4f3f6" stroke="#c9c9c9" stroke-width="1"/><path d="M278.0 488.2h6l-3.0 3.5z" fill="#555"/><rect x="327.60" y="482.20" width="15.00" height="15.00" fill="#f4f3f6" stroke="#c9c9c9" stroke-width="1"/><path d="M332.1 488.2h6l-3.0 3.5z" fill="#555"/><rect x="406.20" y="482.20" width="15.00" height="15.00" fill="#f4f3f6" stroke="#c9c9c9" stroke-width="1"/><path d="M410.7 488.2h6l-3.0 3.5z" fill="#555"/><rect x="467.90" y="482.20" width="15.00" height="15.00" fill="#f4f3f6" stroke="#c9c9c9" stroke-width="1"/><path d="M472.4 488.2h6l-3.0 3.5z" fill="#555"/><rect x="535.80" y="482.20" width="15.00" height="15.00" fill="#f4f3f6" stroke="#c9c9c9" stroke-width="1"/><path d="M540.3 488.2h6l-3.0 3.5z" fill="#555"/><rect x="581.30" y="482.20" width="15.00" height="15.00" fill="#f4f3f6" stroke="#c9c9c9" stroke-width="1"/><path d="M585.8 488.2h6l-3.0 3.5z" fill="#555"/><rect x="633.80" y="482.20" width="15.00" height="15.00" fill="#f4f3f6" stroke="#c9c9c9" stroke-width="1"/><path d="M638.3 488.2h6l-3.0 3.5z" fill="#555"/><line x1="27" y1="499.5" x2="1901" y2="499.5" stroke="#b9b8bb" stroke-width="1"/><rect x="673.32" y="432.30" width="9.61" height="67.00" fill="#eae9ec"/><rect x="706.96" y="432.30" width="9.61" height="67.00" fill="#eae9ec"/><rect x="740.59" y="432.30" width="9.61" height="67.00" fill="#eae9ec"/><rect x="774.23" y="432.30" width="9.61" height="67.00" fill="#eae9ec"/><rect x="807.86" y="432.30" width="9.61" height="67.00" fill="#eae9ec"/><rect x="841.50" y="432.30" width="9.61" height="67.00" fill="#eae9ec"/><rect x="875.13" y="432.30" width="9.61" height="67.00" fill="#eae9ec"/><rect x="908.77" y="432.30" width="9.61" height="67.00" fill="#eae9ec"/><rect x="942.40" y="432.30" width="9.61" height="67.00" fill="#eae9ec"/><rect x="976.04" y="432.30" width="9.61" height="67.00" fill="#eae9ec"/><rect x="1009.67" y="432.30" width="9.61" height="67.00" fill="#eae9ec"/><rect x="1043.31" y="432.30" width="9.61" height="67.00" fill="#eae9ec"/><rect x="1076.94" y="432.30" width="9.61" height="67.00" fill="#eae9ec"/><rect x="1110.58" y="432.30" width="9.61" height="67.00" fill="#eae9ec"/><rect x="1144.21" y="432.30" width="9.61" height="67.00" fill="#eae9ec"/><rect x="1177.85" y="432.30" width="9.61" height="67.00" fill="#eae9ec"/><rect x="1211.48" y="432.30" width="9.61" height="67.00" fill="#eae9ec"/><rect x="1245.12" y="432.30" width="9.61" height="67.00" fill="#eae9ec"/><rect x="1278.75" y="432.30" width="9.61" height="67.00" fill="#eae9ec"/><rect x="1312.39" y="432.30" width="9.61" height="67.00" fill="#eae9ec"/><rect x="1346.02" y="432.30" width="9.61" height="67.00" fill="#eae9ec"/><rect x="1379.66" y="432.30" width="9.61" height="67.00" fill="#eae9ec"/><rect x="1413.29" y="432.30" width="9.61" height="67.00" fill="#eae9ec"/><rect x="1446.93" y="432.30" width="9.61" height="67.00" fill="#eae9ec"/><rect x="1480.57" y="432.30" width="9.61" height="67.00" fill="#eae9ec"/><rect x="1514.20" y="432.30" width="9.61" height="67.00" fill="#eae9ec"/><rect x="1547.84" y="432.30" width="9.61" height="67.00" fill="#eae9ec"/><rect x="1581.47" y="432.30" width="9.61" height="67.00" fill="#eae9ec"/><rect x="1615.11" y="432.30" width="9.61" height="67.00" fill="#eae9ec"/><rect x="1648.74" y="432.30" width="9.61" height="67.00" fill="#eae9ec"/><rect x="1682.38" y="432.30" width="9.61" height="67.00" fill="#eae9ec"/><rect x="1716.01" y="432.30" width="9.61" height="67.00" fill="#eae9ec"/><rect x="1749.64" y="432.30" width="9.61" height="67.00" fill="#eae9ec"/><rect x="1783.28" y="432.30" width="9.61" height="67.00" fill="#eae9ec"/><rect x="1816.91" y="432.30" width="9.61" height="67.00" fill="#eae9ec"/><rect x="1850.55" y="432.30" width="9.61" height="67.00" fill="#eae9ec"/><rect x="1884.18" y="432.30" width="9.61" height="67.00" fill="#eae9ec"/><text x="662.0" y="446.6" font-size="9.6" fill="#ffffff" font-weight="bold" text-anchor="middle" textLength="4.6" lengthAdjust="spacingAndGlyphs">4</text><text transform="translate(664.9,489.3) rotate(-90)" font-size="13.6" fill="#ffffff" font-weight="bold" textLength="26.7" lengthAdjust="spacingAndGlyphs">20.01.</text><text x="695.6" y="446.6" font-size="9.6" fill="#ffffff" font-weight="bold" text-anchor="middle" textLength="4.6" lengthAdjust="spacingAndGlyphs">5</text><text transform="translate(698.5,489.3) rotate(-90)" font-size="13.6" fill="#ffffff" font-weight="bold" textLength="26.7" lengthAdjust="spacingAndGlyphs">27.01.</text><text x="729.3" y="446.6" font-size="9.6" fill="#ffffff" font-weight="bold" text-anchor="middle" textLength="4.6" lengthAdjust="spacingAndGlyphs">6</text><text transform="translate(732.2,489.3) rotate(-90)" font-size="13.6" fill="#ffffff" font-weight="bold" textLength="26.7" lengthAdjust="spacingAndGlyphs">03.02.</text><text x="762.9" y="446.6" font-size="9.6" fill="#ffffff" font-weight="bold" text-anchor="middle" textLength="4.6" lengthAdjust="spacingAndGlyphs">7</text><text transform="translate(765.8,489.3) rotate(-90)" font-size="13.6" fill="#ffffff" font-weight="bold" textLength="26.7" lengthAdjust="spacingAndGlyphs">10.02.</text><text x="796.5" y="446.6" font-size="9.6" fill="#ffffff" font-weight="bold" text-anchor="middle" textLength="4.6" lengthAdjust="spacingAndGlyphs">8</text><text transform="translate(799.4,489.3) rotate(-90)" font-size="13.6" fill="#ffffff" font-weight="bold" textLength="26.7" lengthAdjust="spacingAndGlyphs">17.02.</text><text x="830.2" y="446.6" font-size="9.6" fill="#ffffff" font-weight="bold" text-anchor="middle" textLength="4.6" lengthAdjust="spacingAndGlyphs">9</text><text transform="translate(833.1,489.3) rotate(-90)" font-size="13.6" fill="#ffffff" font-weight="bold" textLength="26.7" lengthAdjust="spacingAndGlyphs">24.02.</text><text x="863.8" y="446.6" font-size="9.6" fill="#ffffff" font-weight="bold" text-anchor="middle" textLength="9.0" lengthAdjust="spacingAndGlyphs">10</text><text transform="translate(866.7,489.3) rotate(-90)" font-size="13.6" fill="#ffffff" font-weight="bold" textLength="26.7" lengthAdjust="spacingAndGlyphs">03.03.</text><text x="897.4" y="446.6" font-size="9.6" fill="#ffffff" font-weight="bold" text-anchor="middle" textLength="9.0" lengthAdjust="spacingAndGlyphs">11</text><text transform="translate(900.3,489.3) rotate(-90)" font-size="13.6" fill="#ffffff" font-weight="bold" textLength="26.7" lengthAdjust="spacingAndGlyphs">10.03.</text><text x="931.1" y="446.6" font-size="9.6" fill="#ffffff" font-weight="bold" text-anchor="middle" textLength="9.0" lengthAdjust="spacingAndGlyphs">12</text><text transform="translate(934.0,489.3) rotate(-90)" font-size="13.6" fill="#ffffff" font-weight="bold" textLength="26.7" lengthAdjust="spacingAndGlyphs">17.03.</text><text x="964.7" y="446.6" font-size="9.6" fill="#ffffff" font-weight="bold" text-anchor="middle" textLength="9.0" lengthAdjust="spacingAndGlyphs">13</text><text transform="translate(967.6,489.3) rotate(-90)" font-size="13.6" fill="#ffffff" font-weight="bold" textLength="26.7" lengthAdjust="spacingAndGlyphs">24.03.</text><text x="998.3" y="446.6" font-size="9.6" fill="#ffffff" font-weight="bold" text-anchor="middle" textLength="9.0" lengthAdjust="spacingAndGlyphs">14</text><text transform="translate(1001.2,489.3) rotate(-90)" font-size="13.6" fill="#ffffff" font-weight="bold" textLength="26.7" lengthAdjust="spacingAndGlyphs">31.03.</text><text x="1032.0" y="446.6" font-size="9.6" fill="#ffffff" font-weight="bold" text-anchor="middle" textLength="9.0" lengthAdjust="spacingAndGlyphs">15</text><text transform="translate(1034.9,489.3) rotate(-90)" font-size="13.6" fill="#ffffff" font-weight="bold" textLength="26.7" lengthAdjust="spacingAndGlyphs">07.04.</text><text x="1065.6" y="446.6" font-size="9.6" fill="#ffffff" font-weight="bold" text-anchor="middle" textLength="9.0" lengthAdjust="spacingAndGlyphs">16</text><text transform="translate(1068.5,489.3) rotate(-90)" font-size="13.6" fill="#ffffff" font-weight="bold" textLength="26.7" lengthAdjust="spacingAndGlyphs">14.04.</text><text x="1099.2" y="446.6" font-size="9.6" fill="#ffffff" font-weight="bold" text-anchor="middle" textLength="9.0" lengthAdjust="spacingAndGlyphs">17</text><text transform="translate(1102.1,489.3) rotate(-90)" font-size="13.6" fill="#ffffff" font-weight="bold" textLength="26.7" lengthAdjust="spacingAndGlyphs">21.04.</text><text x="1132.9" y="446.6" font-size="9.6" fill="#ffffff" font-weight="bold" text-anchor="middle" textLength="9.0" lengthAdjust="spacingAndGlyphs">18</text><text transform="translate(1135.8,489.3) rotate(-90)" font-size="13.6" fill="#ffffff" font-weight="bold" textLength="26.7" lengthAdjust="spacingAndGlyphs">28.04.</text><text x="1166.5" y="446.6" font-size="9.6" fill="#ffffff" font-weight="bold" text-anchor="middle" textLength="9.0" lengthAdjust="spacingAndGlyphs">19</text><text transform="translate(1169.4,489.3) rotate(-90)" font-size="13.6" fill="#ffffff" font-weight="bold" textLength="26.7" lengthAdjust="spacingAndGlyphs">05.05.</text><text x="1200.1" y="446.6" font-size="9.6" fill="#ffffff" font-weight="bold" text-anchor="middle" textLength="9.0" lengthAdjust="spacingAndGlyphs">20</text><text transform="translate(1203.0,489.3) rotate(-90)" font-size="13.6" fill="#ffffff" font-weight="bold" textLength="26.7" lengthAdjust="spacingAndGlyphs">12.05.</text><text x="1233.8" y="446.6" font-size="9.6" fill="#ffffff" font-weight="bold" text-anchor="middle" textLength="9.0" lengthAdjust="spacingAndGlyphs">21</text><text transform="translate(1236.7,489.3) rotate(-90)" font-size="13.6" fill="#ffffff" font-weight="bold" textLength="26.7" lengthAdjust="spacingAndGlyphs">19.05.</text><text x="1267.4" y="446.6" font-size="9.6" fill="#ffffff" font-weight="bold" text-anchor="middle" textLength="9.0" lengthAdjust="spacingAndGlyphs">22</text><text transform="translate(1270.3,489.3) rotate(-90)" font-size="13.6" fill="#ffffff" font-weight="bold" textLength="26.7" lengthAdjust="spacingAndGlyphs">26.05.</text><text x="1301.1" y="446.6" font-size="9.6" fill="#ffffff" font-weight="bold" text-anchor="middle" textLength="9.0" lengthAdjust="spacingAndGlyphs">23</text><text transform="translate(1304.0,489.3) rotate(-90)" font-size="13.6" fill="#ffffff" font-weight="bold" textLength="26.7" lengthAdjust="spacingAndGlyphs">02.06.</text><text x="1334.7" y="446.6" font-size="9.6" fill="#ffffff" font-weight="bold" text-anchor="middle" textLength="9.0" lengthAdjust="spacingAndGlyphs">24</text><text transform="translate(1337.6,489.3) rotate(-90)" font-size="13.6" fill="#ffffff" font-weight="bold" textLength="26.7" lengthAdjust="spacingAndGlyphs">09.06.</text><text x="1368.3" y="446.6" font-size="9.6" fill="#ffffff" font-weight="bold" text-anchor="middle" textLength="9.0" lengthAdjust="spacingAndGlyphs">25</text><text transform="translate(1371.2,489.3) rotate(-90)" font-size="13.6" fill="#ffffff" font-weight="bold" textLength="26.7" lengthAdjust="spacingAndGlyphs">16.06.</text><text x="1402.0" y="446.6" font-size="9.6" fill="#ffffff" font-weight="bold" text-anchor="middle" textLength="9.0" lengthAdjust="spacingAndGlyphs">26</text><text transform="translate(1404.9,489.3) rotate(-90)" font-size="13.6" fill="#ffffff" font-weight="bold" textLength="26.7" lengthAdjust="spacingAndGlyphs">23.06.</text><text x="1435.6" y="446.6" font-size="9.6" fill="#ffffff" font-weight="bold" text-anchor="middle" textLength="9.0" lengthAdjust="spacingAndGlyphs">27</text><text transform="translate(1438.5,489.3) rotate(-90)" font-size="13.6" fill="#ffffff" font-weight="bold" textLength="26.7" lengthAdjust="spacingAndGlyphs">30.06.</text><text x="1469.2" y="446.6" font-size="9.6" fill="#ffffff" font-weight="bold" text-anchor="middle" textLength="9.0" lengthAdjust="spacingAndGlyphs">28</text><text transform="translate(1472.1,489.3) rotate(-90)" font-size="13.6" fill="#ffffff" font-weight="bold" textLength="26.7" lengthAdjust="spacingAndGlyphs">07.07.</text><text x="1502.9" y="446.6" font-size="9.6" fill="#ffffff" font-weight="bold" text-anchor="middle" textLength="9.0" lengthAdjust="spacingAndGlyphs">29</text><text transform="translate(1505.8,489.3) rotate(-90)" font-size="13.6" fill="#ffffff" font-weight="bold" textLength="26.7" lengthAdjust="spacingAndGlyphs">14.07.</text><text x="1536.5" y="446.6" font-size="9.6" fill="#ffffff" font-weight="bold" text-anchor="middle" textLength="9.0" lengthAdjust="spacingAndGlyphs">30</text><text transform="translate(1539.4,489.3) rotate(-90)" font-size="13.6" fill="#ffffff" font-weight="bold" textLength="26.7" lengthAdjust="spacingAndGlyphs">21.07.</text><text x="1570.1" y="446.6" font-size="9.6" fill="#ffffff" font-weight="bold" text-anchor="middle" textLength="9.0" lengthAdjust="spacingAndGlyphs">31</text><text transform="translate(1573.0,489.3) rotate(-90)" font-size="13.6" fill="#ffffff" font-weight="bold" textLength="26.7" lengthAdjust="spacingAndGlyphs">28.07.</text><text x="1603.8" y="446.6" font-size="9.6" fill="#ffffff" font-weight="bold" text-anchor="middle" textLength="9.0" lengthAdjust="spacingAndGlyphs">32</text><text transform="translate(1606.7,489.3) rotate(-90)" font-size="13.6" fill="#ffffff" font-weight="bold" textLength="26.7" lengthAdjust="spacingAndGlyphs">04.08.</text><text x="1637.4" y="446.6" font-size="9.6" fill="#ffffff" font-weight="bold" text-anchor="middle" textLength="9.0" lengthAdjust="spacingAndGlyphs">33</text><text transform="translate(1640.3,489.3) rotate(-90)" font-size="13.6" fill="#ffffff" font-weight="bold" textLength="26.7" lengthAdjust="spacingAndGlyphs">11.08.</text><text x="1671.0" y="446.6" font-size="9.6" fill="#ffffff" font-weight="bold" text-anchor="middle" textLength="9.0" lengthAdjust="spacingAndGlyphs">34</text><text transform="translate(1673.9,489.3) rotate(-90)" font-size="13.6" fill="#ffffff" font-weight="bold" textLength="26.7" lengthAdjust="spacingAndGlyphs">18.08.</text><text x="1704.7" y="446.6" font-size="9.6" fill="#ffffff" font-weight="bold" text-anchor="middle" textLength="9.0" lengthAdjust="spacingAndGlyphs">35</text><text transform="translate(1707.6,489.3) rotate(-90)" font-size="13.6" fill="#ffffff" font-weight="bold" textLength="26.7" lengthAdjust="spacingAndGlyphs">25.08.</text><text x="1738.3" y="446.6" font-size="9.6" fill="#ffffff" font-weight="bold" text-anchor="middle" textLength="9.0" lengthAdjust="spacingAndGlyphs">36</text><text transform="translate(1741.2,489.3) rotate(-90)" font-size="13.6" fill="#ffffff" font-weight="bold" textLength="26.7" lengthAdjust="spacingAndGlyphs">01.09.</text><text x="1771.9" y="446.6" font-size="9.6" fill="#ffffff" font-weight="bold" text-anchor="middle" textLength="9.0" lengthAdjust="spacingAndGlyphs">37</text><text transform="translate(1774.8,489.3) rotate(-90)" font-size="13.6" fill="#ffffff" font-weight="bold" textLength="26.7" lengthAdjust="spacingAndGlyphs">08.09.</text><text x="1805.6" y="446.6" font-size="9.6" fill="#ffffff" font-weight="bold" text-anchor="middle" textLength="9.0" lengthAdjust="spacingAndGlyphs">38</text><text transform="translate(1808.5,489.3) rotate(-90)" font-size="13.6" fill="#ffffff" font-weight="bold" textLength="26.7" lengthAdjust="spacingAndGlyphs">15.09.</text><text x="1839.2" y="446.6" font-size="9.6" fill="#ffffff" font-weight="bold" text-anchor="middle" textLength="9.0" lengthAdjust="spacingAndGlyphs">39</text><text transform="translate(1842.1,489.3) rotate(-90)" font-size="13.6" fill="#ffffff" font-weight="bold" textLength="26.7" lengthAdjust="spacingAndGlyphs">22.09.</text><text x="1872.8" y="446.6" font-size="9.6" fill="#ffffff" font-weight="bold" text-anchor="middle" textLength="9.0" lengthAdjust="spacingAndGlyphs">40</text><text transform="translate(1875.7,489.3) rotate(-90)" font-size="13.6" fill="#ffffff" font-weight="bold" textLength="26.7" lengthAdjust="spacingAndGlyphs">29.09.</text><text x="1906.5" y="446.6" font-size="9.6" fill="#ffffff" font-weight="bold" text-anchor="middle" textLength="9.0" lengthAdjust="spacingAndGlyphs">41</text><text transform="translate(1909.4,489.3) rotate(-90)" font-size="13.6" fill="#ffffff" font-weight="bold" textLength="26.7" lengthAdjust="spacingAndGlyphs">06.10.</text><rect x="27.50" y="524.70" width="622.00" height="20.80" fill="#c5c2c5"/><rect x="650.00" y="524.70" width="1250.70" height="20.80" fill="#c5c2c5"/><rect x="27.50" y="572.70" width="622.00" height="20.80" fill="#c5c2c5"/><rect x="650.00" y="572.70" width="1250.70" height="20.80" fill="#c5c2c5"/><rect x="27.50" y="740.70" width="622.00" height="20.80" fill="#c5c2c5"/><rect x="650.00" y="740.70" width="1250.70" height="20.80" fill="#c5c2c5"/><rect x="27.50" y="812.70" width="622.00" height="20.80" fill="#c5c2c5"/><rect x="650.00" y="812.70" width="1250.70" height="20.80" fill="#c5c2c5"/><rect x="673.32" y="500.70" width="9.61" height="20.80" fill="#ebe8eb"/><rect x="706.96" y="500.70" width="9.61" height="20.80" fill="#ebe8eb"/><rect x="740.59" y="500.70" width="9.61" height="20.80" fill="#ebe8eb"/><rect x="774.23" y="500.70" width="9.61" height="20.80" fill="#ebe8eb"/><rect x="807.86" y="500.70" width="9.61" height="20.80" fill="#ebe8eb"/><rect x="841.50" y="500.70" width="9.61" height="20.80" fill="#ebe8eb"/><rect x="875.13" y="500.70" width="9.61" height="20.80" fill="#ebe8eb"/><rect x="908.77" y="500.70" width="9.61" height="20.80" fill="#ebe8eb"/><rect x="942.40" y="500.70" width="9.61" height="20.80" fill="#ebe8eb"/><rect x="976.04" y="500.70" width="9.61" height="20.80" fill="#ebe8eb"/><rect x="1009.67" y="500.70" width="9.61" height="20.80" fill="#ebe8eb"/><rect x="1043.31" y="500.70" width="9.61" height="20.80" fill="#ebe8eb"/><rect x="1076.94" y="500.70" width="9.61" height="20.80" fill="#ebe8eb"/><rect x="1110.58" y="500.70" width="9.61" height="20.80" fill="#ebe8eb"/><rect x="1144.21" y="500.70" width="9.61" height="20.80" fill="#ebe8eb"/><rect x="1177.85" y="500.70" width="9.61" height="20.80" fill="#ebe8eb"/><rect x="1211.48" y="500.70" width="9.61" height="20.80" fill="#ebe8eb"/><rect x="1245.12" y="500.70" width="9.61" height="20.80" fill="#ebe8eb"/><rect x="1278.75" y="500.70" width="9.61" height="20.80" fill="#ebe8eb"/><rect x="1312.39" y="500.70" width="9.61" height="20.80" fill="#ebe8eb"/><rect x="1346.02" y="500.70" width="9.61" height="20.80" fill="#ebe8eb"/><rect x="1379.66" y="500.70" width="9.61" height="20.80" fill="#ebe8eb"/><rect x="1413.29" y="500.70" width="9.61" height="20.80" fill="#ebe8eb"/><rect x="1446.93" y="500.70" width="9.61" height="20.80" fill="#ebe8eb"/><rect x="1480.57" y="500.70" width="9.61" height="20.80" fill="#ebe8eb"/><rect x="1514.20" y="500.70" width="9.61" height="20.80" fill="#ebe8eb"/><rect x="1547.84" y="500.70" width="9.61" height="20.80" fill="#ebe8eb"/><rect x="1581.47" y="500.70" width="9.61" height="20.80" fill="#ebe8eb"/><rect x="1615.11" y="500.70" width="9.61" height="20.80" fill="#ebe8eb"/><rect x="1648.74" y="500.70" width="9.61" height="20.80" fill="#ebe8eb"/><rect x="1682.38" y="500.70" width="9.61" height="20.80" fill="#ebe8eb"/><rect x="1716.01" y="500.70" width="9.61" height="20.80" fill="#ebe8eb"/><rect x="1749.64" y="500.70" width="9.61" height="20.80" fill="#ebe8eb"/><rect x="1783.28" y="500.70" width="9.61" height="20.80" fill="#ebe8eb"/><rect x="1816.91" y="500.70" width="9.61" height="20.80" fill="#ebe8eb"/><rect x="1850.55" y="500.70" width="9.61" height="20.80" fill="#ebe8eb"/><rect x="1884.18" y="500.70" width="9.61" height="20.80" fill="#ebe8eb"/><rect x="745.40" y="500.70" width="4.80" height="20.80" fill="#f3c300"/><rect x="673.32" y="524.70" width="9.61" height="20.80" fill="#ebe8eb"/><rect x="706.96" y="524.70" width="9.61" height="20.80" fill="#ebe8eb"/><rect x="740.59" y="524.70" width="9.61" height="20.80" fill="#ebe8eb"/><rect x="774.23" y="524.70" width="9.61" height="20.80" fill="#ebe8eb"/><rect x="807.86" y="524.70" width="9.61" height="20.80" fill="#ebe8eb"/><rect x="841.50" y="524.70" width="9.61" height="20.80" fill="#ebe8eb"/><rect x="875.13" y="524.70" width="9.61" height="20.80" fill="#ebe8eb"/><rect x="908.77" y="524.70" width="9.61" height="20.80" fill="#ebe8eb"/><rect x="942.40" y="524.70" width="9.61" height="20.80" fill="#ebe8eb"/><rect x="976.04" y="524.70" width="9.61" height="20.80" fill="#ebe8eb"/><rect x="1009.67" y="524.70" width="9.61" height="20.80" fill="#ebe8eb"/><rect x="1043.31" y="524.70" width="9.61" height="20.80" fill="#ebe8eb"/><rect x="1076.94" y="524.70" width="9.61" height="20.80" fill="#ebe8eb"/><rect x="1110.58" y="524.70" width="9.61" height="20.80" fill="#ebe8eb"/><rect x="1144.21" y="524.70" width="9.61" height="20.80" fill="#ebe8eb"/><rect x="1177.85" y="524.70" width="9.61" height="20.80" fill="#ebe8eb"/><rect x="1211.48" y="524.70" width="9.61" height="20.80" fill="#ebe8eb"/><rect x="1245.12" y="524.70" width="9.61" height="20.80" fill="#ebe8eb"/><rect x="1278.75" y="524.70" width="9.61" height="20.80" fill="#ebe8eb"/><rect x="1312.39" y="524.70" width="9.61" height="20.80" fill="#ebe8eb"/><rect x="1346.02" y="524.70" width="9.61" height="20.80" fill="#ebe8eb"/><rect x="1379.66" y="524.70" width="9.61" height="20.80" fill="#ebe8eb"/><rect x="1413.29" y="524.70" width="9.61" height="20.80" fill="#ebe8eb"/><rect x="1446.93" y="524.70" width="9.61" height="20.80" fill="#ebe8eb"/><rect x="1480.57" y="524.70" width="9.61" height="20.80" fill="#ebe8eb"/><rect x="1514.20" y="524.70" width="9.61" height="20.80" fill="#ebe8eb"/><rect x="1547.84" y="524.70" width="9.61" height="20.80" fill="#ebe8eb"/><rect x="1581.47" y="524.70" width="9.61" height="20.80" fill="#ebe8eb"/><rect x="1615.11" y="524.70" width="9.61" height="20.80" fill="#ebe8eb"/><rect x="1648.74" y="524.70" width="9.61" height="20.80" fill="#ebe8eb"/><rect x="1682.38" y="524.70" width="9.61" height="20.80" fill="#ebe8eb"/><rect x="1716.01" y="524.70" width="9.61" height="20.80" fill="#ebe8eb"/><rect x="1749.64" y="524.70" width="9.61" height="20.80" fill="#ebe8eb"/><rect x="1783.28" y="524.70" width="9.61" height="20.80" fill="#ebe8eb"/><rect x="1816.91" y="524.70" width="9.61" height="20.80" fill="#ebe8eb"/><rect x="1850.55" y="524.70" width="9.61" height="20.80" fill="#ebe8eb"/><rect x="1884.18" y="524.70" width="9.61" height="20.80" fill="#ebe8eb"/><rect x="745.40" y="524.70" width="4.80" height="20.80" fill="#f3c300"/><rect x="673.32" y="548.70" width="9.61" height="20.80" fill="#ebe8eb"/><rect x="706.96" y="548.70" width="9.61" height="20.80" fill="#ebe8eb"/><rect x="740.59" y="548.70" width="9.61" height="20.80" fill="#ebe8eb"/><rect x="774.23" y="548.70" width="9.61" height="20.80" fill="#ebe8eb"/><rect x="807.86" y="548.70" width="9.61" height="20.80" fill="#ebe8eb"/><rect x="841.50" y="548.70" width="9.61" height="20.80" fill="#ebe8eb"/><rect x="875.13" y="548.70" width="9.61" height="20.80" fill="#ebe8eb"/><rect x="908.77" y="548.70" width="9.61" height="20.80" fill="#ebe8eb"/><rect x="942.40" y="548.70" width="9.61" height="20.80" fill="#ebe8eb"/><rect x="976.04" y="548.70" width="9.61" height="20.80" fill="#ebe8eb"/><rect x="1009.67" y="548.70" width="9.61" height="20.80" fill="#ebe8eb"/><rect x="1043.31" y="548.70" width="9.61" height="20.80" fill="#ebe8eb"/><rect x="1076.94" y="548.70" width="9.61" height="20.80" fill="#ebe8eb"/><rect x="1110.58" y="548.70" width="9.61" height="20.80" fill="#ebe8eb"/><rect x="1144.21" y="548.70" width="9.61" height="20.80" fill="#ebe8eb"/><rect x="1177.85" y="548.70" width="9.61" height="20.80" fill="#ebe8eb"/><rect x="1211.48" y="548.70" width="9.61" height="20.80" fill="#ebe8eb"/><rect x="1245.12" y="548.70" width="9.61" height="20.80" fill="#ebe8eb"/><rect x="1278.75" y="548.70" width="9.61" height="20.80" fill="#ebe8eb"/><rect x="1312.39" y="548.70" width="9.61" height="20.80" fill="#ebe8eb"/><rect x="1346.02" y="548.70" width="9.61" height="20.80" fill="#ebe8eb"/><rect x="1379.66" y="548.70" width="9.61" height="20.80" fill="#ebe8eb"/><rect x="1413.29" y="548.70" width="9.61" height="20.80" fill="#ebe8eb"/><rect x="1446.93" y="548.70" width="9.61" height="20.80" fill="#ebe8eb"/><rect x="1480.57" y="548.70" width="9.61" height="20.80" fill="#ebe8eb"/><rect x="1514.20" y="548.70" width="9.61" height="20.80" fill="#ebe8eb"/><rect x="1547.84" y="548.70" width="9.61" height="20.80" fill="#ebe8eb"/><rect x="1581.47" y="548.70" width="9.61" height="20.80" fill="#ebe8eb"/><rect x="1615.11" y="548.70" width="9.61" height="20.80" fill="#ebe8eb"/><rect x="1648.74" y="548.70" width="9.61" height="20.80" fill="#ebe8eb"/><rect x="1682.38" y="548.70" width="9.61" height="20.80" fill="#ebe8eb"/><rect x="1716.01" y="548.70" width="9.61" height="20.80" fill="#ebe8eb"/><rect x="1749.64" y="548.70" width="9.61" height="20.80" fill="#ebe8eb"/><rect x="1783.28" y="548.70" width="9.61" height="20.80" fill="#ebe8eb"/><rect x="1816.91" y="548.70" width="9.61" height="20.80" fill="#ebe8eb"/><rect x="1850.55" y="548.70" width="9.61" height="20.80" fill="#ebe8eb"/><rect x="1884.18" y="548.70" width="9.61" height="20.80" fill="#ebe8eb"/><rect x="745.40" y="548.70" width="4.80" height="20.80" fill="#f3c300"/><rect x="673.32" y="572.70" width="9.61" height="20.80" fill="#ebe8eb"/><rect x="706.96" y="572.70" width="9.61" height="20.80" fill="#ebe8eb"/><rect x="740.59" y="572.70" width="9.61" height="20.80" fill="#ebe8eb"/><rect x="774.23" y="572.70" width="9.61" height="20.80" fill="#ebe8eb"/><rect x="807.86" y="572.70" width="9.61" height="20.80" fill="#ebe8eb"/><rect x="841.50" y="572.70" width="9.61" height="20.80" fill="#ebe8eb"/><rect x="875.13" y="572.70" width="9.61" height="20.80" fill="#ebe8eb"/><rect x="908.77" y="572.70" width="9.61" height="20.80" fill="#ebe8eb"/><rect x="942.40" y="572.70" width="9.61" height="20.80" fill="#ebe8eb"/><rect x="976.04" y="572.70" width="9.61" height="20.80" fill="#ebe8eb"/><rect x="1009.67" y="572.70" width="9.61" height="20.80" fill="#ebe8eb"/><rect x="1043.31" y="572.70" width="9.61" height="20.80" fill="#ebe8eb"/><rect x="1076.94" y="572.70" width="9.61" height="20.80" fill="#ebe8eb"/><rect x="1110.58" y="572.70" width="9.61" height="20.80" fill="#ebe8eb"/><rect x="1144.21" y="572.70" width="9.61" height="20.80" fill="#ebe8eb"/><rect x="1177.85" y="572.70" width="9.61" height="20.80" fill="#ebe8eb"/><rect x="1211.48" y="572.70" width="9.61" height="20.80" fill="#ebe8eb"/><rect x="1245.12" y="572.70" width="9.61" height="20.80" fill="#ebe8eb"/><rect x="1278.75" y="572.70" width="9.61" height="20.80" fill="#ebe8eb"/><rect x="1312.39" y="572.70" width="9.61" height="20.80" fill="#ebe8eb"/><rect x="1346.02" y="572.70" width="9.61" height="20.80" fill="#ebe8eb"/><rect x="1379.66" y="572.70" width="9.61" height="20.80" fill="#ebe8eb"/><rect x="1413.29" y="572.70" width="9.61" height="20.80" fill="#ebe8eb"/><rect x="1446.93" y="572.70" width="9.61" height="20.80" fill="#ebe8eb"/><rect x="1480.57" y="572.70" width="9.61" height="20.80" fill="#ebe8eb"/><rect x="1514.20" y="572.70" width="9.61" height="20.80" fill="#ebe8eb"/><rect x="1547.84" y="572.70" width="9.61" height="20.80" fill="#ebe8eb"/><rect x="1581.47" y="572.70" width="9.61" height="20.80" fill="#ebe8eb"/><rect x="1615.11" y="572.70" width="9.61" height="20.80" fill="#ebe8eb"/><rect x="1648.74" y="572.70" width="9.61" height="20.80" fill="#ebe8eb"/><rect x="1682.38" y="572.70" width="9.61" height="20.80" fill="#ebe8eb"/><rect x="1716.01" y="572.70" width="9.61" height="20.80" fill="#ebe8eb"/><rect x="1749.64" y="572.70" width="9.61" height="20.80" fill="#ebe8eb"/><rect x="1783.28" y="572.70" width="9.61" height="20.80" fill="#ebe8eb"/><rect x="1816.91" y="572.70" width="9.61" height="20.80" fill="#ebe8eb"/><rect x="1850.55" y="572.70" width="9.61" height="20.80" fill="#ebe8eb"/><rect x="1884.18" y="572.70" width="9.61" height="20.80" fill="#ebe8eb"/><rect x="745.40" y="572.70" width="4.80" height="20.80" fill="#f3c300"/><rect x="673.32" y="596.70" width="9.61" height="20.80" fill="#ebe8eb"/><rect x="706.96" y="596.70" width="9.61" height="20.80" fill="#ebe8eb"/><rect x="740.59" y="596.70" width="9.61" height="20.80" fill="#ebe8eb"/><rect x="774.23" y="596.70" width="9.61" height="20.80" fill="#ebe8eb"/><rect x="807.86" y="596.70" width="9.61" height="20.80" fill="#ebe8eb"/><rect x="841.50" y="596.70" width="9.61" height="20.80" fill="#ebe8eb"/><rect x="875.13" y="596.70" width="9.61" height="20.80" fill="#ebe8eb"/><rect x="908.77" y="596.70" width="9.61" height="20.80" fill="#ebe8eb"/><rect x="942.40" y="596.70" width="9.61" height="20.80" fill="#ebe8eb"/><rect x="976.04" y="596.70" width="9.61" height="20.80" fill="#ebe8eb"/><rect x="1009.67" y="596.70" width="9.61" height="20.80" fill="#ebe8eb"/><rect x="1043.31" y="596.70" width="9.61" height="20.80" fill="#ebe8eb"/><rect x="1076.94" y="596.70" width="9.61" height="20.80" fill="#ebe8eb"/><rect x="1110.58" y="596.70" width="9.61" height="20.80" fill="#ebe8eb"/><rect x="1144.21" y="596.70" width="9.61" height="20.80" fill="#ebe8eb"/><rect x="1177.85" y="596.70" width="9.61" height="20.80" fill="#ebe8eb"/><rect x="1211.48" y="596.70" width="9.61" height="20.80" fill="#ebe8eb"/><rect x="1245.12" y="596.70" width="9.61" height="20.80" fill="#ebe8eb"/><rect x="1278.75" y="596.70" width="9.61" height="20.80" fill="#ebe8eb"/><rect x="1312.39" y="596.70" width="9.61" height="20.80" fill="#ebe8eb"/><rect x="1346.02" y="596.70" width="9.61" height="20.80" fill="#ebe8eb"/><rect x="1379.66" y="596.70" width="9.61" height="20.80" fill="#ebe8eb"/><rect x="1413.29" y="596.70" width="9.61" height="20.80" fill="#ebe8eb"/><rect x="1446.93" y="596.70" width="9.61" height="20.80" fill="#ebe8eb"/><rect x="1480.57" y="596.70" width="9.61" height="20.80" fill="#ebe8eb"/><rect x="1514.20" y="596.70" width="9.61" height="20.80" fill="#ebe8eb"/><rect x="1547.84" y="596.70" width="9.61" height="20.80" fill="#ebe8eb"/><rect x="1581.47" y="596.70" width="9.61" height="20.80" fill="#ebe8eb"/><rect x="1615.11" y="596.70" width="9.61" height="20.80" fill="#ebe8eb"/><rect x="1648.74" y="596.70" width="9.61" height="20.80" fill="#ebe8eb"/><rect x="1682.38" y="596.70" width="9.61" height="20.80" fill="#ebe8eb"/><rect x="1716.01" y="596.70" width="9.61" height="20.80" fill="#ebe8eb"/><rect x="1749.64" y="596.70" width="9.61" height="20.80" fill="#ebe8eb"/><rect x="1783.28" y="596.70" width="9.61" height="20.80" fill="#ebe8eb"/><rect x="1816.91" y="596.70" width="9.61" height="20.80" fill="#ebe8eb"/><rect x="1850.55" y="596.70" width="9.61" height="20.80" fill="#ebe8eb"/><rect x="1884.18" y="596.70" width="9.61" height="20.80" fill="#ebe8eb"/><rect x="745.40" y="596.70" width="4.80" height="20.80" fill="#f3c300"/><rect x="673.32" y="620.70" width="9.61" height="20.80" fill="#ebe8eb"/><rect x="706.96" y="620.70" width="9.61" height="20.80" fill="#ebe8eb"/><rect x="740.59" y="620.70" width="9.61" height="20.80" fill="#ebe8eb"/><rect x="774.23" y="620.70" width="9.61" height="20.80" fill="#ebe8eb"/><rect x="807.86" y="620.70" width="9.61" height="20.80" fill="#ebe8eb"/><rect x="841.50" y="620.70" width="9.61" height="20.80" fill="#ebe8eb"/><rect x="875.13" y="620.70" width="9.61" height="20.80" fill="#ebe8eb"/><rect x="908.77" y="620.70" width="9.61" height="20.80" fill="#ebe8eb"/><rect x="942.40" y="620.70" width="9.61" height="20.80" fill="#ebe8eb"/><rect x="976.04" y="620.70" width="9.61" height="20.80" fill="#ebe8eb"/><rect x="1009.67" y="620.70" width="9.61" height="20.80" fill="#ebe8eb"/><rect x="1043.31" y="620.70" width="9.61" height="20.80" fill="#ebe8eb"/><rect x="1076.94" y="620.70" width="9.61" height="20.80" fill="#ebe8eb"/><rect x="1110.58" y="620.70" width="9.61" height="20.80" fill="#ebe8eb"/><rect x="1144.21" y="620.70" width="9.61" height="20.80" fill="#ebe8eb"/><rect x="1177.85" y="620.70" width="9.61" height="20.80" fill="#ebe8eb"/><rect x="1211.48" y="620.70" width="9.61" height="20.80" fill="#ebe8eb"/><rect x="1245.12" y="620.70" width="9.61" height="20.80" fill="#ebe8eb"/><rect x="1278.75" y="620.70" width="9.61" height="20.80" fill="#ebe8eb"/><rect x="1312.39" y="620.70" width="9.61" height="20.80" fill="#ebe8eb"/><rect x="1346.02" y="620.70" width="9.61" height="20.80" fill="#ebe8eb"/><rect x="1379.66" y="620.70" width="9.61" height="20.80" fill="#ebe8eb"/><rect x="1413.29" y="620.70" width="9.61" height="20.80" fill="#ebe8eb"/><rect x="1446.93" y="620.70" width="9.61" height="20.80" fill="#ebe8eb"/><rect x="1480.57" y="620.70" width="9.61" height="20.80" fill="#ebe8eb"/><rect x="1514.20" y="620.70" width="9.61" height="20.80" fill="#ebe8eb"/><rect x="1547.84" y="620.70" width="9.61" height="20.80" fill="#ebe8eb"/><rect x="1581.47" y="620.70" width="9.61" height="20.80" fill="#ebe8eb"/><rect x="1615.11" y="620.70" width="9.61" height="20.80" fill="#ebe8eb"/><rect x="1648.74" y="620.70" width="9.61" height="20.80" fill="#ebe8eb"/><rect x="1682.38" y="620.70" width="9.61" height="20.80" fill="#ebe8eb"/><rect x="1716.01" y="620.70" width="9.61" height="20.80" fill="#ebe8eb"/><rect x="1749.64" y="620.70" width="9.61" height="20.80" fill="#ebe8eb"/><rect x="1783.28" y="620.70" width="9.61" height="20.80" fill="#ebe8eb"/><rect x="1816.91" y="620.70" width="9.61" height="20.80" fill="#ebe8eb"/><rect x="1850.55" y="620.70" width="9.61" height="20.80" fill="#ebe8eb"/><rect x="1884.18" y="620.70" width="9.61" height="20.80" fill="#ebe8eb"/><rect x="745.40" y="620.70" width="4.80" height="20.80" fill="#f3c300"/><rect x="673.32" y="644.70" width="9.61" height="20.80" fill="#ebe8eb"/><rect x="706.96" y="644.70" width="9.61" height="20.80" fill="#ebe8eb"/><rect x="740.59" y="644.70" width="9.61" height="20.80" fill="#ebe8eb"/><rect x="774.23" y="644.70" width="9.61" height="20.80" fill="#ebe8eb"/><rect x="807.86" y="644.70" width="9.61" height="20.80" fill="#ebe8eb"/><rect x="841.50" y="644.70" width="9.61" height="20.80" fill="#ebe8eb"/><rect x="875.13" y="644.70" width="9.61" height="20.80" fill="#ebe8eb"/><rect x="908.77" y="644.70" width="9.61" height="20.80" fill="#ebe8eb"/><rect x="942.40" y="644.70" width="9.61" height="20.80" fill="#ebe8eb"/><rect x="976.04" y="644.70" width="9.61" height="20.80" fill="#ebe8eb"/><rect x="1009.67" y="644.70" width="9.61" height="20.80" fill="#ebe8eb"/><rect x="1043.31" y="644.70" width="9.61" height="20.80" fill="#ebe8eb"/><rect x="1076.94" y="644.70" width="9.61" height="20.80" fill="#ebe8eb"/><rect x="1110.58" y="644.70" width="9.61" height="20.80" fill="#ebe8eb"/><rect x="1144.21" y="644.70" width="9.61" height="20.80" fill="#ebe8eb"/><rect x="1177.85" y="644.70" width="9.61" height="20.80" fill="#ebe8eb"/><rect x="1211.48" y="644.70" width="9.61" height="20.80" fill="#ebe8eb"/><rect x="1245.12" y="644.70" width="9.61" height="20.80" fill="#ebe8eb"/><rect x="1278.75" y="644.70" width="9.61" height="20.80" fill="#ebe8eb"/><rect x="1312.39" y="644.70" width="9.61" height="20.80" fill="#ebe8eb"/><rect x="1346.02" y="644.70" width="9.61" height="20.80" fill="#ebe8eb"/><rect x="1379.66" y="644.70" width="9.61" height="20.80" fill="#ebe8eb"/><rect x="1413.29" y="644.70" width="9.61" height="20.80" fill="#ebe8eb"/><rect x="1446.93" y="644.70" width="9.61" height="20.80" fill="#ebe8eb"/><rect x="1480.57" y="644.70" width="9.61" height="20.80" fill="#ebe8eb"/><rect x="1514.20" y="644.70" width="9.61" height="20.80" fill="#ebe8eb"/><rect x="1547.84" y="644.70" width="9.61" height="20.80" fill="#ebe8eb"/><rect x="1581.47" y="644.70" width="9.61" height="20.80" fill="#ebe8eb"/><rect x="1615.11" y="644.70" width="9.61" height="20.80" fill="#ebe8eb"/><rect x="1648.74" y="644.70" width="9.61" height="20.80" fill="#ebe8eb"/><rect x="1682.38" y="644.70" width="9.61" height="20.80" fill="#ebe8eb"/><rect x="1716.01" y="644.70" width="9.61" height="20.80" fill="#ebe8eb"/><rect x="1749.64" y="644.70" width="9.61" height="20.80" fill="#ebe8eb"/><rect x="1783.28" y="644.70" width="9.61" height="20.80" fill="#ebe8eb"/><rect x="1816.91" y="644.70" width="9.61" height="20.80" fill="#ebe8eb"/><rect x="1850.55" y="644.70" width="9.61" height="20.80" fill="#ebe8eb"/><rect x="1884.18" y="644.70" width="9.61" height="20.80" fill="#ebe8eb"/><rect x="745.40" y="644.70" width="4.80" height="20.80" fill="#f3c300"/><rect x="673.32" y="668.70" width="9.61" height="20.80" fill="#ebe8eb"/><rect x="706.96" y="668.70" width="9.61" height="20.80" fill="#ebe8eb"/><rect x="740.59" y="668.70" width="9.61" height="20.80" fill="#ebe8eb"/><rect x="774.23" y="668.70" width="9.61" height="20.80" fill="#ebe8eb"/><rect x="807.86" y="668.70" width="9.61" height="20.80" fill="#ebe8eb"/><rect x="841.50" y="668.70" width="9.61" height="20.80" fill="#ebe8eb"/><rect x="875.13" y="668.70" width="9.61" height="20.80" fill="#ebe8eb"/><rect x="908.77" y="668.70" width="9.61" height="20.80" fill="#ebe8eb"/><rect x="942.40" y="668.70" width="9.61" height="20.80" fill="#ebe8eb"/><rect x="976.04" y="668.70" width="9.61" height="20.80" fill="#ebe8eb"/><rect x="1009.67" y="668.70" width="9.61" height="20.80" fill="#ebe8eb"/><rect x="1043.31" y="668.70" width="9.61" height="20.80" fill="#ebe8eb"/><rect x="1076.94" y="668.70" width="9.61" height="20.80" fill="#ebe8eb"/><rect x="1110.58" y="668.70" width="9.61" height="20.80" fill="#ebe8eb"/><rect x="1144.21" y="668.70" width="9.61" height="20.80" fill="#ebe8eb"/><rect x="1177.85" y="668.70" width="9.61" height="20.80" fill="#ebe8eb"/><rect x="1211.48" y="668.70" width="9.61" height="20.80" fill="#ebe8eb"/><rect x="1245.12" y="668.70" width="9.61" height="20.80" fill="#ebe8eb"/><rect x="1278.75" y="668.70" width="9.61" height="20.80" fill="#ebe8eb"/><rect x="1312.39" y="668.70" width="9.61" height="20.80" fill="#ebe8eb"/><rect x="1346.02" y="668.70" width="9.61" height="20.80" fill="#ebe8eb"/><rect x="1379.66" y="668.70" width="9.61" height="20.80" fill="#ebe8eb"/><rect x="1413.29" y="668.70" width="9.61" height="20.80" fill="#ebe8eb"/><rect x="1446.93" y="668.70" width="9.61" height="20.80" fill="#ebe8eb"/><rect x="1480.57" y="668.70" width="9.61" height="20.80" fill="#ebe8eb"/><rect x="1514.20" y="668.70" width="9.61" height="20.80" fill="#ebe8eb"/><rect x="1547.84" y="668.70" width="9.61" height="20.80" fill="#ebe8eb"/><rect x="1581.47" y="668.70" width="9.61" height="20.80" fill="#ebe8eb"/><rect x="1615.11" y="668.70" width="9.61" height="20.80" fill="#ebe8eb"/><rect x="1648.74" y="668.70" width="9.61" height="20.80" fill="#ebe8eb"/><rect x="1682.38" y="668.70" width="9.61" height="20.80" fill="#ebe8eb"/><rect x="1716.01" y="668.70" width="9.61" height="20.80" fill="#ebe8eb"/><rect x="1749.64" y="668.70" width="9.61" height="20.80" fill="#ebe8eb"/><rect x="1783.28" y="668.70" width="9.61" height="20.80" fill="#ebe8eb"/><rect x="1816.91" y="668.70" width="9.61" height="20.80" fill="#ebe8eb"/><rect x="1850.55" y="668.70" width="9.61" height="20.80" fill="#ebe8eb"/><rect x="1884.18" y="668.70" width="9.61" height="20.80" fill="#ebe8eb"/><rect x="745.40" y="668.70" width="4.80" height="20.80" fill="#f3c300"/><rect x="673.32" y="692.70" width="9.61" height="20.80" fill="#ebe8eb"/><rect x="706.96" y="692.70" width="9.61" height="20.80" fill="#ebe8eb"/><rect x="740.59" y="692.70" width="9.61" height="20.80" fill="#ebe8eb"/><rect x="774.23" y="692.70" width="9.61" height="20.80" fill="#ebe8eb"/><rect x="807.86" y="692.70" width="9.61" height="20.80" fill="#ebe8eb"/><rect x="841.50" y="692.70" width="9.61" height="20.80" fill="#ebe8eb"/><rect x="875.13" y="692.70" width="9.61" height="20.80" fill="#ebe8eb"/><rect x="908.77" y="692.70" width="9.61" height="20.80" fill="#ebe8eb"/><rect x="942.40" y="692.70" width="9.61" height="20.80" fill="#ebe8eb"/><rect x="976.04" y="692.70" width="9.61" height="20.80" fill="#ebe8eb"/><rect x="1009.67" y="692.70" width="9.61" height="20.80" fill="#ebe8eb"/><rect x="1043.31" y="692.70" width="9.61" height="20.80" fill="#ebe8eb"/><rect x="1076.94" y="692.70" width="9.61" height="20.80" fill="#ebe8eb"/><rect x="1110.58" y="692.70" width="9.61" height="20.80" fill="#ebe8eb"/><rect x="1144.21" y="692.70" width="9.61" height="20.80" fill="#ebe8eb"/><rect x="1177.85" y="692.70" width="9.61" height="20.80" fill="#ebe8eb"/><rect x="1211.48" y="692.70" width="9.61" height="20.80" fill="#ebe8eb"/><rect x="1245.12" y="692.70" width="9.61" height="20.80" fill="#ebe8eb"/><rect x="1278.75" y="692.70" width="9.61" height="20.80" fill="#ebe8eb"/><rect x="1312.39" y="692.70" width="9.61" height="20.80" fill="#ebe8eb"/><rect x="1346.02" y="692.70" width="9.61" height="20.80" fill="#ebe8eb"/><rect x="1379.66" y="692.70" width="9.61" height="20.80" fill="#ebe8eb"/><rect x="1413.29" y="692.70" width="9.61" height="20.80" fill="#ebe8eb"/><rect x="1446.93" y="692.70" width="9.61" height="20.80" fill="#ebe8eb"/><rect x="1480.57" y="692.70" width="9.61" height="20.80" fill="#ebe8eb"/><rect x="1514.20" y="692.70" width="9.61" height="20.80" fill="#ebe8eb"/><rect x="1547.84" y="692.70" width="9.61" height="20.80" fill="#ebe8eb"/><rect x="1581.47" y="692.70" width="9.61" height="20.80" fill="#ebe8eb"/><rect x="1615.11" y="692.70" width="9.61" height="20.80" fill="#ebe8eb"/><rect x="1648.74" y="692.70" width="9.61" height="20.80" fill="#ebe8eb"/><rect x="1682.38" y="692.70" width="9.61" height="20.80" fill="#ebe8eb"/><rect x="1716.01" y="692.70" width="9.61" height="20.80" fill="#ebe8eb"/><rect x="1749.64" y="692.70" width="9.61" height="20.80" fill="#ebe8eb"/><rect x="1783.28" y="692.70" width="9.61" height="20.80" fill="#ebe8eb"/><rect x="1816.91" y="692.70" width="9.61" height="20.80" fill="#ebe8eb"/><rect x="1850.55" y="692.70" width="9.61" height="20.80" fill="#ebe8eb"/><rect x="1884.18" y="692.70" width="9.61" height="20.80" fill="#ebe8eb"/><rect x="745.40" y="692.70" width="4.80" height="20.80" fill="#f3c300"/><rect x="673.32" y="716.70" width="9.61" height="20.80" fill="#ebe8eb"/><rect x="706.96" y="716.70" width="9.61" height="20.80" fill="#ebe8eb"/><rect x="740.59" y="716.70" width="9.61" height="20.80" fill="#ebe8eb"/><rect x="774.23" y="716.70" width="9.61" height="20.80" fill="#ebe8eb"/><rect x="807.86" y="716.70" width="9.61" height="20.80" fill="#ebe8eb"/><rect x="841.50" y="716.70" width="9.61" height="20.80" fill="#ebe8eb"/><rect x="875.13" y="716.70" width="9.61" height="20.80" fill="#ebe8eb"/><rect x="908.77" y="716.70" width="9.61" height="20.80" fill="#ebe8eb"/><rect x="942.40" y="716.70" width="9.61" height="20.80" fill="#ebe8eb"/><rect x="976.04" y="716.70" width="9.61" height="20.80" fill="#ebe8eb"/><rect x="1009.67" y="716.70" width="9.61" height="20.80" fill="#ebe8eb"/><rect x="1043.31" y="716.70" width="9.61" height="20.80" fill="#ebe8eb"/><rect x="1076.94" y="716.70" width="9.61" height="20.80" fill="#ebe8eb"/><rect x="1110.58" y="716.70" width="9.61" height="20.80" fill="#ebe8eb"/><rect x="1144.21" y="716.70" width="9.61" height="20.80" fill="#ebe8eb"/><rect x="1177.85" y="716.70" width="9.61" height="20.80" fill="#ebe8eb"/><rect x="1211.48" y="716.70" width="9.61" height="20.80" fill="#ebe8eb"/><rect x="1245.12" y="716.70" width="9.61" height="20.80" fill="#ebe8eb"/><rect x="1278.75" y="716.70" width="9.61" height="20.80" fill="#ebe8eb"/><rect x="1312.39" y="716.70" width="9.61" height="20.80" fill="#ebe8eb"/><rect x="1346.02" y="716.70" width="9.61" height="20.80" fill="#ebe8eb"/><rect x="1379.66" y="716.70" width="9.61" height="20.80" fill="#ebe8eb"/><rect x="1413.29" y="716.70" width="9.61" height="20.80" fill="#ebe8eb"/><rect x="1446.93" y="716.70" width="9.61" height="20.80" fill="#ebe8eb"/><rect x="1480.57" y="716.70" width="9.61" height="20.80" fill="#ebe8eb"/><rect x="1514.20" y="716.70" width="9.61" height="20.80" fill="#ebe8eb"/><rect x="1547.84" y="716.70" width="9.61" height="20.80" fill="#ebe8eb"/><rect x="1581.47" y="716.70" width="9.61" height="20.80" fill="#ebe8eb"/><rect x="1615.11" y="716.70" width="9.61" height="20.80" fill="#ebe8eb"/><rect x="1648.74" y="716.70" width="9.61" height="20.80" fill="#ebe8eb"/><rect x="1682.38" y="716.70" width="9.61" height="20.80" fill="#ebe8eb"/><rect x="1716.01" y="716.70" width="9.61" height="20.80" fill="#ebe8eb"/><rect x="1749.64" y="716.70" width="9.61" height="20.80" fill="#ebe8eb"/><rect x="1783.28" y="716.70" width="9.61" height="20.80" fill="#ebe8eb"/><rect x="1816.91" y="716.70" width="9.61" height="20.80" fill="#ebe8eb"/><rect x="1850.55" y="716.70" width="9.61" height="20.80" fill="#ebe8eb"/><rect x="1884.18" y="716.70" width="9.61" height="20.80" fill="#ebe8eb"/><rect x="745.40" y="716.70" width="4.80" height="20.80" fill="#f3c300"/><rect x="673.32" y="740.70" width="9.61" height="20.80" fill="#ebe8eb"/><rect x="706.96" y="740.70" width="9.61" height="20.80" fill="#ebe8eb"/><rect x="740.59" y="740.70" width="9.61" height="20.80" fill="#ebe8eb"/><rect x="774.23" y="740.70" width="9.61" height="20.80" fill="#ebe8eb"/><rect x="807.86" y="740.70" width="9.61" height="20.80" fill="#ebe8eb"/><rect x="841.50" y="740.70" width="9.61" height="20.80" fill="#ebe8eb"/><rect x="875.13" y="740.70" width="9.61" height="20.80" fill="#ebe8eb"/><rect x="908.77" y="740.70" width="9.61" height="20.80" fill="#ebe8eb"/><rect x="942.40" y="740.70" width="9.61" height="20.80" fill="#ebe8eb"/><rect x="976.04" y="740.70" width="9.61" height="20.80" fill="#ebe8eb"/><rect x="1009.67" y="740.70" width="9.61" height="20.80" fill="#ebe8eb"/><rect x="1043.31" y="740.70" width="9.61" height="20.80" fill="#ebe8eb"/><rect x="1076.94" y="740.70" width="9.61" height="20.80" fill="#ebe8eb"/><rect x="1110.58" y="740.70" width="9.61" height="20.80" fill="#ebe8eb"/><rect x="1144.21" y="740.70" width="9.61" height="20.80" fill="#ebe8eb"/><rect x="1177.85" y="740.70" width="9.61" height="20.80" fill="#ebe8eb"/><rect x="1211.48" y="740.70" width="9.61" height="20.80" fill="#ebe8eb"/><rect x="1245.12" y="740.70" width="9.61" height="20.80" fill="#ebe8eb"/><rect x="1278.75" y="740.70" width="9.61" height="20.80" fill="#ebe8eb"/><rect x="1312.39" y="740.70" width="9.61" height="20.80" fill="#ebe8eb"/><rect x="1346.02" y="740.70" width="9.61" height="20.80" fill="#ebe8eb"/><rect x="1379.66" y="740.70" width="9.61" height="20.80" fill="#ebe8eb"/><rect x="1413.29" y="740.70" width="9.61" height="20.80" fill="#ebe8eb"/><rect x="1446.93" y="740.70" width="9.61" height="20.80" fill="#ebe8eb"/><rect x="1480.57" y="740.70" width="9.61" height="20.80" fill="#ebe8eb"/><rect x="1514.20" y="740.70" width="9.61" height="20.80" fill="#ebe8eb"/><rect x="1547.84" y="740.70" width="9.61" height="20.80" fill="#ebe8eb"/><rect x="1581.47" y="740.70" width="9.61" height="20.80" fill="#ebe8eb"/><rect x="1615.11" y="740.70" width="9.61" height="20.80" fill="#ebe8eb"/><rect x="1648.74" y="740.70" width="9.61" height="20.80" fill="#ebe8eb"/><rect x="1682.38" y="740.70" width="9.61" height="20.80" fill="#ebe8eb"/><rect x="1716.01" y="740.70" width="9.61" height="20.80" fill="#ebe8eb"/><rect x="1749.64" y="740.70" width="9.61" height="20.80" fill="#ebe8eb"/><rect x="1783.28" y="740.70" width="9.61" height="20.80" fill="#ebe8eb"/><rect x="1816.91" y="740.70" width="9.61" height="20.80" fill="#ebe8eb"/><rect x="1850.55" y="740.70" width="9.61" height="20.80" fill="#ebe8eb"/><rect x="1884.18" y="740.70" width="9.61" height="20.80" fill="#ebe8eb"/><rect x="745.40" y="740.70" width="4.80" height="20.80" fill="#f3c300"/><rect x="673.32" y="764.70" width="9.61" height="20.80" fill="#ebe8eb"/><rect x="706.96" y="764.70" width="9.61" height="20.80" fill="#ebe8eb"/><rect x="740.59" y="764.70" width="9.61" height="20.80" fill="#ebe8eb"/><rect x="774.23" y="764.70" width="9.61" height="20.80" fill="#ebe8eb"/><rect x="807.86" y="764.70" width="9.61" height="20.80" fill="#ebe8eb"/><rect x="841.50" y="764.70" width="9.61" height="20.80" fill="#ebe8eb"/><rect x="875.13" y="764.70" width="9.61" height="20.80" fill="#ebe8eb"/><rect x="908.77" y="764.70" width="9.61" height="20.80" fill="#ebe8eb"/><rect x="942.40" y="764.70" width="9.61" height="20.80" fill="#ebe8eb"/><rect x="976.04" y="764.70" width="9.61" height="20.80" fill="#ebe8eb"/><rect x="1009.67" y="764.70" width="9.61" height="20.80" fill="#ebe8eb"/><rect x="1043.31" y="764.70" width="9.61" height="20.80" fill="#ebe8eb"/><rect x="1076.94" y="764.70" width="9.61" height="20.80" fill="#ebe8eb"/><rect x="1110.58" y="764.70" width="9.61" height="20.80" fill="#ebe8eb"/><rect x="1144.21" y="764.70" width="9.61" height="20.80" fill="#ebe8eb"/><rect x="1177.85" y="764.70" width="9.61" height="20.80" fill="#ebe8eb"/><rect x="1211.48" y="764.70" width="9.61" height="20.80" fill="#ebe8eb"/><rect x="1245.12" y="764.70" width="9.61" height="20.80" fill="#ebe8eb"/><rect x="1278.75" y="764.70" width="9.61" height="20.80" fill="#ebe8eb"/><rect x="1312.39" y="764.70" width="9.61" height="20.80" fill="#ebe8eb"/><rect x="1346.02" y="764.70" width="9.61" height="20.80" fill="#ebe8eb"/><rect x="1379.66" y="764.70" width="9.61" height="20.80" fill="#ebe8eb"/><rect x="1413.29" y="764.70" width="9.61" height="20.80" fill="#ebe8eb"/><rect x="1446.93" y="764.70" width="9.61" height="20.80" fill="#ebe8eb"/><rect x="1480.57" y="764.70" width="9.61" height="20.80" fill="#ebe8eb"/><rect x="1514.20" y="764.70" width="9.61" height="20.80" fill="#ebe8eb"/><rect x="1547.84" y="764.70" width="9.61" height="20.80" fill="#ebe8eb"/><rect x="1581.47" y="764.70" width="9.61" height="20.80" fill="#ebe8eb"/><rect x="1615.11" y="764.70" width="9.61" height="20.80" fill="#ebe8eb"/><rect x="1648.74" y="764.70" width="9.61" height="20.80" fill="#ebe8eb"/><rect x="1682.38" y="764.70" width="9.61" height="20.80" fill="#ebe8eb"/><rect x="1716.01" y="764.70" width="9.61" height="20.80" fill="#ebe8eb"/><rect x="1749.64" y="764.70" width="9.61" height="20.80" fill="#ebe8eb"/><rect x="1783.28" y="764.70" width="9.61" height="20.80" fill="#ebe8eb"/><rect x="1816.91" y="764.70" width="9.61" height="20.80" fill="#ebe8eb"/><rect x="1850.55" y="764.70" width="9.61" height="20.80" fill="#ebe8eb"/><rect x="1884.18" y="764.70" width="9.61" height="20.80" fill="#ebe8eb"/><rect x="745.40" y="764.70" width="4.80" height="20.80" fill="#f3c300"/><rect x="673.32" y="788.70" width="9.61" height="20.80" fill="#ebe8eb"/><rect x="706.96" y="788.70" width="9.61" height="20.80" fill="#ebe8eb"/><rect x="740.59" y="788.70" width="9.61" height="20.80" fill="#ebe8eb"/><rect x="774.23" y="788.70" width="9.61" height="20.80" fill="#ebe8eb"/><rect x="807.86" y="788.70" width="9.61" height="20.80" fill="#ebe8eb"/><rect x="841.50" y="788.70" width="9.61" height="20.80" fill="#ebe8eb"/><rect x="875.13" y="788.70" width="9.61" height="20.80" fill="#ebe8eb"/><rect x="908.77" y="788.70" width="9.61" height="20.80" fill="#ebe8eb"/><rect x="942.40" y="788.70" width="9.61" height="20.80" fill="#ebe8eb"/><rect x="976.04" y="788.70" width="9.61" height="20.80" fill="#ebe8eb"/><rect x="1009.67" y="788.70" width="9.61" height="20.80" fill="#ebe8eb"/><rect x="1043.31" y="788.70" width="9.61" height="20.80" fill="#ebe8eb"/><rect x="1076.94" y="788.70" width="9.61" height="20.80" fill="#ebe8eb"/><rect x="1110.58" y="788.70" width="9.61" height="20.80" fill="#ebe8eb"/><rect x="1144.21" y="788.70" width="9.61" height="20.80" fill="#ebe8eb"/><rect x="1177.85" y="788.70" width="9.61" height="20.80" fill="#ebe8eb"/><rect x="1211.48" y="788.70" width="9.61" height="20.80" fill="#ebe8eb"/><rect x="1245.12" y="788.70" width="9.61" height="20.80" fill="#ebe8eb"/><rect x="1278.75" y="788.70" width="9.61" height="20.80" fill="#ebe8eb"/><rect x="1312.39" y="788.70" width="9.61" height="20.80" fill="#ebe8eb"/><rect x="1346.02" y="788.70" width="9.61" height="20.80" fill="#ebe8eb"/><rect x="1379.66" y="788.70" width="9.61" height="20.80" fill="#ebe8eb"/><rect x="1413.29" y="788.70" width="9.61" height="20.80" fill="#ebe8eb"/><rect x="1446.93" y="788.70" width="9.61" height="20.80" fill="#ebe8eb"/><rect x="1480.57" y="788.70" width="9.61" height="20.80" fill="#ebe8eb"/><rect x="1514.20" y="788.70" width="9.61" height="20.80" fill="#ebe8eb"/><rect x="1547.84" y="788.70" width="9.61" height="20.80" fill="#ebe8eb"/><rect x="1581.47" y="788.70" width="9.61" height="20.80" fill="#ebe8eb"/><rect x="1615.11" y="788.70" width="9.61" height="20.80" fill="#ebe8eb"/><rect x="1648.74" y="788.70" width="9.61" height="20.80" fill="#ebe8eb"/><rect x="1682.38" y="788.70" width="9.61" height="20.80" fill="#ebe8eb"/><rect x="1716.01" y="788.70" width="9.61" height="20.80" fill="#ebe8eb"/><rect x="1749.64" y="788.70" width="9.61" height="20.80" fill="#ebe8eb"/><rect x="1783.28" y="788.70" width="9.61" height="20.80" fill="#ebe8eb"/><rect x="1816.91" y="788.70" width="9.61" height="20.80" fill="#ebe8eb"/><rect x="1850.55" y="788.70" width="9.61" height="20.80" fill="#ebe8eb"/><rect x="1884.18" y="788.70" width="9.61" height="20.80" fill="#ebe8eb"/><rect x="745.40" y="788.70" width="4.80" height="20.80" fill="#f3c300"/><rect x="673.32" y="812.70" width="9.61" height="20.80" fill="#ebe8eb"/><rect x="706.96" y="812.70" width="9.61" height="20.80" fill="#ebe8eb"/><rect x="740.59" y="812.70" width="9.61" height="20.80" fill="#ebe8eb"/><rect x="774.23" y="812.70" width="9.61" height="20.80" fill="#ebe8eb"/><rect x="807.86" y="812.70" width="9.61" height="20.80" fill="#ebe8eb"/><rect x="841.50" y="812.70" width="9.61" height="20.80" fill="#ebe8eb"/><rect x="875.13" y="812.70" width="9.61" height="20.80" fill="#ebe8eb"/><rect x="908.77" y="812.70" width="9.61" height="20.80" fill="#ebe8eb"/><rect x="942.40" y="812.70" width="9.61" height="20.80" fill="#ebe8eb"/><rect x="976.04" y="812.70" width="9.61" height="20.80" fill="#ebe8eb"/><rect x="1009.67" y="812.70" width="9.61" height="20.80" fill="#ebe8eb"/><rect x="1043.31" y="812.70" width="9.61" height="20.80" fill="#ebe8eb"/><rect x="1076.94" y="812.70" width="9.61" height="20.80" fill="#ebe8eb"/><rect x="1110.58" y="812.70" width="9.61" height="20.80" fill="#ebe8eb"/><rect x="1144.21" y="812.70" width="9.61" height="20.80" fill="#ebe8eb"/><rect x="1177.85" y="812.70" width="9.61" height="20.80" fill="#ebe8eb"/><rect x="1211.48" y="812.70" width="9.61" height="20.80" fill="#ebe8eb"/><rect x="1245.12" y="812.70" width="9.61" height="20.80" fill="#ebe8eb"/><rect x="1278.75" y="812.70" width="9.61" height="20.80" fill="#ebe8eb"/><rect x="1312.39" y="812.70" width="9.61" height="20.80" fill="#ebe8eb"/><rect x="1346.02" y="812.70" width="9.61" height="20.80" fill="#ebe8eb"/><rect x="1379.66" y="812.70" width="9.61" height="20.80" fill="#ebe8eb"/><rect x="1413.29" y="812.70" width="9.61" height="20.80" fill="#ebe8eb"/><rect x="1446.93" y="812.70" width="9.61" height="20.80" fill="#ebe8eb"/><rect x="1480.57" y="812.70" width="9.61" height="20.80" fill="#ebe8eb"/><rect x="1514.20" y="812.70" width="9.61" height="20.80" fill="#ebe8eb"/><rect x="1547.84" y="812.70" width="9.61" height="20.80" fill="#ebe8eb"/><rect x="1581.47" y="812.70" width="9.61" height="20.80" fill="#ebe8eb"/><rect x="1615.11" y="812.70" width="9.61" height="20.80" fill="#ebe8eb"/><rect x="1648.74" y="812.70" width="9.61" height="20.80" fill="#ebe8eb"/><rect x="1682.38" y="812.70" width="9.61" height="20.80" fill="#ebe8eb"/><rect x="1716.01" y="812.70" width="9.61" height="20.80" fill="#ebe8eb"/><rect x="1749.64" y="812.70" width="9.61" height="20.80" fill="#ebe8eb"/><rect x="1783.28" y="812.70" width="9.61" height="20.80" fill="#ebe8eb"/><rect x="1816.91" y="812.70" width="9.61" height="20.80" fill="#ebe8eb"/><rect x="1850.55" y="812.70" width="9.61" height="20.80" fill="#ebe8eb"/><rect x="1884.18" y="812.70" width="9.61" height="20.80" fill="#ebe8eb"/><rect x="745.40" y="812.70" width="4.80" height="20.80" fill="#f3c300"/><rect x="673.32" y="836.70" width="9.61" height="20.80" fill="#ebe8eb"/><rect x="706.96" y="836.70" width="9.61" height="20.80" fill="#ebe8eb"/><rect x="740.59" y="836.70" width="9.61" height="20.80" fill="#ebe8eb"/><rect x="774.23" y="836.70" width="9.61" height="20.80" fill="#ebe8eb"/><rect x="807.86" y="836.70" width="9.61" height="20.80" fill="#ebe8eb"/><rect x="841.50" y="836.70" width="9.61" height="20.80" fill="#ebe8eb"/><rect x="875.13" y="836.70" width="9.61" height="20.80" fill="#ebe8eb"/><rect x="908.77" y="836.70" width="9.61" height="20.80" fill="#ebe8eb"/><rect x="942.40" y="836.70" width="9.61" height="20.80" fill="#ebe8eb"/><rect x="976.04" y="836.70" width="9.61" height="20.80" fill="#ebe8eb"/><rect x="1009.67" y="836.70" width="9.61" height="20.80" fill="#ebe8eb"/><rect x="1043.31" y="836.70" width="9.61" height="20.80" fill="#ebe8eb"/><rect x="1076.94" y="836.70" width="9.61" height="20.80" fill="#ebe8eb"/><rect x="1110.58" y="836.70" width="9.61" height="20.80" fill="#ebe8eb"/><rect x="1144.21" y="836.70" width="9.61" height="20.80" fill="#ebe8eb"/><rect x="1177.85" y="836.70" width="9.61" height="20.80" fill="#ebe8eb"/><rect x="1211.48" y="836.70" width="9.61" height="20.80" fill="#ebe8eb"/><rect x="1245.12" y="836.70" width="9.61" height="20.80" fill="#ebe8eb"/><rect x="1278.75" y="836.70" width="9.61" height="20.80" fill="#ebe8eb"/><rect x="1312.39" y="836.70" width="9.61" height="20.80" fill="#ebe8eb"/><rect x="1346.02" y="836.70" width="9.61" height="20.80" fill="#ebe8eb"/><rect x="1379.66" y="836.70" width="9.61" height="20.80" fill="#ebe8eb"/><rect x="1413.29" y="836.70" width="9.61" height="20.80" fill="#ebe8eb"/><rect x="1446.93" y="836.70" width="9.61" height="20.80" fill="#ebe8eb"/><rect x="1480.57" y="836.70" width="9.61" height="20.80" fill="#ebe8eb"/><rect x="1514.20" y="836.70" width="9.61" height="20.80" fill="#ebe8eb"/><rect x="1547.84" y="836.70" width="9.61" height="20.80" fill="#ebe8eb"/><rect x="1581.47" y="836.70" width="9.61" height="20.80" fill="#ebe8eb"/><rect x="1615.11" y="836.70" width="9.61" height="20.80" fill="#ebe8eb"/><rect x="1648.74" y="836.70" width="9.61" height="20.80" fill="#ebe8eb"/><rect x="1682.38" y="836.70" width="9.61" height="20.80" fill="#ebe8eb"/><rect x="1716.01" y="836.70" width="9.61" height="20.80" fill="#ebe8eb"/><rect x="1749.64" y="836.70" width="9.61" height="20.80" fill="#ebe8eb"/><rect x="1783.28" y="836.70" width="9.61" height="20.80" fill="#ebe8eb"/><rect x="1816.91" y="836.70" width="9.61" height="20.80" fill="#ebe8eb"/><rect x="1850.55" y="836.70" width="9.61" height="20.80" fill="#ebe8eb"/><rect x="1884.18" y="836.70" width="9.61" height="20.80" fill="#ebe8eb"/><rect x="745.40" y="836.70" width="4.80" height="20.80" fill="#f3c300"/><rect x="673.32" y="860.70" width="9.61" height="20.80" fill="#ebe8eb"/><rect x="706.96" y="860.70" width="9.61" height="20.80" fill="#ebe8eb"/><rect x="740.59" y="860.70" width="9.61" height="20.80" fill="#ebe8eb"/><rect x="774.23" y="860.70" width="9.61" height="20.80" fill="#ebe8eb"/><rect x="807.86" y="860.70" width="9.61" height="20.80" fill="#ebe8eb"/><rect x="841.50" y="860.70" width="9.61" height="20.80" fill="#ebe8eb"/><rect x="875.13" y="860.70" width="9.61" height="20.80" fill="#ebe8eb"/><rect x="908.77" y="860.70" width="9.61" height="20.80" fill="#ebe8eb"/><rect x="942.40" y="860.70" width="9.61" height="20.80" fill="#ebe8eb"/><rect x="976.04" y="860.70" width="9.61" height="20.80" fill="#ebe8eb"/><rect x="1009.67" y="860.70" width="9.61" height="20.80" fill="#ebe8eb"/><rect x="1043.31" y="860.70" width="9.61" height="20.80" fill="#ebe8eb"/><rect x="1076.94" y="860.70" width="9.61" height="20.80" fill="#ebe8eb"/><rect x="1110.58" y="860.70" width="9.61" height="20.80" fill="#ebe8eb"/><rect x="1144.21" y="860.70" width="9.61" height="20.80" fill="#ebe8eb"/><rect x="1177.85" y="860.70" width="9.61" height="20.80" fill="#ebe8eb"/><rect x="1211.48" y="860.70" width="9.61" height="20.80" fill="#ebe8eb"/><rect x="1245.12" y="860.70" width="9.61" height="20.80" fill="#ebe8eb"/><rect x="1278.75" y="860.70" width="9.61" height="20.80" fill="#ebe8eb"/><rect x="1312.39" y="860.70" width="9.61" height="20.80" fill="#ebe8eb"/><rect x="1346.02" y="860.70" width="9.61" height="20.80" fill="#ebe8eb"/><rect x="1379.66" y="860.70" width="9.61" height="20.80" fill="#ebe8eb"/><rect x="1413.29" y="860.70" width="9.61" height="20.80" fill="#ebe8eb"/><rect x="1446.93" y="860.70" width="9.61" height="20.80" fill="#ebe8eb"/><rect x="1480.57" y="860.70" width="9.61" height="20.80" fill="#ebe8eb"/><rect x="1514.20" y="860.70" width="9.61" height="20.80" fill="#ebe8eb"/><rect x="1547.84" y="860.70" width="9.61" height="20.80" fill="#ebe8eb"/><rect x="1581.47" y="860.70" width="9.61" height="20.80" fill="#ebe8eb"/><rect x="1615.11" y="860.70" width="9.61" height="20.80" fill="#ebe8eb"/><rect x="1648.74" y="860.70" width="9.61" height="20.80" fill="#ebe8eb"/><rect x="1682.38" y="860.70" width="9.61" height="20.80" fill="#ebe8eb"/><rect x="1716.01" y="860.70" width="9.61" height="20.80" fill="#ebe8eb"/><rect x="1749.64" y="860.70" width="9.61" height="20.80" fill="#ebe8eb"/><rect x="1783.28" y="860.70" width="9.61" height="20.80" fill="#ebe8eb"/><rect x="1816.91" y="860.70" width="9.61" height="20.80" fill="#ebe8eb"/><rect x="1850.55" y="860.70" width="9.61" height="20.80" fill="#ebe8eb"/><rect x="1884.18" y="860.70" width="9.61" height="20.80" fill="#ebe8eb"/><rect x="745.40" y="860.70" width="4.80" height="20.80" fill="#f3c300"/><rect x="673.32" y="884.70" width="9.61" height="20.00" fill="#ebe8eb"/><rect x="706.96" y="884.70" width="9.61" height="20.00" fill="#ebe8eb"/><rect x="740.59" y="884.70" width="9.61" height="20.00" fill="#ebe8eb"/><rect x="774.23" y="884.70" width="9.61" height="20.00" fill="#ebe8eb"/><rect x="807.86" y="884.70" width="9.61" height="20.00" fill="#ebe8eb"/><rect x="841.50" y="884.70" width="9.61" height="20.00" fill="#ebe8eb"/><rect x="875.13" y="884.70" width="9.61" height="20.00" fill="#ebe8eb"/><rect x="908.77" y="884.70" width="9.61" height="20.00" fill="#ebe8eb"/><rect x="942.40" y="884.70" width="9.61" height="20.00" fill="#ebe8eb"/><rect x="976.04" y="884.70" width="9.61" height="20.00" fill="#ebe8eb"/><rect x="1009.67" y="884.70" width="9.61" height="20.00" fill="#ebe8eb"/><rect x="1043.31" y="884.70" width="9.61" height="20.00" fill="#ebe8eb"/><rect x="1076.94" y="884.70" width="9.61" height="20.00" fill="#ebe8eb"/><rect x="1110.58" y="884.70" width="9.61" height="20.00" fill="#ebe8eb"/><rect x="1144.21" y="884.70" width="9.61" height="20.00" fill="#ebe8eb"/><rect x="1177.85" y="884.70" width="9.61" height="20.00" fill="#ebe8eb"/><rect x="1211.48" y="884.70" width="9.61" height="20.00" fill="#ebe8eb"/><rect x="1245.12" y="884.70" width="9.61" height="20.00" fill="#ebe8eb"/><rect x="1278.75" y="884.70" width="9.61" height="20.00" fill="#ebe8eb"/><rect x="1312.39" y="884.70" width="9.61" height="20.00" fill="#ebe8eb"/><rect x="1346.02" y="884.70" width="9.61" height="20.00" fill="#ebe8eb"/><rect x="1379.66" y="884.70" width="9.61" height="20.00" fill="#ebe8eb"/><rect x="1413.29" y="884.70" width="9.61" height="20.00" fill="#ebe8eb"/><rect x="1446.93" y="884.70" width="9.61" height="20.00" fill="#ebe8eb"/><rect x="1480.57" y="884.70" width="9.61" height="20.00" fill="#ebe8eb"/><rect x="1514.20" y="884.70" width="9.61" height="20.00" fill="#ebe8eb"/><rect x="1547.84" y="884.70" width="9.61" height="20.00" fill="#ebe8eb"/><rect x="1581.47" y="884.70" width="9.61" height="20.00" fill="#ebe8eb"/><rect x="1615.11" y="884.70" width="9.61" height="20.00" fill="#ebe8eb"/><rect x="1648.74" y="884.70" width="9.61" height="20.00" fill="#ebe8eb"/><rect x="1682.38" y="884.70" width="9.61" height="20.00" fill="#ebe8eb"/><rect x="1716.01" y="884.70" width="9.61" height="20.00" fill="#ebe8eb"/><rect x="1749.64" y="884.70" width="9.61" height="20.00" fill="#ebe8eb"/><rect x="1783.28" y="884.70" width="9.61" height="20.00" fill="#ebe8eb"/><rect x="1816.91" y="884.70" width="9.61" height="20.00" fill="#ebe8eb"/><rect x="1850.55" y="884.70" width="9.61" height="20.00" fill="#ebe8eb"/><rect x="1884.18" y="884.70" width="9.61" height="20.00" fill="#ebe8eb"/><rect x="745.40" y="884.70" width="4.80" height="20.00" fill="#f3c300"/><rect x="673.32" y="907.70" width="9.61" height="20.00" fill="#ebe8eb"/><rect x="706.96" y="907.70" width="9.61" height="20.00" fill="#ebe8eb"/><rect x="740.59" y="907.70" width="9.61" height="20.00" fill="#ebe8eb"/><rect x="774.23" y="907.70" width="9.61" height="20.00" fill="#ebe8eb"/><rect x="807.86" y="907.70" width="9.61" height="20.00" fill="#ebe8eb"/><rect x="841.50" y="907.70" width="9.61" height="20.00" fill="#ebe8eb"/><rect x="875.13" y="907.70" width="9.61" height="20.00" fill="#ebe8eb"/><rect x="908.77" y="907.70" width="9.61" height="20.00" fill="#ebe8eb"/><rect x="942.40" y="907.70" width="9.61" height="20.00" fill="#ebe8eb"/><rect x="976.04" y="907.70" width="9.61" height="20.00" fill="#ebe8eb"/><rect x="1009.67" y="907.70" width="9.61" height="20.00" fill="#ebe8eb"/><rect x="1043.31" y="907.70" width="9.61" height="20.00" fill="#ebe8eb"/><rect x="1076.94" y="907.70" width="9.61" height="20.00" fill="#ebe8eb"/><rect x="1110.58" y="907.70" width="9.61" height="20.00" fill="#ebe8eb"/><rect x="1144.21" y="907.70" width="9.61" height="20.00" fill="#ebe8eb"/><rect x="1177.85" y="907.70" width="9.61" height="20.00" fill="#ebe8eb"/><rect x="1211.48" y="907.70" width="9.61" height="20.00" fill="#ebe8eb"/><rect x="1245.12" y="907.70" width="9.61" height="20.00" fill="#ebe8eb"/><rect x="1278.75" y="907.70" width="9.61" height="20.00" fill="#ebe8eb"/><rect x="1312.39" y="907.70" width="9.61" height="20.00" fill="#ebe8eb"/><rect x="1346.02" y="907.70" width="9.61" height="20.00" fill="#ebe8eb"/><rect x="1379.66" y="907.70" width="9.61" height="20.00" fill="#ebe8eb"/><rect x="1413.29" y="907.70" width="9.61" height="20.00" fill="#ebe8eb"/><rect x="1446.93" y="907.70" width="9.61" height="20.00" fill="#ebe8eb"/><rect x="1480.57" y="907.70" width="9.61" height="20.00" fill="#ebe8eb"/><rect x="1514.20" y="907.70" width="9.61" height="20.00" fill="#ebe8eb"/><rect x="1547.84" y="907.70" width="9.61" height="20.00" fill="#ebe8eb"/><rect x="1581.47" y="907.70" width="9.61" height="20.00" fill="#ebe8eb"/><rect x="1615.11" y="907.70" width="9.61" height="20.00" fill="#ebe8eb"/><rect x="1648.74" y="907.70" width="9.61" height="20.00" fill="#ebe8eb"/><rect x="1682.38" y="907.70" width="9.61" height="20.00" fill="#ebe8eb"/><rect x="1716.01" y="907.70" width="9.61" height="20.00" fill="#ebe8eb"/><rect x="1749.64" y="907.70" width="9.61" height="20.00" fill="#ebe8eb"/><rect x="1783.28" y="907.70" width="9.61" height="20.00" fill="#ebe8eb"/><rect x="1816.91" y="907.70" width="9.61" height="20.00" fill="#ebe8eb"/><rect x="1850.55" y="907.70" width="9.61" height="20.00" fill="#ebe8eb"/><rect x="1884.18" y="907.70" width="9.61" height="20.00" fill="#ebe8eb"/><rect x="745.40" y="907.70" width="4.80" height="20.00" fill="#f3c300"/><rect x="673.32" y="930.70" width="9.61" height="20.00" fill="#ebe8eb"/><rect x="706.96" y="930.70" width="9.61" height="20.00" fill="#ebe8eb"/><rect x="740.59" y="930.70" width="9.61" height="20.00" fill="#ebe8eb"/><rect x="774.23" y="930.70" width="9.61" height="20.00" fill="#ebe8eb"/><rect x="807.86" y="930.70" width="9.61" height="20.00" fill="#ebe8eb"/><rect x="841.50" y="930.70" width="9.61" height="20.00" fill="#ebe8eb"/><rect x="875.13" y="930.70" width="9.61" height="20.00" fill="#ebe8eb"/><rect x="908.77" y="930.70" width="9.61" height="20.00" fill="#ebe8eb"/><rect x="942.40" y="930.70" width="9.61" height="20.00" fill="#ebe8eb"/><rect x="976.04" y="930.70" width="9.61" height="20.00" fill="#ebe8eb"/><rect x="1009.67" y="930.70" width="9.61" height="20.00" fill="#ebe8eb"/><rect x="1043.31" y="930.70" width="9.61" height="20.00" fill="#ebe8eb"/><rect x="1076.94" y="930.70" width="9.61" height="20.00" fill="#ebe8eb"/><rect x="1110.58" y="930.70" width="9.61" height="20.00" fill="#ebe8eb"/><rect x="1144.21" y="930.70" width="9.61" height="20.00" fill="#ebe8eb"/><rect x="1177.85" y="930.70" width="9.61" height="20.00" fill="#ebe8eb"/><rect x="1211.48" y="930.70" width="9.61" height="20.00" fill="#ebe8eb"/><rect x="1245.12" y="930.70" width="9.61" height="20.00" fill="#ebe8eb"/><rect x="1278.75" y="930.70" width="9.61" height="20.00" fill="#ebe8eb"/><rect x="1312.39" y="930.70" width="9.61" height="20.00" fill="#ebe8eb"/><rect x="1346.02" y="930.70" width="9.61" height="20.00" fill="#ebe8eb"/><rect x="1379.66" y="930.70" width="9.61" height="20.00" fill="#ebe8eb"/><rect x="1413.29" y="930.70" width="9.61" height="20.00" fill="#ebe8eb"/><rect x="1446.93" y="930.70" width="9.61" height="20.00" fill="#ebe8eb"/><rect x="1480.57" y="930.70" width="9.61" height="20.00" fill="#ebe8eb"/><rect x="1514.20" y="930.70" width="9.61" height="20.00" fill="#ebe8eb"/><rect x="1547.84" y="930.70" width="9.61" height="20.00" fill="#ebe8eb"/><rect x="1581.47" y="930.70" width="9.61" height="20.00" fill="#ebe8eb"/><rect x="1615.11" y="930.70" width="9.61" height="20.00" fill="#ebe8eb"/><rect x="1648.74" y="930.70" width="9.61" height="20.00" fill="#ebe8eb"/><rect x="1682.38" y="930.70" width="9.61" height="20.00" fill="#ebe8eb"/><rect x="1716.01" y="930.70" width="9.61" height="20.00" fill="#ebe8eb"/><rect x="1749.64" y="930.70" width="9.61" height="20.00" fill="#ebe8eb"/><rect x="1783.28" y="930.70" width="9.61" height="20.00" fill="#ebe8eb"/><rect x="1816.91" y="930.70" width="9.61" height="20.00" fill="#ebe8eb"/><rect x="1850.55" y="930.70" width="9.61" height="20.00" fill="#ebe8eb"/><rect x="1884.18" y="930.70" width="9.61" height="20.00" fill="#ebe8eb"/><rect x="745.40" y="930.70" width="4.80" height="20.00" fill="#f3c300"/><rect x="673.32" y="953.70" width="9.61" height="20.00" fill="#ebe8eb"/><rect x="706.96" y="953.70" width="9.61" height="20.00" fill="#ebe8eb"/><rect x="740.59" y="953.70" width="9.61" height="20.00" fill="#ebe8eb"/><rect x="774.23" y="953.70" width="9.61" height="20.00" fill="#ebe8eb"/><rect x="807.86" y="953.70" width="9.61" height="20.00" fill="#ebe8eb"/><rect x="841.50" y="953.70" width="9.61" height="20.00" fill="#ebe8eb"/><rect x="875.13" y="953.70" width="9.61" height="20.00" fill="#ebe8eb"/><rect x="908.77" y="953.70" width="9.61" height="20.00" fill="#ebe8eb"/><rect x="942.40" y="953.70" width="9.61" height="20.00" fill="#ebe8eb"/><rect x="976.04" y="953.70" width="9.61" height="20.00" fill="#ebe8eb"/><rect x="1009.67" y="953.70" width="9.61" height="20.00" fill="#ebe8eb"/><rect x="1043.31" y="953.70" width="9.61" height="20.00" fill="#ebe8eb"/><rect x="1076.94" y="953.70" width="9.61" height="20.00" fill="#ebe8eb"/><rect x="1110.58" y="953.70" width="9.61" height="20.00" fill="#ebe8eb"/><rect x="1144.21" y="953.70" width="9.61" height="20.00" fill="#ebe8eb"/><rect x="1177.85" y="953.70" width="9.61" height="20.00" fill="#ebe8eb"/><rect x="1211.48" y="953.70" width="9.61" height="20.00" fill="#ebe8eb"/><rect x="1245.12" y="953.70" width="9.61" height="20.00" fill="#ebe8eb"/><rect x="1278.75" y="953.70" width="9.61" height="20.00" fill="#ebe8eb"/><rect x="1312.39" y="953.70" width="9.61" height="20.00" fill="#ebe8eb"/><rect x="1346.02" y="953.70" width="9.61" height="20.00" fill="#ebe8eb"/><rect x="1379.66" y="953.70" width="9.61" height="20.00" fill="#ebe8eb"/><rect x="1413.29" y="953.70" width="9.61" height="20.00" fill="#ebe8eb"/><rect x="1446.93" y="953.70" width="9.61" height="20.00" fill="#ebe8eb"/><rect x="1480.57" y="953.70" width="9.61" height="20.00" fill="#ebe8eb"/><rect x="1514.20" y="953.70" width="9.61" height="20.00" fill="#ebe8eb"/><rect x="1547.84" y="953.70" width="9.61" height="20.00" fill="#ebe8eb"/><rect x="1581.47" y="953.70" width="9.61" height="20.00" fill="#ebe8eb"/><rect x="1615.11" y="953.70" width="9.61" height="20.00" fill="#ebe8eb"/><rect x="1648.74" y="953.70" width="9.61" height="20.00" fill="#ebe8eb"/><rect x="1682.38" y="953.70" width="9.61" height="20.00" fill="#ebe8eb"/><rect x="1716.01" y="953.70" width="9.61" height="20.00" fill="#ebe8eb"/><rect x="1749.64" y="953.70" width="9.61" height="20.00" fill="#ebe8eb"/><rect x="1783.28" y="953.70" width="9.61" height="20.00" fill="#ebe8eb"/><rect x="1816.91" y="953.70" width="9.61" height="20.00" fill="#ebe8eb"/><rect x="1850.55" y="953.70" width="9.61" height="20.00" fill="#ebe8eb"/><rect x="1884.18" y="953.70" width="9.61" height="20.00" fill="#ebe8eb"/><rect x="745.40" y="953.70" width="4.80" height="20.00" fill="#f3c300"/><rect x="673.32" y="976.70" width="9.61" height="20.00" fill="#ebe8eb"/><rect x="706.96" y="976.70" width="9.61" height="20.00" fill="#ebe8eb"/><rect x="740.59" y="976.70" width="9.61" height="20.00" fill="#ebe8eb"/><rect x="774.23" y="976.70" width="9.61" height="20.00" fill="#ebe8eb"/><rect x="807.86" y="976.70" width="9.61" height="20.00" fill="#ebe8eb"/><rect x="841.50" y="976.70" width="9.61" height="20.00" fill="#ebe8eb"/><rect x="875.13" y="976.70" width="9.61" height="20.00" fill="#ebe8eb"/><rect x="908.77" y="976.70" width="9.61" height="20.00" fill="#ebe8eb"/><rect x="942.40" y="976.70" width="9.61" height="20.00" fill="#ebe8eb"/><rect x="976.04" y="976.70" width="9.61" height="20.00" fill="#ebe8eb"/><rect x="1009.67" y="976.70" width="9.61" height="20.00" fill="#ebe8eb"/><rect x="1043.31" y="976.70" width="9.61" height="20.00" fill="#ebe8eb"/><rect x="1076.94" y="976.70" width="9.61" height="20.00" fill="#ebe8eb"/><rect x="1110.58" y="976.70" width="9.61" height="20.00" fill="#ebe8eb"/><rect x="1144.21" y="976.70" width="9.61" height="20.00" fill="#ebe8eb"/><rect x="1177.85" y="976.70" width="9.61" height="20.00" fill="#ebe8eb"/><rect x="1211.48" y="976.70" width="9.61" height="20.00" fill="#ebe8eb"/><rect x="1245.12" y="976.70" width="9.61" height="20.00" fill="#ebe8eb"/><rect x="1278.75" y="976.70" width="9.61" height="20.00" fill="#ebe8eb"/><rect x="1312.39" y="976.70" width="9.61" height="20.00" fill="#ebe8eb"/><rect x="1346.02" y="976.70" width="9.61" height="20.00" fill="#ebe8eb"/><rect x="1379.66" y="976.70" width="9.61" height="20.00" fill="#ebe8eb"/><rect x="1413.29" y="976.70" width="9.61" height="20.00" fill="#ebe8eb"/><rect x="1446.93" y="976.70" width="9.61" height="20.00" fill="#ebe8eb"/><rect x="1480.57" y="976.70" width="9.61" height="20.00" fill="#ebe8eb"/><rect x="1514.20" y="976.70" width="9.61" height="20.00" fill="#ebe8eb"/><rect x="1547.84" y="976.70" width="9.61" height="20.00" fill="#ebe8eb"/><rect x="1581.47" y="976.70" width="9.61" height="20.00" fill="#ebe8eb"/><rect x="1615.11" y="976.70" width="9.61" height="20.00" fill="#ebe8eb"/><rect x="1648.74" y="976.70" width="9.61" height="20.00" fill="#ebe8eb"/><rect x="1682.38" y="976.70" width="9.61" height="20.00" fill="#ebe8eb"/><rect x="1716.01" y="976.70" width="9.61" height="20.00" fill="#ebe8eb"/><rect x="1749.64" y="976.70" width="9.61" height="20.00" fill="#ebe8eb"/><rect x="1783.28" y="976.70" width="9.61" height="20.00" fill="#ebe8eb"/><rect x="1816.91" y="976.70" width="9.61" height="20.00" fill="#ebe8eb"/><rect x="1850.55" y="976.70" width="9.61" height="20.00" fill="#ebe8eb"/><rect x="1884.18" y="976.70" width="9.61" height="20.00" fill="#ebe8eb"/><rect x="745.40" y="976.70" width="4.80" height="20.00" fill="#f3c300"/><rect x="673.10" y="524.70" width="4.90" height="20.80" fill="#ff0000"/><rect x="673.10" y="572.70" width="326.70" height="20.80" fill="#1c2007"/><rect x="999.80" y="572.70" width="268.90" height="20.80" fill="#548235"/><rect x="673.10" y="596.70" width="163.20" height="20.80" fill="#1c2007"/><rect x="836.30" y="596.70" width="163.50" height="20.80" fill="#9edb08"/><rect x="908.80" y="620.70" width="43.20" height="20.80" fill="#1c2007"/><rect x="952.00" y="620.70" width="4.30" height="20.80" fill="#9edb08"/><rect x="942.20" y="668.70" width="186.90" height="20.80" fill="#9edb08"/><rect x="1124.40" y="692.70" width="139.30" height="20.80" fill="#9edb08"/><rect x="1191.50" y="740.70" width="86.60" height="20.80" fill="#548235"/><rect x="1191.50" y="764.70" width="86.60" height="20.80" fill="#9edb08"/><rect x="1273.40" y="812.70" width="288.10" height="20.80" fill="#548235"/><defs><radialGradient id="okg" cx="0.4" cy="0.35" r="0.7"><stop offset="0" stop-color="#8fd49a"/><stop offset="1" stop-color="#45a85c"/></radialGradient><radialGradient id="nog" cx="0.4" cy="0.35" r="0.7"><stop offset="0" stop-color="#f7a0a0"/><stop offset="1" stop-color="#e05a5a"/></radialGradient></defs><text x="30.1" y="539.9" font-size="12.3" fill="#111" font-weight="bold" textLength="10.5" lengthAdjust="spacingAndGlyphs">1.</text><text x="72.4" y="539.9" font-size="12.3" fill="#111" font-weight="bold" textLength="44.0" lengthAdjust="spacingAndGlyphs">Kick-Off</text><text x="316.7" y="539.9" font-size="12.3" fill="#111" font-weight="bold" text-anchor="middle" textLength="25.0" lengthAdjust="spacingAndGlyphs">PrTe</text><path d="M344 524.5 h3.5 l-3.5 3.5 z" fill="#1e8a3a"/><text x="358.0" y="539.9" font-size="12.3" fill="#111" font-weight="bold" textLength="50.5" lengthAdjust="spacingAndGlyphs">25.01.14</text><text x="453.5" y="539.9" font-size="12.3" fill="#ee1111" font-weight="bold" text-anchor="middle" textLength="11.6" lengthAdjust="spacingAndGlyphs">M</text><text x="594.9" y="539.9" font-size="12.3" fill="#111" font-weight="bold" text-anchor="end" textLength="31.1" lengthAdjust="spacingAndGlyphs">100%</text><circle cx="639.1" cy="536.1" r="6" fill="url(#okg)" stroke="#3f9a55" stroke-width="0.9"/><path d="M636.1 536.1 l2.2 2.3 l4 -4.5" fill="none" stroke="#ffffff" stroke-width="1.6"/><text x="30.1" y="587.9" font-size="12.3" fill="#111" font-weight="bold" textLength="10.5" lengthAdjust="spacingAndGlyphs">2.</text><text x="72.4" y="587.9" font-size="12.3" fill="#111" font-weight="bold" textLength="43.0" lengthAdjust="spacingAndGlyphs">Analyse</text><text x="316.7" y="587.9" font-size="12.3" fill="#111" font-weight="bold" text-anchor="middle" textLength="25.0" lengthAdjust="spacingAndGlyphs">PrTe</text><path d="M344 572.5 h3.5 l-3.5 3.5 z" fill="#1e8a3a"/><text x="358.0" y="587.9" font-size="12.3" fill="#111" font-weight="bold" textLength="50.5" lengthAdjust="spacingAndGlyphs">25.01.14</text><text x="453.4" y="587.9" font-size="12.3" fill="#111" font-weight="bold" text-anchor="middle" textLength="26.4" lengthAdjust="spacingAndGlyphs">89 D</text><text x="492.4" y="587.9" font-size="12.3" fill="#111" font-weight="bold" textLength="50.7" lengthAdjust="spacingAndGlyphs">28.05.14</text><text x="594.9" y="587.9" font-size="12.3" fill="#111" font-weight="bold" text-anchor="end" textLength="23.9" lengthAdjust="spacingAndGlyphs">55%</text><circle cx="639.1" cy="584.1" r="6" fill="url(#okg)" stroke="#3f9a55" stroke-width="0.9"/><path d="M636.1 584.1 l2.2 2.3 l4 -4.5" fill="none" stroke="#ffffff" stroke-width="1.6"/><text x="30.1" y="611.9" font-size="12.3" fill="#111" font-weight="bold" textLength="24.8" lengthAdjust="spacingAndGlyphs">2.01</text><text x="72.4" y="611.9" font-size="12.3" fill="#111" font-weight="bold" textLength="84.2" lengthAdjust="spacingAndGlyphs">Zahlen Analyse</text><text x="316.7" y="611.9" font-size="12.3" fill="#111" font-weight="bold" text-anchor="middle" textLength="35.1" lengthAdjust="spacingAndGlyphs">Pers.1</text><path d="M344 596.5 h3.5 l-3.5 3.5 z" fill="#1e8a3a"/><text x="358.0" y="611.9" font-size="12.3" fill="#111" font-weight="bold" textLength="50.5" lengthAdjust="spacingAndGlyphs">25.01.14</text><text x="453.4" y="611.9" font-size="12.3" fill="#111" font-weight="bold" text-anchor="middle" textLength="26.4" lengthAdjust="spacingAndGlyphs">49 D</text><text x="492.4" y="611.9" font-size="12.3" fill="#111" font-weight="bold" textLength="50.7" lengthAdjust="spacingAndGlyphs">02.04.14</text><text x="594.9" y="611.9" font-size="12.3" fill="#111" font-weight="bold" text-anchor="end" textLength="23.9" lengthAdjust="spacingAndGlyphs">50%</text><circle cx="639.1" cy="608.1" r="6" fill="url(#okg)" stroke="#3f9a55" stroke-width="0.9"/><path d="M636.1 608.1 l2.2 2.3 l4 -4.5" fill="none" stroke="#ffffff" stroke-width="1.6"/><text x="30.1" y="635.9" font-size="12.3" fill="#111" font-weight="bold" textLength="24.8" lengthAdjust="spacingAndGlyphs">2.02</text><text x="72.4" y="635.9" font-size="12.3" fill="#111" font-weight="bold" textLength="101.2" lengthAdjust="spacingAndGlyphs">Zahlen auswerten</text><text x="316.7" y="635.9" font-size="12.3" fill="#111" font-weight="bold" text-anchor="middle" textLength="35.1" lengthAdjust="spacingAndGlyphs">Pers.2</text><path d="M344 620.5 h3.5 l-3.5 3.5 z" fill="#1e8a3a"/><text x="358.0" y="635.9" font-size="12.3" fill="#111" font-weight="bold" textLength="50.5" lengthAdjust="spacingAndGlyphs">15.03.14</text><text x="453.4" y="635.9" font-size="12.3" fill="#111" font-weight="bold" text-anchor="middle" textLength="18.8" lengthAdjust="spacingAndGlyphs">7 D</text><text x="492.4" y="635.9" font-size="12.3" fill="#111" font-weight="bold" textLength="50.7" lengthAdjust="spacingAndGlyphs">24.03.14</text><text x="594.9" y="635.9" font-size="12.3" fill="#111" font-weight="bold" text-anchor="end" textLength="23.9" lengthAdjust="spacingAndGlyphs">90%</text><circle cx="639.1" cy="632.1" r="6" fill="url(#okg)" stroke="#3f9a55" stroke-width="0.9"/><path d="M636.1 632.1 l2.2 2.3 l4 -4.5" fill="none" stroke="#ffffff" stroke-width="1.6"/><text x="30.1" y="659.9" font-size="12.3" fill="#111" font-weight="bold" textLength="24.8" lengthAdjust="spacingAndGlyphs">2.03</text><text x="72.4" y="659.9" font-size="12.3" fill="#111" font-weight="bold" textLength="110.9" lengthAdjust="spacingAndGlyphs">Analyse querprüfen</text><text x="316.7" y="659.9" font-size="12.3" fill="#111" font-weight="bold" text-anchor="middle" textLength="27.3" lengthAdjust="spacingAndGlyphs">KeTe</text><path d="M344 644.5 h3.5 l-3.5 3.5 z" fill="#1e8a3a"/><text x="358.0" y="659.9" font-size="12.3" fill="#111" font-weight="bold" textLength="50.5" lengthAdjust="spacingAndGlyphs">17.12.13</text><text x="453.4" y="659.9" font-size="12.3" fill="#111" font-weight="bold" text-anchor="middle" textLength="18.8" lengthAdjust="spacingAndGlyphs">6 D</text><text x="492.4" y="659.9" font-size="12.3" fill="#111" font-weight="bold" textLength="50.7" lengthAdjust="spacingAndGlyphs">24.12.13</text><text x="594.9" y="659.9" font-size="12.3" fill="#111" font-weight="bold" text-anchor="end" textLength="23.9" lengthAdjust="spacingAndGlyphs">20%</text><circle cx="639.1" cy="656.1" r="6" fill="url(#nog)" stroke="#c84a4a" stroke-width="0.9"/><path d="M636.6 653.6 l5 5 M641.6 653.6 l-5 5" fill="none" stroke="#ffffff" stroke-width="1.5"/><text x="30.1" y="683.9" font-size="12.3" fill="#111" font-weight="bold" textLength="24.8" lengthAdjust="spacingAndGlyphs">2.04</text><text x="72.4" y="683.9" font-size="12.3" fill="#111" font-weight="bold" textLength="77.9" lengthAdjust="spacingAndGlyphs">Zahlen prüfen</text><text x="316.7" y="683.9" font-size="12.3" fill="#111" font-weight="bold" text-anchor="middle" textLength="35.1" lengthAdjust="spacingAndGlyphs">Pers.2</text><path d="M344 668.5 h3.5 l-3.5 3.5 z" fill="#1e8a3a"/><text x="358.0" y="683.9" font-size="12.3" fill="#111" font-weight="bold" textLength="50.5" lengthAdjust="spacingAndGlyphs">22.03.14</text><text x="453.4" y="683.9" font-size="12.3" fill="#111" font-weight="bold" text-anchor="middle" textLength="26.4" lengthAdjust="spacingAndGlyphs">28 D</text><text x="492.4" y="683.9" font-size="12.3" fill="#111" font-weight="bold" textLength="50.7" lengthAdjust="spacingAndGlyphs">29.04.14</text><text x="594.9" y="683.9" font-size="12.3" fill="#111" font-weight="bold" text-anchor="end" textLength="16.9" lengthAdjust="spacingAndGlyphs">0%</text><circle cx="639.1" cy="680.1" r="6" fill="url(#okg)" stroke="#3f9a55" stroke-width="0.9"/><path d="M636.1 680.1 l2.2 2.3 l4 -4.5" fill="none" stroke="#ffffff" stroke-width="1.6"/><text x="30.1" y="707.9" font-size="12.3" fill="#111" font-weight="bold" textLength="24.8" lengthAdjust="spacingAndGlyphs">2.05</text><text x="72.4" y="707.9" font-size="12.3" fill="#111" font-weight="bold" textLength="101.8" lengthAdjust="spacingAndGlyphs">Abschluss Analyse</text><text x="316.7" y="707.9" font-size="12.3" fill="#111" font-weight="bold" text-anchor="middle" textLength="35.1" lengthAdjust="spacingAndGlyphs">Pers.1</text><path d="M344 692.5 h3.5 l-3.5 3.5 z" fill="#1e8a3a"/><text x="358.0" y="707.9" font-size="12.3" fill="#111" font-weight="bold" textLength="50.5" lengthAdjust="spacingAndGlyphs">29.04.14</text><text x="453.4" y="707.9" font-size="12.3" fill="#111" font-weight="bold" text-anchor="middle" textLength="26.4" lengthAdjust="spacingAndGlyphs">21 D</text><text x="492.4" y="707.9" font-size="12.3" fill="#111" font-weight="bold" textLength="50.7" lengthAdjust="spacingAndGlyphs">27.05.14</text><text x="594.9" y="707.9" font-size="12.3" fill="#111" font-weight="bold" text-anchor="end" textLength="16.9" lengthAdjust="spacingAndGlyphs">0%</text><circle cx="639.1" cy="704.1" r="6" fill="url(#okg)" stroke="#3f9a55" stroke-width="0.9"/><path d="M636.1 704.1 l2.2 2.3 l4 -4.5" fill="none" stroke="#ffffff" stroke-width="1.6"/><text x="30.1" y="755.9" font-size="12.3" fill="#111" font-weight="bold" textLength="10.5" lengthAdjust="spacingAndGlyphs">4.</text><text x="72.4" y="755.9" font-size="12.3" fill="#111" font-weight="bold" textLength="72.9" lengthAdjust="spacingAndGlyphs">Grobkonzept</text><text x="316.7" y="755.9" font-size="12.3" fill="#111" font-weight="bold" text-anchor="middle" textLength="35.1" lengthAdjust="spacingAndGlyphs">Pers.1</text><path d="M344 740.5 h3.5 l-3.5 3.5 z" fill="#1e8a3a"/><text x="358.0" y="755.9" font-size="12.3" fill="#111" font-weight="bold" textLength="50.5" lengthAdjust="spacingAndGlyphs">13.05.14</text><text x="453.4" y="755.9" font-size="12.3" fill="#111" font-weight="bold" text-anchor="middle" textLength="26.4" lengthAdjust="spacingAndGlyphs">14 D</text><text x="492.4" y="755.9" font-size="12.3" fill="#111" font-weight="bold" textLength="50.7" lengthAdjust="spacingAndGlyphs">30.05.14</text><text x="594.9" y="755.9" font-size="12.3" fill="#111" font-weight="bold" text-anchor="end" textLength="16.9" lengthAdjust="spacingAndGlyphs">0%</text><circle cx="639.1" cy="752.1" r="6" fill="url(#okg)" stroke="#3f9a55" stroke-width="0.9"/><path d="M636.1 752.1 l2.2 2.3 l4 -4.5" fill="none" stroke="#ffffff" stroke-width="1.6"/><text x="30.1" y="779.9" font-size="12.3" fill="#111" font-weight="bold" textLength="24.8" lengthAdjust="spacingAndGlyphs">4.01</text><text x="72.4" y="779.9" font-size="12.3" fill="#111" font-weight="bold" textLength="124.8" lengthAdjust="spacingAndGlyphs">Zeichnungen erstellen</text><path d="M344 764.5 h3.5 l-3.5 3.5 z" fill="#1e8a3a"/><text x="358.0" y="779.9" font-size="12.3" fill="#111" font-weight="bold" textLength="50.5" lengthAdjust="spacingAndGlyphs">13.05.14</text><text x="453.4" y="779.9" font-size="12.3" fill="#111" font-weight="bold" text-anchor="middle" textLength="26.4" lengthAdjust="spacingAndGlyphs">14 D</text><text x="492.4" y="779.9" font-size="12.3" fill="#111" font-weight="bold" textLength="50.7" lengthAdjust="spacingAndGlyphs">30.05.14</text><text x="594.9" y="779.9" font-size="12.3" fill="#111" font-weight="bold" text-anchor="end" textLength="16.9" lengthAdjust="spacingAndGlyphs">0%</text><circle cx="639.1" cy="776.1" r="6" fill="url(#okg)" stroke="#3f9a55" stroke-width="0.9"/><path d="M636.1 776.1 l2.2 2.3 l4 -4.5" fill="none" stroke="#ffffff" stroke-width="1.6"/><text x="30.1" y="827.9" font-size="12.3" fill="#111" font-weight="bold" textLength="10.5" lengthAdjust="spacingAndGlyphs">4.</text><text x="72.4" y="827.9" font-size="12.3" fill="#111" font-weight="bold" textLength="77.9" lengthAdjust="spacingAndGlyphs">Detailplanung</text><text x="316.7" y="827.9" font-size="12.3" fill="#111" font-weight="bold" text-anchor="middle" textLength="27.3" lengthAdjust="spacingAndGlyphs">KeTe</text><path d="M344 812.5 h3.5 l-3.5 3.5 z" fill="#1e8a3a"/><text x="357.0" y="827.9" font-size="12.3" fill="#111" font-weight="bold" textLength="50.5" lengthAdjust="spacingAndGlyphs">30.05.14</text><text x="453.4" y="827.9" font-size="12.3" fill="#111" font-weight="bold" text-anchor="middle" textLength="26.4" lengthAdjust="spacingAndGlyphs">42 D</text><text x="492.4" y="827.9" font-size="12.3" fill="#111" font-weight="bold" textLength="50.7" lengthAdjust="spacingAndGlyphs">28.07.14</text><circle cx="639.1" cy="824.1" r="6" fill="url(#okg)" stroke="#3f9a55" stroke-width="0.9"/><path d="M636.1 824.1 l2.2 2.3 l4 -4.5" fill="none" stroke="#ffffff" stroke-width="1.6"/><rect x="289.20" y="811.20" width="55.00" height="23.20" fill="none" stroke="#217346" stroke-width="2"/><rect x="345.00" y="817.50" width="15.00" height="16.00" fill="#eeedf0"/><path d="M349.5 824.2h6l-3.0 3.5z" fill="#777"/><rect x="289.50" y="834.50" width="71.50" height="110.00" fill="#f4f3f6" stroke="#222" stroke-width="1"/><rect x="290.00" y="835.10" width="54.10" height="12.70" fill="#3b8fe8"/><text x="293.5" y="845.9" font-size="10.5" fill="#ffffff" textLength="22.5" lengthAdjust="spacingAndGlyphs">KeTe</text><text x="293.5" y="859.6" font-size="10.5" fill="#333" textLength="20.0" lengthAdjust="spacingAndGlyphs">PrLe</text><text x="293.5" y="873.3" font-size="10.5" fill="#333" textLength="21.0" lengthAdjust="spacingAndGlyphs">PrTe</text><text x="293.5" y="887.0" font-size="10.5" fill="#333" textLength="25.0" lengthAdjust="spacingAndGlyphs">Pers.1</text><text x="293.5" y="900.7" font-size="10.5" fill="#333" textLength="25.0" lengthAdjust="spacingAndGlyphs">Pers.2</text><text x="293.5" y="914.4" font-size="10.5" fill="#333" textLength="25.0" lengthAdjust="spacingAndGlyphs">Pers.3</text><text x="293.5" y="928.1" font-size="10.5" fill="#333" textLength="25.0" lengthAdjust="spacingAndGlyphs">Pers.4</text><text x="293.5" y="941.8" font-size="10.5" fill="#333" textLength="25.0" lengthAdjust="spacingAndGlyphs">Pers.5</text><path d="M349.5 845 l2.5 -2.5 l2.5 2.5" fill="none" stroke="#555" stroke-width="1"/><rect x="345.00" y="853.00" width="14.00" height="14.80" fill="#c9c8cb"/><path d="M349.5 934.5 l2.5 2.5 l2.5 -2.5" fill="none" stroke="#555" stroke-width="1"/><text x="40.0" y="968.0" font-size="8" fill="#c8c8c8">20</text><line x1="649.5" y1="178" x2="649.5" y2="988" stroke="#a9a8ab" stroke-width="1"/><line x1="1901" y1="237" x2="1901" y2="988" stroke="#c9c8cb" stroke-width="1"/><rect x="1903.50" y="179.50" width="14.00" height="808.00" fill="#f7f6f9" stroke="#d0cfd2" stroke-width="1"/><path d="M1906 189 l4 -4 l4 4 z" fill="#555"/><rect x="1904.00" y="583.20" width="13.00" height="390.00" fill="#dedbde"/><line x1="1903.5" y1="583.2" x2="1917" y2="583.2" stroke="#c9c6c9" stroke-width="1"/><line x1="1903.5" y1="194.5" x2="1917" y2="194.5" stroke="#d0cfd2" stroke-width="1"/><line x1="1903.5" y1="973.2" x2="1917" y2="973.2" stroke="#d0cfd2" stroke-width="1"/><path d="M1906.5 978 l3.8 3.8 l3.8 -3.8 z" fill="#555"/><rect x="3.00" y="988.50" width="1914.00" height="18.50" fill="#f3f1f4"/><line x1="3" y1="988.5" x2="1917" y2="988.5" stroke="#c6c5c8" stroke-width="1"/><path d="M27 996 l-3 3 l3 3 z" fill="#aaa"/><path d="M45 996 l3 3 l-3 3 z" fill="#888"/><line x1="82.5" y1="990" x2="82.5" y2="1007" stroke="#c9c8cb" stroke-width="1"/><rect x="83.00" y="989.00" width="90.00" height="18.00" fill="#e6e5e8"/><text x="94.0" y="1001.0" font-size="13" fill="#333" textLength="67.0" lengthAdjust="spacingAndGlyphs">Einführung</text><line x1="173.5" y1="990" x2="173.5" y2="1007" stroke="#c9c8cb" stroke-width="1"/><text x="185.0" y="1001.0" font-size="13" fill="#555" textLength="86.0" lengthAdjust="spacingAndGlyphs">Farbgenerator</text><line x1="284.5" y1="990" x2="284.5" y2="1007" stroke="#c9c8cb" stroke-width="1"/><text x="296.0" y="1001.0" font-size="13" fill="#555" textLength="78.0" lengthAdjust="spacingAndGlyphs">Stammdaten</text><line x1="387.5" y1="990" x2="387.5" y2="1007" stroke="#c9c8cb" stroke-width="1"/><rect x="388.75" y="990.00" width="116.65" height="16.50" fill="#9edb08"/><text x="399.8" y="1001.0" font-size="13" fill="#222" textLength="93.6" lengthAdjust="spacingAndGlyphs">Projektplan_4M</text><rect x="628.50" y="990.00" width="124.80" height="16.50" fill="#9edb08"/><text x="639.5" y="1001.0" font-size="13" fill="#222" textLength="101.8" lengthAdjust="spacingAndGlyphs">Projektplan_12M</text><rect x="756.80" y="990.00" width="124.20" height="16.50" fill="#9edb08"/><text x="767.8" y="1001.0" font-size="13" fill="#222" textLength="101.2" lengthAdjust="spacingAndGlyphs">Projektplan_24M</text><defs><linearGradient id="actg" x1="0" y1="0" x2="0" y2="1"><stop offset="0.55" stop-color="#f5f4f7"/><stop offset="1" stop-color="#cfe9b0"/></linearGradient></defs><rect x="507.80" y="988.50" width="118.70" height="18.50" fill="url(#actg)"/><line x1="507.8" y1="988.5" x2="507.8" y2="1007" stroke="#c6c5c8" stroke-width="1"/><line x1="626.5" y1="988.5" x2="626.5" y2="1007" stroke="#c6c5c8" stroke-width="1"/><text x="517.0" y="1001.0" font-size="13" fill="#217346" font-weight="bold" textLength="100.0" lengthAdjust="spacingAndGlyphs">Projektplan_9M</text><circle cx="917" cy="999" r="6.3" fill="none" stroke="#666" stroke-width="1.1"/><line x1="913" y1="999" x2="921" y2="999" stroke="#666" stroke-width="1.2"/><line x1="917" y1="995" x2="917" y2="1003" stroke="#666" stroke-width="1.2"/><circle cx="1493.5" cy="995" r="0.9" fill="#666"/><circle cx="1493.5" cy="999.5" r="0.9" fill="#666"/><circle cx="1493.5" cy="1004" r="0.9" fill="#666"/><rect x="1507.50" y="992.50" width="391.00" height="14.00" fill="#dedbde" stroke="#c6c5c8" stroke-width="1"/><rect x="1507.50" y="992.50" width="15.00" height="14.00" fill="#f7f6f9" stroke="#c6c5c8" stroke-width="1"/><rect x="1522.50" y="992.50" width="16.00" height="14.00" fill="#f7f6f9" stroke="#c6c5c8" stroke-width="1"/><rect x="1883.50" y="992.50" width="15.00" height="14.00" fill="#f7f6f9" stroke="#c6c5c8" stroke-width="1"/><path d="M1517 995.5 l-4 4 l4 4 z" fill="#444"/><path d="M1889 995.5 l4 4 l-4 4 z" fill="#444"/></svg></div><div id="frame" style="position:absolute;left:0;top:0;width:1914px;height:1004px;border:3px solid #327c3f;pointer-events:none"></div>
</body></html>
